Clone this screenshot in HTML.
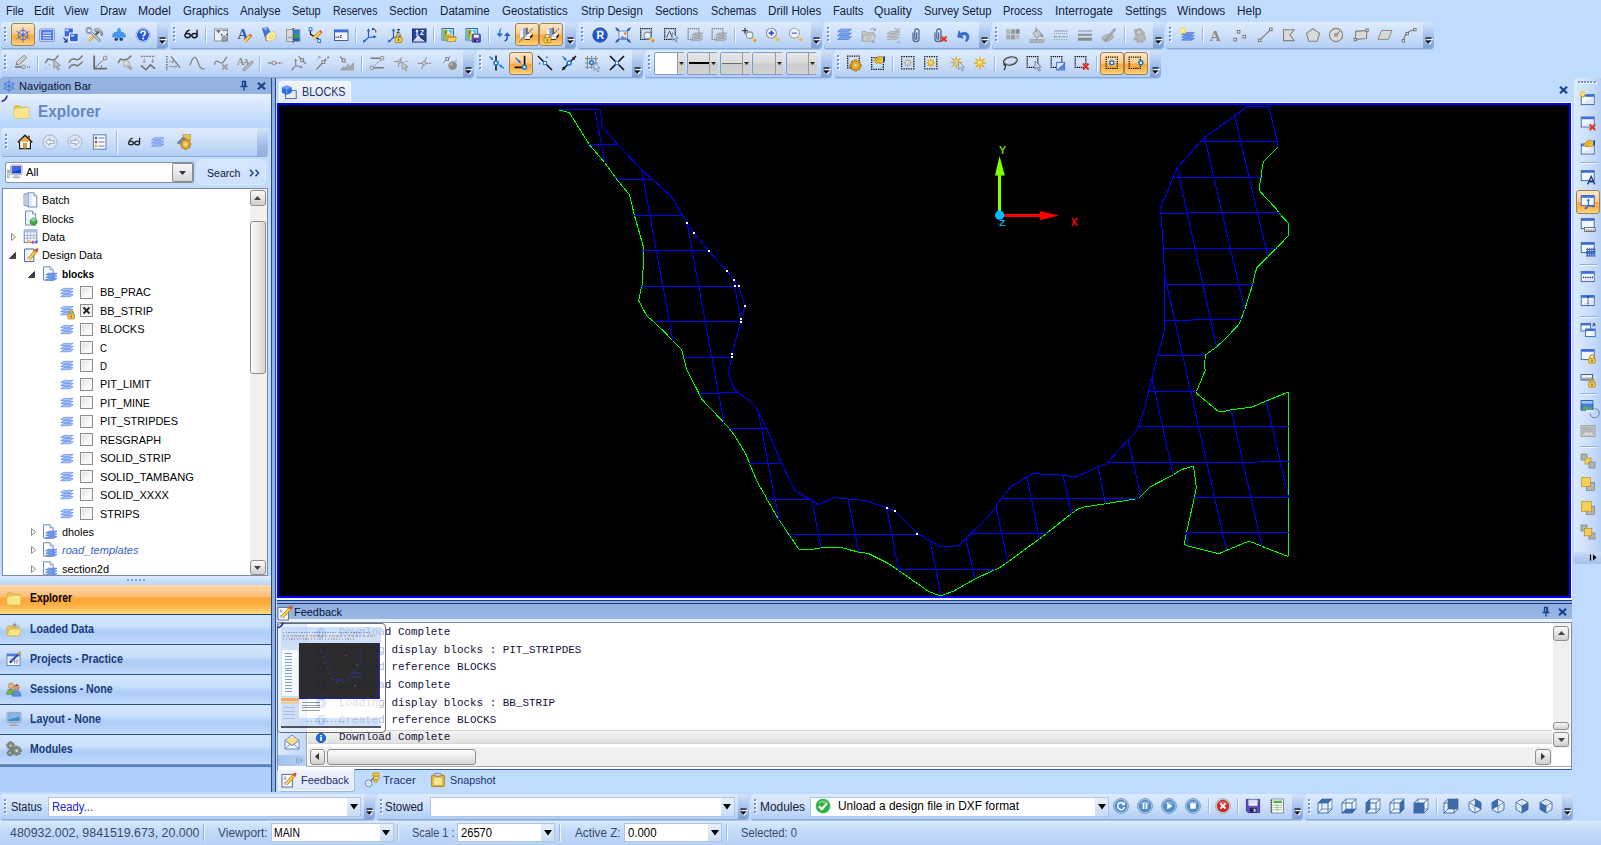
<!DOCTYPE html>
<html><head><meta charset="utf-8"><title>BLOCKS</title>
<style>
html,body{margin:0;padding:0;}
body{width:1601px;height:845px;overflow:hidden;background:#BFDBFF;position:relative;font-family:"Liberation Sans",sans-serif;}
body div,body span,body svg{position:absolute;display:block;}
svg{overflow:visible;}
</style></head><body>
<div style="left:0px;top:0px;width:1601px;height:22px;background:linear-gradient(#C3DDFF,#BFDBFF);"></div>
<span style="left:6.00px;top:2.84px;font:12px/16px 'Liberation Sans',sans-serif;color:#15213A;white-space:pre;transform-origin:0 0;transform:scaleX(0.9102);">File</span>
<span style="left:33.70px;top:2.84px;font:12px/16px 'Liberation Sans',sans-serif;color:#15213A;white-space:pre;transform-origin:0 0;transform:scaleX(0.9817);">Edit</span>
<span style="left:64.00px;top:2.84px;font:12px/16px 'Liberation Sans',sans-serif;color:#15213A;white-space:pre;transform-origin:0 0;transform:scaleX(0.9460);">View</span>
<span style="left:100.00px;top:2.84px;font:12px/16px 'Liberation Sans',sans-serif;color:#15213A;white-space:pre;transform-origin:0 0;transform:scaleX(0.9464);">Draw</span>
<span style="left:138.30px;top:2.84px;font:12px/16px 'Liberation Sans',sans-serif;color:#15213A;white-space:pre;transform-origin:0 0;transform:scaleX(1.0097);">Model</span>
<span style="left:183.00px;top:2.84px;font:12px/16px 'Liberation Sans',sans-serif;color:#15213A;white-space:pre;transform-origin:0 0;transform:scaleX(0.9517);">Graphics</span>
<span style="left:240.00px;top:2.84px;font:12px/16px 'Liberation Sans',sans-serif;color:#15213A;white-space:pre;transform-origin:0 0;transform:scaleX(0.9510);">Analyse</span>
<span style="left:291.70px;top:2.84px;font:12px/16px 'Liberation Sans',sans-serif;color:#15213A;white-space:pre;transform-origin:0 0;transform:scaleX(0.9152);">Setup</span>
<span style="left:333.20px;top:2.84px;font:12px/16px 'Liberation Sans',sans-serif;color:#15213A;white-space:pre;transform-origin:0 0;transform:scaleX(0.8780);">Reserves</span>
<span style="left:388.90px;top:2.84px;font:12px/16px 'Liberation Sans',sans-serif;color:#15213A;white-space:pre;transform-origin:0 0;transform:scaleX(0.9594);">Section</span>
<span style="left:440.00px;top:2.84px;font:12px/16px 'Liberation Sans',sans-serif;color:#15213A;white-space:pre;transform-origin:0 0;transform:scaleX(0.9677);">Datamine</span>
<span style="left:501.90px;top:2.84px;font:12px/16px 'Liberation Sans',sans-serif;color:#15213A;white-space:pre;transform-origin:0 0;transform:scaleX(0.9579);">Geostatistics</span>
<span style="left:580.50px;top:2.84px;font:12px/16px 'Liberation Sans',sans-serif;color:#15213A;white-space:pre;transform-origin:0 0;transform:scaleX(0.9440);">Strip Design</span>
<span style="left:655.30px;top:2.84px;font:12px/16px 'Liberation Sans',sans-serif;color:#15213A;white-space:pre;transform-origin:0 0;transform:scaleX(0.9386);">Sections</span>
<span style="left:711.30px;top:2.84px;font:12px/16px 'Liberation Sans',sans-serif;color:#15213A;white-space:pre;transform-origin:0 0;transform:scaleX(0.9036);">Schemas</span>
<span style="left:768.30px;top:2.84px;font:12px/16px 'Liberation Sans',sans-serif;color:#15213A;white-space:pre;transform-origin:0 0;transform:scaleX(0.9749);">Drill Holes</span>
<span style="left:833.40px;top:2.84px;font:12px/16px 'Liberation Sans',sans-serif;color:#15213A;white-space:pre;transform-origin:0 0;transform:scaleX(0.9303);">Faults</span>
<span style="left:873.90px;top:2.84px;font:12px/16px 'Liberation Sans',sans-serif;color:#15213A;white-space:pre;transform-origin:0 0;transform:scaleX(1.0121);">Quality</span>
<span style="left:923.50px;top:2.84px;font:12px/16px 'Liberation Sans',sans-serif;color:#15213A;white-space:pre;transform-origin:0 0;transform:scaleX(0.9370);">Survey Setup</span>
<span style="left:1003.00px;top:2.84px;font:12px/16px 'Liberation Sans',sans-serif;color:#15213A;white-space:pre;transform-origin:0 0;transform:scaleX(0.9112);">Process</span>
<span style="left:1055.00px;top:2.84px;font:12px/16px 'Liberation Sans',sans-serif;color:#15213A;white-space:pre;transform-origin:0 0;transform:scaleX(0.9994);">Interrogate</span>
<span style="left:1125.20px;top:2.84px;font:12px/16px 'Liberation Sans',sans-serif;color:#15213A;white-space:pre;transform-origin:0 0;transform:scaleX(0.9594);">Settings</span>
<span style="left:1177.30px;top:2.84px;font:12px/16px 'Liberation Sans',sans-serif;color:#15213A;white-space:pre;transform-origin:0 0;transform:scaleX(0.9922);">Windows</span>
<span style="left:1237.40px;top:2.84px;font:12px/16px 'Liberation Sans',sans-serif;color:#15213A;white-space:pre;transform-origin:0 0;transform:scaleX(0.9887);">Help</span>
<div style="left:1px;top:22px;width:167px;height:26px;background:linear-gradient(#DDEBFD 0%,#CFE1FA 45%,#BDD5F7 80%,#B2CCF3 100%);border-radius:3px 4px 4px 3px;box-shadow:0 1px 0 #86A9DC, 0 2px 0 #A9C6EF;"></div>
<div style="left:157px;top:22px;width:11px;height:26px;background:linear-gradient(#D3E3F9 0%,#A9C3EC 50%,#7F9FD6 100%);border-radius:0 4px 4px 0;"></div>
<svg style="left:159px;top:36.7px;" width="8" height="9" viewBox="0 0 8 9"><path d="M1 1.5h6" stroke="#fff" stroke-width="1" transform="translate(1,1)"/><path d="M0.5 1h6" stroke="#000" stroke-width="1.2"/><path d="M1.2 4.5h6l-3 3.2z" fill="#fff"/><path d="M0.3 3.6h6l-3 3.2z" fill="#000"/></svg>
<svg style="left:4px;top:27px;" width="4" height="17" viewBox="0 0 4 17"><rect x="1" y="1" width="2" height="2" fill="#fff"/><rect x="0" y="0" width="2" height="2" fill="#6B93D6"/><rect x="1" y="5" width="2" height="2" fill="#fff"/><rect x="0" y="4" width="2" height="2" fill="#6B93D6"/><rect x="1" y="9" width="2" height="2" fill="#fff"/><rect x="0" y="8" width="2" height="2" fill="#6B93D6"/><rect x="1" y="13" width="2" height="2" fill="#fff"/><rect x="0" y="12" width="2" height="2" fill="#6B93D6"/></svg>
<div style="left:170px;top:22px;width:406px;height:26px;background:linear-gradient(#DDEBFD 0%,#CFE1FA 45%,#BDD5F7 80%,#B2CCF3 100%);border-radius:3px 4px 4px 3px;box-shadow:0 1px 0 #86A9DC, 0 2px 0 #A9C6EF;"></div>
<div style="left:565px;top:22px;width:11px;height:26px;background:linear-gradient(#D3E3F9 0%,#A9C3EC 50%,#7F9FD6 100%);border-radius:0 4px 4px 0;"></div>
<svg style="left:567px;top:36.7px;" width="8" height="9" viewBox="0 0 8 9"><path d="M1 1.5h6" stroke="#fff" stroke-width="1" transform="translate(1,1)"/><path d="M0.5 1h6" stroke="#000" stroke-width="1.2"/><path d="M1.2 4.5h6l-3 3.2z" fill="#fff"/><path d="M0.3 3.6h6l-3 3.2z" fill="#000"/></svg>
<svg style="left:173px;top:27px;" width="4" height="17" viewBox="0 0 4 17"><rect x="1" y="1" width="2" height="2" fill="#fff"/><rect x="0" y="0" width="2" height="2" fill="#6B93D6"/><rect x="1" y="5" width="2" height="2" fill="#fff"/><rect x="0" y="4" width="2" height="2" fill="#6B93D6"/><rect x="1" y="9" width="2" height="2" fill="#fff"/><rect x="0" y="8" width="2" height="2" fill="#6B93D6"/><rect x="1" y="13" width="2" height="2" fill="#fff"/><rect x="0" y="12" width="2" height="2" fill="#6B93D6"/></svg>
<div style="left:578px;top:22px;width:244px;height:26px;background:linear-gradient(#DDEBFD 0%,#CFE1FA 45%,#BDD5F7 80%,#B2CCF3 100%);border-radius:3px 4px 4px 3px;box-shadow:0 1px 0 #86A9DC, 0 2px 0 #A9C6EF;"></div>
<div style="left:811px;top:22px;width:11px;height:26px;background:linear-gradient(#D3E3F9 0%,#A9C3EC 50%,#7F9FD6 100%);border-radius:0 4px 4px 0;"></div>
<svg style="left:813px;top:36.7px;" width="8" height="9" viewBox="0 0 8 9"><path d="M1 1.5h6" stroke="#fff" stroke-width="1" transform="translate(1,1)"/><path d="M0.5 1h6" stroke="#000" stroke-width="1.2"/><path d="M1.2 4.5h6l-3 3.2z" fill="#fff"/><path d="M0.3 3.6h6l-3 3.2z" fill="#000"/></svg>
<svg style="left:581px;top:27px;" width="4" height="17" viewBox="0 0 4 17"><rect x="1" y="1" width="2" height="2" fill="#fff"/><rect x="0" y="0" width="2" height="2" fill="#6B93D6"/><rect x="1" y="5" width="2" height="2" fill="#fff"/><rect x="0" y="4" width="2" height="2" fill="#6B93D6"/><rect x="1" y="9" width="2" height="2" fill="#fff"/><rect x="0" y="8" width="2" height="2" fill="#6B93D6"/><rect x="1" y="13" width="2" height="2" fill="#fff"/><rect x="0" y="12" width="2" height="2" fill="#6B93D6"/></svg>
<div style="left:824px;top:22px;width:166px;height:26px;background:linear-gradient(#DDEBFD 0%,#CFE1FA 45%,#BDD5F7 80%,#B2CCF3 100%);border-radius:3px 4px 4px 3px;box-shadow:0 1px 0 #86A9DC, 0 2px 0 #A9C6EF;"></div>
<div style="left:979px;top:22px;width:11px;height:26px;background:linear-gradient(#D3E3F9 0%,#A9C3EC 50%,#7F9FD6 100%);border-radius:0 4px 4px 0;"></div>
<svg style="left:981px;top:36.7px;" width="8" height="9" viewBox="0 0 8 9"><path d="M1 1.5h6" stroke="#fff" stroke-width="1" transform="translate(1,1)"/><path d="M0.5 1h6" stroke="#000" stroke-width="1.2"/><path d="M1.2 4.5h6l-3 3.2z" fill="#fff"/><path d="M0.3 3.6h6l-3 3.2z" fill="#000"/></svg>
<svg style="left:827px;top:27px;" width="4" height="17" viewBox="0 0 4 17"><rect x="1" y="1" width="2" height="2" fill="#fff"/><rect x="0" y="0" width="2" height="2" fill="#6B93D6"/><rect x="1" y="5" width="2" height="2" fill="#fff"/><rect x="0" y="4" width="2" height="2" fill="#6B93D6"/><rect x="1" y="9" width="2" height="2" fill="#fff"/><rect x="0" y="8" width="2" height="2" fill="#6B93D6"/><rect x="1" y="13" width="2" height="2" fill="#fff"/><rect x="0" y="12" width="2" height="2" fill="#6B93D6"/></svg>
<div style="left:992px;top:22px;width:172px;height:26px;background:linear-gradient(#DDEBFD 0%,#CFE1FA 45%,#BDD5F7 80%,#B2CCF3 100%);border-radius:3px 4px 4px 3px;box-shadow:0 1px 0 #86A9DC, 0 2px 0 #A9C6EF;"></div>
<div style="left:1153px;top:22px;width:11px;height:26px;background:linear-gradient(#D3E3F9 0%,#A9C3EC 50%,#7F9FD6 100%);border-radius:0 4px 4px 0;"></div>
<svg style="left:1155px;top:36.7px;" width="8" height="9" viewBox="0 0 8 9"><path d="M1 1.5h6" stroke="#fff" stroke-width="1" transform="translate(1,1)"/><path d="M0.5 1h6" stroke="#000" stroke-width="1.2"/><path d="M1.2 4.5h6l-3 3.2z" fill="#fff"/><path d="M0.3 3.6h6l-3 3.2z" fill="#000"/></svg>
<svg style="left:995px;top:27px;" width="4" height="17" viewBox="0 0 4 17"><rect x="1" y="1" width="2" height="2" fill="#fff"/><rect x="0" y="0" width="2" height="2" fill="#6B93D6"/><rect x="1" y="5" width="2" height="2" fill="#fff"/><rect x="0" y="4" width="2" height="2" fill="#6B93D6"/><rect x="1" y="9" width="2" height="2" fill="#fff"/><rect x="0" y="8" width="2" height="2" fill="#6B93D6"/><rect x="1" y="13" width="2" height="2" fill="#fff"/><rect x="0" y="12" width="2" height="2" fill="#6B93D6"/></svg>
<div style="left:1166px;top:22px;width:268px;height:26px;background:linear-gradient(#DDEBFD 0%,#CFE1FA 45%,#BDD5F7 80%,#B2CCF3 100%);border-radius:3px 4px 4px 3px;box-shadow:0 1px 0 #86A9DC, 0 2px 0 #A9C6EF;"></div>
<div style="left:1423px;top:22px;width:11px;height:26px;background:linear-gradient(#D3E3F9 0%,#A9C3EC 50%,#7F9FD6 100%);border-radius:0 4px 4px 0;"></div>
<svg style="left:1425px;top:36.7px;" width="8" height="9" viewBox="0 0 8 9"><path d="M1 1.5h6" stroke="#fff" stroke-width="1" transform="translate(1,1)"/><path d="M0.5 1h6" stroke="#000" stroke-width="1.2"/><path d="M1.2 4.5h6l-3 3.2z" fill="#fff"/><path d="M0.3 3.6h6l-3 3.2z" fill="#000"/></svg>
<svg style="left:1169px;top:27px;" width="4" height="17" viewBox="0 0 4 17"><rect x="1" y="1" width="2" height="2" fill="#fff"/><rect x="0" y="0" width="2" height="2" fill="#6B93D6"/><rect x="1" y="5" width="2" height="2" fill="#fff"/><rect x="0" y="4" width="2" height="2" fill="#6B93D6"/><rect x="1" y="9" width="2" height="2" fill="#fff"/><rect x="0" y="8" width="2" height="2" fill="#6B93D6"/><rect x="1" y="13" width="2" height="2" fill="#fff"/><rect x="0" y="12" width="2" height="2" fill="#6B93D6"/></svg>
<div style="left:1px;top:50px;width:473px;height:26.5px;background:linear-gradient(#DDEBFD 0%,#CFE1FA 45%,#BDD5F7 80%,#B2CCF3 100%);border-radius:3px 4px 4px 3px;box-shadow:0 1px 0 #86A9DC, 0 2px 0 #A9C6EF;"></div>
<div style="left:463px;top:50px;width:11px;height:26.5px;background:linear-gradient(#D3E3F9 0%,#A9C3EC 50%,#7F9FD6 100%);border-radius:0 4px 4px 0;"></div>
<svg style="left:465px;top:67.1px;" width="8" height="9" viewBox="0 0 8 9"><path d="M1 1.5h6" stroke="#fff" stroke-width="1" transform="translate(1,1)"/><path d="M0.5 1h6" stroke="#000" stroke-width="1.2"/><path d="M1.2 4.5h6l-3 3.2z" fill="#fff"/><path d="M0.3 3.6h6l-3 3.2z" fill="#000"/></svg>
<svg style="left:4px;top:55px;" width="4" height="17" viewBox="0 0 4 17"><rect x="1" y="1" width="2" height="2" fill="#fff"/><rect x="0" y="0" width="2" height="2" fill="#6B93D6"/><rect x="1" y="5" width="2" height="2" fill="#fff"/><rect x="0" y="4" width="2" height="2" fill="#6B93D6"/><rect x="1" y="9" width="2" height="2" fill="#fff"/><rect x="0" y="8" width="2" height="2" fill="#6B93D6"/><rect x="1" y="13" width="2" height="2" fill="#fff"/><rect x="0" y="12" width="2" height="2" fill="#6B93D6"/></svg>
<div style="left:476px;top:50px;width:167px;height:26.5px;background:linear-gradient(#DDEBFD 0%,#CFE1FA 45%,#BDD5F7 80%,#B2CCF3 100%);border-radius:3px 4px 4px 3px;box-shadow:0 1px 0 #86A9DC, 0 2px 0 #A9C6EF;"></div>
<div style="left:632px;top:50px;width:11px;height:26.5px;background:linear-gradient(#D3E3F9 0%,#A9C3EC 50%,#7F9FD6 100%);border-radius:0 4px 4px 0;"></div>
<svg style="left:634px;top:67.1px;" width="8" height="9" viewBox="0 0 8 9"><path d="M1 1.5h6" stroke="#fff" stroke-width="1" transform="translate(1,1)"/><path d="M0.5 1h6" stroke="#000" stroke-width="1.2"/><path d="M1.2 4.5h6l-3 3.2z" fill="#fff"/><path d="M0.3 3.6h6l-3 3.2z" fill="#000"/></svg>
<svg style="left:479px;top:55px;" width="4" height="17" viewBox="0 0 4 17"><rect x="1" y="1" width="2" height="2" fill="#fff"/><rect x="0" y="0" width="2" height="2" fill="#6B93D6"/><rect x="1" y="5" width="2" height="2" fill="#fff"/><rect x="0" y="4" width="2" height="2" fill="#6B93D6"/><rect x="1" y="9" width="2" height="2" fill="#fff"/><rect x="0" y="8" width="2" height="2" fill="#6B93D6"/><rect x="1" y="13" width="2" height="2" fill="#fff"/><rect x="0" y="12" width="2" height="2" fill="#6B93D6"/></svg>
<div style="left:645px;top:50px;width:187px;height:26.5px;background:linear-gradient(#DDEBFD 0%,#CFE1FA 45%,#BDD5F7 80%,#B2CCF3 100%);border-radius:3px 4px 4px 3px;box-shadow:0 1px 0 #86A9DC, 0 2px 0 #A9C6EF;"></div>
<div style="left:821px;top:50px;width:11px;height:26.5px;background:linear-gradient(#D3E3F9 0%,#A9C3EC 50%,#7F9FD6 100%);border-radius:0 4px 4px 0;"></div>
<svg style="left:823px;top:67.1px;" width="8" height="9" viewBox="0 0 8 9"><path d="M1 1.5h6" stroke="#fff" stroke-width="1" transform="translate(1,1)"/><path d="M0.5 1h6" stroke="#000" stroke-width="1.2"/><path d="M1.2 4.5h6l-3 3.2z" fill="#fff"/><path d="M0.3 3.6h6l-3 3.2z" fill="#000"/></svg>
<svg style="left:648px;top:55px;" width="4" height="17" viewBox="0 0 4 17"><rect x="1" y="1" width="2" height="2" fill="#fff"/><rect x="0" y="0" width="2" height="2" fill="#6B93D6"/><rect x="1" y="5" width="2" height="2" fill="#fff"/><rect x="0" y="4" width="2" height="2" fill="#6B93D6"/><rect x="1" y="9" width="2" height="2" fill="#fff"/><rect x="0" y="8" width="2" height="2" fill="#6B93D6"/><rect x="1" y="13" width="2" height="2" fill="#fff"/><rect x="0" y="12" width="2" height="2" fill="#6B93D6"/></svg>
<div style="left:834px;top:50px;width:327px;height:26.5px;background:linear-gradient(#DDEBFD 0%,#CFE1FA 45%,#BDD5F7 80%,#B2CCF3 100%);border-radius:3px 4px 4px 3px;box-shadow:0 1px 0 #86A9DC, 0 2px 0 #A9C6EF;"></div>
<div style="left:1150px;top:50px;width:11px;height:26.5px;background:linear-gradient(#D3E3F9 0%,#A9C3EC 50%,#7F9FD6 100%);border-radius:0 4px 4px 0;"></div>
<svg style="left:1152px;top:67.1px;" width="8" height="9" viewBox="0 0 8 9"><path d="M1 1.5h6" stroke="#fff" stroke-width="1" transform="translate(1,1)"/><path d="M0.5 1h6" stroke="#000" stroke-width="1.2"/><path d="M1.2 4.5h6l-3 3.2z" fill="#fff"/><path d="M0.3 3.6h6l-3 3.2z" fill="#000"/></svg>
<svg style="left:837px;top:55px;" width="4" height="17" viewBox="0 0 4 17"><rect x="1" y="1" width="2" height="2" fill="#fff"/><rect x="0" y="0" width="2" height="2" fill="#6B93D6"/><rect x="1" y="5" width="2" height="2" fill="#fff"/><rect x="0" y="4" width="2" height="2" fill="#6B93D6"/><rect x="1" y="9" width="2" height="2" fill="#fff"/><rect x="0" y="8" width="2" height="2" fill="#6B93D6"/><rect x="1" y="13" width="2" height="2" fill="#fff"/><rect x="0" y="12" width="2" height="2" fill="#6B93D6"/></svg>
<div style="left:205px;top:27px;width:1px;height:16px;background:#9ABAEE;"></div>
<div style="left:206px;top:27px;width:1px;height:16px;background:#F3F8FF;"></div>
<div style="left:355px;top:27px;width:1px;height:16px;background:#9ABAEE;"></div>
<div style="left:356px;top:27px;width:1px;height:16px;background:#F3F8FF;"></div>
<div style="left:433px;top:27px;width:1px;height:16px;background:#9ABAEE;"></div>
<div style="left:434px;top:27px;width:1px;height:16px;background:#F3F8FF;"></div>
<div style="left:488px;top:27px;width:1px;height:16px;background:#9ABAEE;"></div>
<div style="left:489px;top:27px;width:1px;height:16px;background:#F3F8FF;"></div>
<div style="left:734px;top:27px;width:1px;height:16px;background:#9ABAEE;"></div>
<div style="left:735px;top:27px;width:1px;height:16px;background:#F3F8FF;"></div>
<div style="left:1124px;top:27px;width:1px;height:16px;background:#9ABAEE;"></div>
<div style="left:1125px;top:27px;width:1px;height:16px;background:#F3F8FF;"></div>
<div style="left:1202px;top:27px;width:1px;height:16px;background:#9ABAEE;"></div>
<div style="left:1203px;top:27px;width:1px;height:16px;background:#F3F8FF;"></div>
<div style="left:37px;top:55.5px;width:1px;height:16px;background:#9ABAEE;"></div>
<div style="left:38px;top:55.5px;width:1px;height:16px;background:#F3F8FF;"></div>
<div style="left:259px;top:55.5px;width:1px;height:16px;background:#9ABAEE;"></div>
<div style="left:260px;top:55.5px;width:1px;height:16px;background:#F3F8FF;"></div>
<div style="left:361px;top:55.5px;width:1px;height:16px;background:#9ABAEE;"></div>
<div style="left:362px;top:55.5px;width:1px;height:16px;background:#F3F8FF;"></div>
<div style="left:892px;top:55.5px;width:1px;height:16px;background:#9ABAEE;"></div>
<div style="left:893px;top:55.5px;width:1px;height:16px;background:#F3F8FF;"></div>
<div style="left:994px;top:55.5px;width:1px;height:16px;background:#9ABAEE;"></div>
<div style="left:995px;top:55.5px;width:1px;height:16px;background:#F3F8FF;"></div>
<div style="left:1096px;top:55.5px;width:1px;height:16px;background:#9ABAEE;"></div>
<div style="left:1097px;top:55.5px;width:1px;height:16px;background:#F3F8FF;"></div>
<div style="left:11px;top:23.2px;width:24px;height:23.3px;box-sizing:border-box;border:1px solid #9A8456;border-radius:3px;background:linear-gradient(#FEE7C8 0%,#FDD6A2 28%,#FDC684 49%,#FBA73C 52%,#FCB54C 75%,#FDD580 100%);"></div>
<div style="left:515.3px;top:23.2px;width:23.5px;height:23.3px;box-sizing:border-box;border:1px solid #9A8456;border-radius:3px;background:linear-gradient(#FEE7C8 0%,#FDD6A2 28%,#FDC684 49%,#FBA73C 52%,#FCB54C 75%,#FDD580 100%);"></div>
<div style="left:539.3px;top:23.2px;width:24px;height:23.3px;box-sizing:border-box;border:1px solid #9A8456;border-radius:3px;background:linear-gradient(#FEE7C8 0%,#FDD6A2 28%,#FDC684 49%,#FBA73C 52%,#FCB54C 75%,#FDD580 100%);"></div>
<div style="left:509.3px;top:51.6px;width:24px;height:23.3px;box-sizing:border-box;border:1px solid #9A8456;border-radius:3px;background:linear-gradient(#FEE7C8 0%,#FDD6A2 28%,#FDC684 49%,#FBA73C 52%,#FCB54C 75%,#FDD580 100%);"></div>
<div style="left:1100.2px;top:51.6px;width:23.4px;height:23.3px;box-sizing:border-box;border:1px solid #9A8456;border-radius:3px;background:linear-gradient(#FEE7C8 0%,#FDD6A2 28%,#FDC684 49%,#FBA73C 52%,#FCB54C 75%,#FDD580 100%);"></div>
<div style="left:1123.6px;top:51.6px;width:24px;height:23.3px;box-sizing:border-box;border:1px solid #9A8456;border-radius:3px;background:linear-gradient(#FEE7C8 0%,#FDD6A2 28%,#FDC684 49%,#FBA73C 52%,#FCB54C 75%,#FDD580 100%);"></div>
<div style="left:0px;top:77.5px;width:271px;height:17px;background:#95B3E0;"></div>
<span style="left:19.00px;top:79.19px;font:11px/14px 'Liberation Sans',sans-serif;color:#0A1433;white-space:pre;transform-origin:0 0;transform:scaleX(1.0049);">Navigation Bar</span>
<svg style="left:240px;top:81px;" width="8" height="10" viewBox="0 0 8 10"><path d="M2 0.5h4M2.5 0.5v5M5.5 0.5v5M4.8 0.5v5M0.5 5.5h7M4 5.5v4" stroke="#15428B" stroke-width="1.35" fill="none"/></svg>
<svg style="left:257px;top:82px;" width="9" height="8" viewBox="0 0 9 8"><path d="M1 0.8l7 6.4M8 0.8l-7 6.4" stroke="#15428B" stroke-width="2.2" fill="none"/></svg>
<div style="left:0px;top:94.2px;width:271px;height:33.5px;background:linear-gradient(#E8F1FE,#D3E4FD 45%,#B5D3FC);"></div>
<span style="left:37.50px;top:100.98px;font:bold 16.5px/21px 'Liberation Sans',sans-serif;color:#6487C4;white-space:pre;transform-origin:0 0;transform:scaleX(0.9337);">Explorer</span>
<svg style="left:1px;top:95px;" width="8" height="8" viewBox="0 0 8 8"><path d="M6 0.5Q5.5 5 0.5 6.5" stroke="#1A2F9A" stroke-width="1.6" fill="none"/></svg>
<div style="left:1px;top:127.8px;width:267px;height:27.8px;background:linear-gradient(#DDEBFD 0%,#CFE1FA 45%,#BDD5F7 80%,#B2CCF3 100%);border-radius:3px;box-shadow:0 1px 0 #86A9DC;"></div>
<div style="left:257px;top:127.8px;width:11px;height:27.8px;background:linear-gradient(#D3E3F9 0%,#A9C3EC 50%,#8FAEE0 100%);border-radius:0 4px 4px 0;"></div>
<svg style="left:259px;top:146px;" width="8" height="8" viewBox="0 0 8 8"><path d="M0.5 1h6" stroke="#9AB3DD" stroke-width="1.2"/><path d="M0.3 3.6h6l-3 3.2z" fill="#9AB3DD"/></svg>
<svg style="left:5px;top:133.5px;" width="4" height="17" viewBox="0 0 4 17"><rect x="1" y="1" width="2" height="2" fill="#fff"/><rect x="0" y="0" width="2" height="2" fill="#6B93D6"/><rect x="1" y="5" width="2" height="2" fill="#fff"/><rect x="0" y="4" width="2" height="2" fill="#6B93D6"/><rect x="1" y="9" width="2" height="2" fill="#fff"/><rect x="0" y="8" width="2" height="2" fill="#6B93D6"/><rect x="1" y="13" width="2" height="2" fill="#fff"/><rect x="0" y="12" width="2" height="2" fill="#6B93D6"/></svg>
<div style="left:116px;top:131px;width:1px;height:23px;background:#9ABAEE;"></div>
<div style="left:117px;top:131px;width:1px;height:23px;background:#F3F8FF;"></div>
<div style="left:5px;top:162px;width:188.5px;height:20.5px;box-sizing:border-box;border:1px solid #8A8F99;border-radius:2px;background:#fff;"></div>
<div style="left:171.5px;top:163px;width:21px;height:18.5px;box-sizing:border-box;border:1px solid #8E8E8E;border-radius:1px;background:linear-gradient(#F6F6F6,#E9E9E9 50%,#D4D4D4);"></div>
<svg style="left:178.5px;top:170.5px;" width="7" height="4" viewBox="0 0 7 4"><path d="M0 0h7l-3.5 4z" fill="#333"/></svg>
<span style="left:26.00px;top:165.19px;font:11px/14px 'Liberation Sans',sans-serif;color:#000;white-space:pre;transform-origin:0 0;transform:scaleX(1.0225);">All</span>
<div style="left:197px;top:160px;width:68px;height:24.4px;background:linear-gradient(#D6E6FD,#CCE0FC);border-radius:5px;box-shadow:0 0 0 1px #DCEAFD;"></div>
<span style="left:206.80px;top:165.52px;font:11.5px/15px 'Liberation Sans',sans-serif;color:#111B33;white-space:pre;transform-origin:0 0;transform:scaleX(0.9193);">Search</span>
<svg style="left:248.5px;top:168.5px;" width="12" height="8" viewBox="0 0 12 8"><path d="M1 0.8l3 3.2-3 3.2M6.5 0.8l3 3.2-3 3.2" stroke="#15428B" stroke-width="1.5" fill="none"/></svg>
<div style="left:1.5px;top:188px;width:266.5px;height:388px;box-sizing:border-box;border:1px solid #7D8B9C;background:#fff;"></div>
<div style="left:250px;top:189px;width:17px;height:386px;background:#F0F0F0;"></div>
<div style="left:249.8px;top:190.3px;width:16px;height:15.5px;box-sizing:border-box;border:1px solid #8E8E8E;border-radius:3px;background:linear-gradient(#FAFAFA,#E4E4E4 50%,#CFCFCF);"></div>
<svg style="left:254.3px;top:196px;" width="7" height="4" viewBox="0 0 7 4"><path d="M0 4h7l-3.5-4z" fill="#444"/></svg>
<div style="left:249.8px;top:559.5px;width:16px;height:15.5px;box-sizing:border-box;border:1px solid #8E8E8E;border-radius:3px;background:linear-gradient(#FAFAFA,#E4E4E4 50%,#CFCFCF);"></div>
<svg style="left:254.3px;top:565.5px;" width="7" height="4" viewBox="0 0 7 4"><path d="M0 0h7l-3.5 4z" fill="#444"/></svg>
<div style="left:249.8px;top:221px;width:16px;height:153px;box-sizing:border-box;border:1px solid #8E8E8E;border-radius:3px;background:linear-gradient(90deg,#FBFBFB,#EDEDED 45%,#D6D6D6);"></div>
<span style="left:42.00px;top:193.19px;font:11px/14px 'Liberation Sans',sans-serif;color:#000;white-space:pre;transform-origin:0 0;transform:scaleX(0.9776);">Batch</span>
<span style="left:42.00px;top:211.62px;font:11px/14px 'Liberation Sans',sans-serif;color:#000;white-space:pre;transform-origin:0 0;transform:scaleX(0.9877);">Blocks</span>
<span style="left:42.00px;top:230.05px;font:11px/14px 'Liberation Sans',sans-serif;color:#000;white-space:pre;transform-origin:0 0;transform:scaleX(0.9899);">Data</span>
<span style="left:42.00px;top:248.48px;font:11px/14px 'Liberation Sans',sans-serif;color:#000;white-space:pre;transform-origin:0 0;transform:scaleX(0.9913);">Design Data</span>
<span style="left:61.50px;top:266.91px;font:bold 11px/14px 'Liberation Sans',sans-serif;color:#000;white-space:pre;transform-origin:0 0;transform:scaleX(0.9183);">blocks</span>
<span style="left:100.00px;top:285.34px;font:11px/14px 'Liberation Sans',sans-serif;color:#000;white-space:pre;transform-origin:0 0;transform:scaleX(0.9931);">BB_PRAC</span>
<div style="left:80px;top:285.65px;width:13px;height:13px;box-sizing:border-box;border:1px solid #8E8F8F;background:linear-gradient(135deg,#DCDCD7,#F7F7F5 60%,#fff);box-shadow:inset 0 0 0 1px #F4F4F4;"></div>
<span style="left:100.00px;top:303.77px;font:11px/14px 'Liberation Sans',sans-serif;color:#000;white-space:pre;transform-origin:0 0;transform:scaleX(0.9965);">BB_STRIP</span>
<div style="left:80px;top:304.08px;width:13px;height:13px;box-sizing:border-box;border:1px solid #8E8F8F;background:linear-gradient(135deg,#DCDCD7,#F7F7F5 60%,#fff);box-shadow:inset 0 0 0 1px #F4F4F4;"></div>
<svg style="left:83px;top:307.08px;" width="7" height="7" viewBox="0 0 7 7"><path d="M0.5 0.5l6 6M6.5 0.5l-6 6" stroke="#222" stroke-width="1.8"/></svg>
<span style="left:100.00px;top:322.20px;font:11px/14px 'Liberation Sans',sans-serif;color:#000;white-space:pre;transform-origin:0 0;transform:scaleX(0.9971);">BLOCKS</span>
<div style="left:80px;top:322.51px;width:13px;height:13px;box-sizing:border-box;border:1px solid #8E8F8F;background:linear-gradient(135deg,#DCDCD7,#F7F7F5 60%,#fff);box-shadow:inset 0 0 0 1px #F4F4F4;"></div>
<span style="left:100.00px;top:340.63px;font:11px/14px 'Liberation Sans',sans-serif;color:#000;white-space:pre;transform-origin:0 0;transform:scaleX(0.8812);">C</span>
<div style="left:80px;top:340.94px;width:13px;height:13px;box-sizing:border-box;border:1px solid #8E8F8F;background:linear-gradient(135deg,#DCDCD7,#F7F7F5 60%,#fff);box-shadow:inset 0 0 0 1px #F4F4F4;"></div>
<span style="left:100.00px;top:359.06px;font:11px/14px 'Liberation Sans',sans-serif;color:#000;white-space:pre;transform-origin:0 0;transform:scaleX(0.8812);">D</span>
<div style="left:80px;top:359.37px;width:13px;height:13px;box-sizing:border-box;border:1px solid #8E8F8F;background:linear-gradient(135deg,#DCDCD7,#F7F7F5 60%,#fff);box-shadow:inset 0 0 0 1px #F4F4F4;"></div>
<span style="left:100.00px;top:377.49px;font:11px/14px 'Liberation Sans',sans-serif;color:#000;white-space:pre;transform-origin:0 0;transform:scaleX(0.9933);">PIT_LIMIT</span>
<div style="left:80px;top:377.8px;width:13px;height:13px;box-sizing:border-box;border:1px solid #8E8F8F;background:linear-gradient(135deg,#DCDCD7,#F7F7F5 60%,#fff);box-shadow:inset 0 0 0 1px #F4F4F4;"></div>
<span style="left:100.00px;top:395.92px;font:11px/14px 'Liberation Sans',sans-serif;color:#000;white-space:pre;transform-origin:0 0;transform:scaleX(0.9856);">PIT_MINE</span>
<div style="left:80px;top:396.23px;width:13px;height:13px;box-sizing:border-box;border:1px solid #8E8F8F;background:linear-gradient(135deg,#DCDCD7,#F7F7F5 60%,#fff);box-shadow:inset 0 0 0 1px #F4F4F4;"></div>
<span style="left:100.00px;top:414.35px;font:11px/14px 'Liberation Sans',sans-serif;color:#000;white-space:pre;transform-origin:0 0;transform:scaleX(0.9969);">PIT_STRIPDES</span>
<div style="left:80px;top:414.66px;width:13px;height:13px;box-sizing:border-box;border:1px solid #8E8F8F;background:linear-gradient(135deg,#DCDCD7,#F7F7F5 60%,#fff);box-shadow:inset 0 0 0 1px #F4F4F4;"></div>
<span style="left:100.00px;top:432.78px;font:11px/14px 'Liberation Sans',sans-serif;color:#000;white-space:pre;transform-origin:0 0;transform:scaleX(0.9880);">RESGRAPH</span>
<div style="left:80px;top:433.09px;width:13px;height:13px;box-sizing:border-box;border:1px solid #8E8F8F;background:linear-gradient(135deg,#DCDCD7,#F7F7F5 60%,#fff);box-shadow:inset 0 0 0 1px #F4F4F4;"></div>
<span style="left:100.00px;top:451.21px;font:11px/14px 'Liberation Sans',sans-serif;color:#000;white-space:pre;transform-origin:0 0;transform:scaleX(0.9927);">SOLID_STRIP</span>
<div style="left:80px;top:451.52px;width:13px;height:13px;box-sizing:border-box;border:1px solid #8E8F8F;background:linear-gradient(135deg,#DCDCD7,#F7F7F5 60%,#fff);box-shadow:inset 0 0 0 1px #F4F4F4;"></div>
<span style="left:100.00px;top:469.64px;font:11px/14px 'Liberation Sans',sans-serif;color:#000;white-space:pre;transform-origin:0 0;transform:scaleX(1.0139);">SOLID_TAMBANG</span>
<div style="left:80px;top:469.95px;width:13px;height:13px;box-sizing:border-box;border:1px solid #8E8F8F;background:linear-gradient(135deg,#DCDCD7,#F7F7F5 60%,#fff);box-shadow:inset 0 0 0 1px #F4F4F4;"></div>
<span style="left:100.00px;top:488.07px;font:11px/14px 'Liberation Sans',sans-serif;color:#000;white-space:pre;transform-origin:0 0;transform:scaleX(1.0076);">SOLID_XXXX</span>
<div style="left:80px;top:488.38px;width:13px;height:13px;box-sizing:border-box;border:1px solid #8E8F8F;background:linear-gradient(135deg,#DCDCD7,#F7F7F5 60%,#fff);box-shadow:inset 0 0 0 1px #F4F4F4;"></div>
<span style="left:100.00px;top:506.50px;font:11px/14px 'Liberation Sans',sans-serif;color:#000;white-space:pre;transform-origin:0 0;transform:scaleX(0.9942);">STRIPS</span>
<div style="left:80px;top:506.81px;width:13px;height:13px;box-sizing:border-box;border:1px solid #8E8F8F;background:linear-gradient(135deg,#DCDCD7,#F7F7F5 60%,#fff);box-shadow:inset 0 0 0 1px #F4F4F4;"></div>
<span style="left:61.50px;top:524.93px;font:11px/14px 'Liberation Sans',sans-serif;color:#000;white-space:pre;transform-origin:0 0;transform:scaleX(0.9873);">dholes</span>
<span style="left:61.50px;top:543.36px;font:italic 11px/14px 'Liberation Sans',sans-serif;color:#3A5FCD;white-space:pre;transform-origin:0 0;transform:scaleX(1.0089);">road_templates</span>
<span style="left:61.50px;top:561.79px;font:11px/14px 'Liberation Sans',sans-serif;color:#000;white-space:pre;transform-origin:0 0;transform:scaleX(0.9982);">section2d</span>
<svg style="left:11px;top:232.86px;" width="5" height="8" viewBox="0 0 5 8"><path d="M0.5 0.5v7l4-3.5z" fill="#fff" stroke="#8A8A8A" stroke-width="1"/></svg>
<svg style="left:9px;top:252.29px;" width="7" height="7" viewBox="0 0 7 7"><path d="M6.5 0.5v6h-6z" fill="#404040" stroke="#262626" stroke-width="0.8"/></svg>
<svg style="left:28px;top:270.72px;" width="7" height="7" viewBox="0 0 7 7"><path d="M6.5 0.5v6h-6z" fill="#404040" stroke="#262626" stroke-width="0.8"/></svg>
<svg style="left:31px;top:527.74px;" width="5" height="8" viewBox="0 0 5 8"><path d="M0.5 0.5v7l4-3.5z" fill="#fff" stroke="#8A8A8A" stroke-width="1"/></svg>
<svg style="left:31px;top:546.17px;" width="5" height="8" viewBox="0 0 5 8"><path d="M0.5 0.5v7l4-3.5z" fill="#fff" stroke="#8A8A8A" stroke-width="1"/></svg>
<svg style="left:31px;top:564.6px;" width="5" height="8" viewBox="0 0 5 8"><path d="M0.5 0.5v7l4-3.5z" fill="#fff" stroke="#8A8A8A" stroke-width="1"/></svg>
<div style="left:0px;top:576px;width:271px;height:8.5px;background:linear-gradient(#DDEBFD,#BAD5F8);"></div>
<div style="left:1.5px;top:575px;width:266.5px;height:1px;background:#7D8B9C;"></div>
<svg style="left:127px;top:579px;" width="20" height="3" viewBox="0 0 20 3"><rect x="0" y="0" width="2" height="2" fill="#7DA0D8"/><rect x="4" y="0" width="2" height="2" fill="#7DA0D8"/><rect x="8" y="0" width="2" height="2" fill="#7DA0D8"/><rect x="12" y="0" width="2" height="2" fill="#7DA0D8"/><rect x="16" y="0" width="2" height="2" fill="#7DA0D8"/></svg>
<div style="left:0px;top:584.3px;width:271px;height:30.4px;background:linear-gradient(#FDD8A8 0%,#FDC98C 25%,#FDBD72 40%,#FCA836 46%,#FCAC3C 65%,#FDC460 85%,#FEDD84 100%);border-top:1px solid #1E3C78;border-bottom:1px solid #1E3C78;box-sizing:border-box;"></div>
<span style="left:29.70px;top:590.44px;font:bold 12px/16px 'Liberation Sans',sans-serif;color:#000;white-space:pre;transform-origin:0 0;transform:scaleX(0.8627);">Explorer</span>
<div style="left:0px;top:614.5px;width:271px;height:30px;background:linear-gradient(#D2E6FD 0%,#C9E0FC 40%,#B4D1F8 52%,#AECDF6 62%,#B8D4F9 85%,#C4DCFB 100%);border-bottom:1px solid #2C4E8F;box-sizing:border-box;"></div>
<span style="left:29.70px;top:620.94px;font:bold 12px/16px 'Liberation Sans',sans-serif;color:#1A3B7A;white-space:pre;transform-origin:0 0;transform:scaleX(0.8887);">Loaded Data</span>
<div style="left:0px;top:644.5px;width:271px;height:30px;background:linear-gradient(#D2E6FD 0%,#C9E0FC 40%,#B4D1F8 52%,#AECDF6 62%,#B8D4F9 85%,#C4DCFB 100%);border-bottom:1px solid #2C4E8F;box-sizing:border-box;"></div>
<span style="left:29.70px;top:650.94px;font:bold 12px/16px 'Liberation Sans',sans-serif;color:#1A3B7A;white-space:pre;transform-origin:0 0;transform:scaleX(0.8862);">Projects - Practice</span>
<div style="left:0px;top:674.5px;width:271px;height:30px;background:linear-gradient(#D2E6FD 0%,#C9E0FC 40%,#B4D1F8 52%,#AECDF6 62%,#B8D4F9 85%,#C4DCFB 100%);border-bottom:1px solid #2C4E8F;box-sizing:border-box;"></div>
<span style="left:29.70px;top:680.94px;font:bold 12px/16px 'Liberation Sans',sans-serif;color:#1A3B7A;white-space:pre;transform-origin:0 0;transform:scaleX(0.8858);">Sessions - None</span>
<div style="left:0px;top:704.5px;width:271px;height:30px;background:linear-gradient(#D2E6FD 0%,#C9E0FC 40%,#B4D1F8 52%,#AECDF6 62%,#B8D4F9 85%,#C4DCFB 100%);border-bottom:1px solid #2C4E8F;box-sizing:border-box;"></div>
<span style="left:29.70px;top:710.94px;font:bold 12px/16px 'Liberation Sans',sans-serif;color:#1A3B7A;white-space:pre;transform-origin:0 0;transform:scaleX(0.8850);">Layout - None</span>
<div style="left:0px;top:734.5px;width:271px;height:30px;background:linear-gradient(#D2E6FD 0%,#C9E0FC 40%,#B4D1F8 52%,#AECDF6 62%,#B8D4F9 85%,#C4DCFB 100%);border-bottom:1px solid #2C4E8F;box-sizing:border-box;"></div>
<span style="left:29.70px;top:740.94px;font:bold 12px/16px 'Liberation Sans',sans-serif;color:#1A3B7A;white-space:pre;transform-origin:0 0;transform:scaleX(0.8774);">Modules</span>
<div style="left:0px;top:763.9px;width:271px;height:2.8px;background:linear-gradient(#6B92CC,#4F7ABC);"></div>
<div style="left:0px;top:766.7px;width:271px;height:25px;background:#AFCFFB;"></div>
<div style="left:271px;top:77.5px;width:1.2px;height:714.2px;background:#2A4A86;"></div>
<div style="left:272.2px;top:77.5px;width:3.2px;height:714.2px;background:#90B1E4;"></div>
<div style="left:275.4px;top:77.5px;width:1px;height:714.2px;background:#2A4A86;"></div>
<div style="left:278.7px;top:81px;width:72.5px;height:21px;box-sizing:border-box;background:linear-gradient(#EEF3FB,#E3EBF8);border:1px solid #F8FBFF;border-bottom:none;border-radius:3px 3px 0 0;"></div>
<span style="left:301.60px;top:83.74px;font:12px/16px 'Liberation Sans',sans-serif;color:#1C2F6E;white-space:pre;transform-origin:0 0;transform:scaleX(0.8935);">BLOCKS</span>
<svg style="left:1558.5px;top:86px;" width="9" height="8" viewBox="0 0 9 8"><path d="M1 0.8l7 6.4M8 0.8l-7 6.4" stroke="#15428B" stroke-width="2.2" fill="none"/></svg>
<div style="left:276.9px;top:101.6px;width:1295.5px;height:498px;background:#F2F7FF;"></div>
<div style="left:276.9px;top:102.6px;width:1294.3px;height:495.4px;background:#0000FF;"></div>
<div style="left:279px;top:105px;width:1290px;height:490.9px;background:#000;"></div>
<svg style="left:0;top:0" width="1601" height="845" viewBox="0 0 1601 845"><g fill="none" stroke-width="1" shape-rendering="crispEdges"><polyline stroke="#00FF00" points="559.4,109.8 560,110.3 569.4,112.5 589.5,144.9 604.8,162.7 617.1,179.7 628.4,193.5 629.5,195 634.5,215.7 643.3,246.5 643.3,264 642.4,284.1 641.5,286.4 638.6,300.7 647,316.1 653.9,322 665.2,332.7 672.9,341.1 681.7,349.6 683.7,357.8 686.5,369.1 698.9,393.2 701.4,398.9 724,422.7 729,428.3 735.2,436.5 746.5,455.3 749.5,463.7 757.6,482.6 766.3,497.6 767,499.5 778.9,519.6 788.9,534.7 799,549.3 812.8,549.3 820.9,547.8 828.5,547.2 840.4,547.2 849.2,549.7 859.2,552.2 868.6,553.5 888.2,563.4 898.6,570.5 928.3,591.2 938.8,595.4 942.1,595.4 953.4,591.2 974.8,579.1 995.5,569.3 998,568.7 1007.8,562 1039.4,538.9 1046.9,533.1 1055.9,526 1071.6,513.5 1077.8,509.1 1082.8,507.2 1105.4,503.8 1138.7,498.4 1140.9,495.9 1150.8,486.5 1172.9,475.1 1181.2,469.7 1193.3,466.1 1194.5,473.2 1196.3,487.4 1194.5,497.2 1186.5,532.3 1184.2,543.9 1188.3,546 1216.7,553.1 1220.3,553.1 1226.5,550.4 1248.7,541.2 1250.4,541.6 1262,546.4 1287.7,556.3 1288.6,555.8 1288.7,392.7 1288.2,392.1 1266.2,400.9 1251.8,407.2 1231.1,409.7 1223.5,411.6 1218.5,411.6 1196.6,393.4 1196.6,391.1 1205.4,370.2 1204.4,366.4 1205.4,355.1 1216.6,346.9 1226.1,338 1239.4,323.8 1240.6,320.2 1244.7,309.6 1252.7,284.2 1255.4,272.3 1257.1,267.3 1267.8,256.9 1276.3,248 1281.4,243 1288.2,235.9 1288.2,223 1278.8,212.9 1276.6,209.3 1264.2,196 1259.8,191 1259.2,187.8 1261.1,177.4 1262.3,166.5 1263.6,161.5 1278,147.1"/><polyline stroke="#0000FF" points="599.9,109.8 600.8,112.5 602.1,127 617.8,144.5 641.6,169.6 652.9,179.9 670.5,195.6 682.8,215.7 687,222.9 693.9,232.9 708.9,250.9 727,270.9 733.9,280 738.6,286.5 745.1,306 741.1,318.9 740.8,322 732,354 732,356.8 728.5,373.5 734.6,390.1 738.4,392.6 751.6,402.4 755.3,406.4 759.1,413.3 766.6,428.3 781.8,463.7 794.6,490.7 809,498.9 812.1,500.8 818.4,504.5 835.4,497.6 846.6,498.9 864.2,500.4 886.9,507.8 894.8,510.9 917.3,533.5 930.2,540.7 939,546.1 953.4,546.1 959.7,545.2 966,538.2 971,533.6 987.9,517.2 995.8,506.2 1001.8,498.3 1010.1,487.1 1027,477.1 1032.7,473.6 1039.6,473.6 1040.2,474.6 1055.2,474.6 1062.8,475.2 1071.6,476.5 1077.2,476.5 1097.9,466.7 1106.1,463.9 1107.9,462.2 1128,440.1 1134.9,433.2 1138.7,426.3 1144.5,409 1148.6,391.1 1152,378.3 1157.7,355.7 1164.5,330.9 1164.5,275.9 1163.4,248.5 1160.9,212.9 1161.5,204 1166,196 1172.9,177.4 1177.3,167.8 1185.2,159 1194.6,148.3 1200.6,141.4 1204.6,137.6 1234.7,115.7 1247.5,106.3 1268.6,106.3 1277.4,141.4 1278,147.1"/><path stroke="#0000FF" d="M559.4 109.8L599.9 109.8M594.9 109.3L604.8 162.7M641.6 169.6L672.9 341.1M687 222.9L724 422.7M733.9 280L740.8 322M758.5 412.7L778.9 519.6M812.1 500.8L820.9 547.8M847.9 498.9L858.9 551.8M886.9 507.8L898.6 570.5M930.2 540.7L940.9 595.4M966 538.2L974.8 579.1M995.8 506.2L1007.8 562M1027 477.1L1039.4 538.9M1062.8 475.2L1071.6 513.5M1097.9 466.7L1105.4 503.8M1128 440.1L1140.9 495.9M1152 378.3L1173.2 475M1164.8 275.9L1226.5 550.4M1231.1 409.7L1262 546.4M1266.2 400.9L1288.6 497.2M1234.7 115.7L1267.8 256.9M1204.6 137.6L1244.7 309.6M1177.3 167.8L1216.6 346.9M1186.5 532.3L1188.3 546M589.5 144.8L617.8 144.6M617.1 179.9L652.9 179.8M634.5 215.7L682.8 215.6M642.5 250.9L708.9 250.7M641.5 286.4L735 286M653.9 321.9L740.8 321.5M683.7 357.6L732 357.4M698.9 393.2L738.4 392.8M729 428.4L766.6 428.2M749.5 463.8L781.8 463.6M767 499.5L809 499.2M788.9 534.8L917.3 534.1M971 533.8L1046.9 533.3M898.6 569.7L995.5 569.3M1001.8 498.6L1138.7 498.1M1194.5 497.4L1288.6 497.1M1107.9 462.5L1288.6 461.9M1137.9 426.6L1288.7 426.1M1148.6 391.2L1196.6 391M1157.7 355.8L1205.4 355.6M1163.4 320.2L1240.6 319.7M1164.8 284.4L1252.7 284.1M1163.4 248.7L1276.3 248.3M1160.4 213.1L1278.8 212.7M1172.9 177.5L1261.1 177.3M1200.6 141.5L1277.4 141.3M1186.5 532.4L1288.6 532.2"/></g><rect x="686" y="222" width="2" height="2" fill="#fff"/><rect x="693" y="232" width="2" height="2" fill="#fff"/><rect x="708" y="250" width="2" height="2" fill="#fff"/><rect x="726" y="270" width="2" height="2" fill="#fff"/><rect x="733" y="279" width="2" height="2" fill="#fff"/><rect x="734" y="285" width="2" height="2" fill="#fff"/><rect x="738" y="285" width="2" height="2" fill="#fff"/><rect x="744" y="305" width="2" height="2" fill="#fff"/><rect x="740" y="318" width="2" height="2" fill="#fff"/><rect x="740" y="321" width="2" height="2" fill="#fff"/><rect x="731" y="353" width="2" height="2" fill="#fff"/><rect x="731" y="356" width="2" height="2" fill="#fff"/><rect x="886" y="507" width="2" height="2" fill="#fff"/><rect x="894" y="510" width="2" height="2" fill="#fff"/><rect x="916" y="533" width="2" height="2" fill="#fff"/><rect x="998" y="174" width="3" height="38" fill="#80FF00"/><path d="M999.5 156L995 175.6h9.8z" fill="#80FF00"/><rect x="1004" y="214" width="37" height="3" fill="#FF0000"/><path d="M1059 215.5L1040 211v9.2z" fill="#FF0000"/><circle cx="999.6" cy="215.2" r="4.6" fill="#00BFFF"/></svg>
<span style="left:999.00px;top:144.03px;font:bold 10px/13px 'Liberation Sans',sans-serif;color:#70D800;white-space:pre;transform-origin:0 0;transform:scaleX(1.0495);">Y</span>
<span style="left:1071.30px;top:216.03px;font:bold 10px/13px 'Liberation Sans',sans-serif;color:#FF0000;white-space:pre;transform-origin:0 0;transform:scaleX(1.0045);">X</span>
<span style="left:999.00px;top:217.55px;font:bold 8.5px/11px 'Liberation Sans',sans-serif;color:#19A8E8;white-space:pre;transform-origin:0 0;transform:scaleX(1.2135);">Z</span>
<div style="left:276.9px;top:599.5px;width:1295px;height:1px;background:#1E3C78;"></div>
<div style="left:276.9px;top:600.5px;width:1295px;height:2.3px;background:#8FB0E3;"></div>
<div style="left:276.9px;top:602.7px;width:1295px;height:1.1px;background:#1E3C78;"></div>
<div style="left:276.9px;top:603.8px;width:1295px;height:15.6px;background:linear-gradient(#8FAEDF,#9BB8E5);"></div>
<div style="left:276.9px;top:619.4px;width:1295px;height:2.6px;background:#E9F1FD;"></div>
<span style="left:294.30px;top:605.19px;font:11px/14px 'Liberation Sans',sans-serif;color:#0A1433;white-space:pre;transform-origin:0 0;transform:scaleX(0.9937);">Feedback</span>
<svg style="left:1541.5px;top:607px;" width="8" height="10" viewBox="0 0 8 10"><path d="M2 0.5h4M2.5 0.5v5M5.5 0.5v5M4.8 0.5v5M0.5 5.5h7M4 5.5v4" stroke="#15428B" stroke-width="1.35" fill="none"/></svg>
<svg style="left:1557.5px;top:608px;" width="9" height="8" viewBox="0 0 9 8"><path d="M1 0.8l7 6.4M8 0.8l-7 6.4" stroke="#15428B" stroke-width="2.2" fill="none"/></svg>
<div style="left:276.9px;top:622px;width:1295px;height:147.6px;box-sizing:border-box;background:#fff;border:1px solid #7A8EA8;border-bottom:1.5px solid #2E5AA8;"></div>
<div style="left:277.9px;top:623px;width:28.5px;height:142.5px;background:linear-gradient(90deg,#DCE9FC,#C3D8F7);"></div>
<div style="left:277.9px;top:754.5px;width:28.5px;height:11px;background:linear-gradient(90deg,#A3C0EC,#B9D0F4);"></div>
<svg style="left:296px;top:757px;" width="8" height="7" viewBox="0 0 8 7"><path d="M0.6 0.5v6M2.6 0.5v6" stroke="#8FA4C8" stroke-width="1"/><path d="M4.4 0.8v5.4l3-2.7z" fill="#8FA4C8"/></svg>
<div style="left:306.4px;top:622.6px;width:1264.6px;height:144.2px;box-sizing:border-box;border:1px solid #A3A7AE;border-top:none;border-right:none;"></div>
<div style="left:308px;top:730px;width:1244px;height:13.8px;background:linear-gradient(#F4F4F4,#E2E2E2);border-top:1px solid #D0D0D0;border-bottom:1px solid #D6D6D6;box-sizing:border-box;"></div>
<span style="left:338.50px;top:625.39px;font:11px/14px 'Liberation Mono',monospace;color:#121238;white-space:pre;transform-origin:0 0;transform:scaleX(0.9922);">Download Complete</span>
<svg style="left:316px;top:627.6px;" width="10" height="10" viewBox="0 0 10 10"><circle cx="5" cy="5" r="4.6" fill="#1F6FD8" stroke="#0C3E99" stroke-width="0.8"/><rect x="4.2" y="4" width="1.7" height="3.8" fill="#fff"/><rect x="4.2" y="2" width="1.7" height="1.4" fill="#fff"/></svg>
<span style="left:338.50px;top:643.39px;font:11px/14px 'Liberation Mono',monospace;color:#121238;white-space:pre;transform-origin:0 0;transform:scaleX(0.9922);">Loading display blocks : PIT_STRIPDES</span>
<svg style="left:316px;top:645.6px;" width="10" height="10" viewBox="0 0 10 10"><circle cx="5" cy="5" r="4.6" fill="#1F6FD8" stroke="#0C3E99" stroke-width="0.8"/><rect x="4.2" y="4" width="1.7" height="3.8" fill="#fff"/><rect x="4.2" y="2" width="1.7" height="1.4" fill="#fff"/></svg>
<span style="left:338.50px;top:660.39px;font:11px/14px 'Liberation Mono',monospace;color:#121238;white-space:pre;transform-origin:0 0;transform:scaleX(0.9922);">Created reference BLOCKS</span>
<svg style="left:316px;top:662.6px;" width="10" height="10" viewBox="0 0 10 10"><circle cx="5" cy="5" r="4.6" fill="#1F6FD8" stroke="#0C3E99" stroke-width="0.8"/><rect x="4.2" y="4" width="1.7" height="3.8" fill="#fff"/><rect x="4.2" y="2" width="1.7" height="1.4" fill="#fff"/></svg>
<span style="left:338.50px;top:678.39px;font:11px/14px 'Liberation Mono',monospace;color:#121238;white-space:pre;transform-origin:0 0;transform:scaleX(0.9922);">Download Complete</span>
<svg style="left:316px;top:680.6px;" width="10" height="10" viewBox="0 0 10 10"><circle cx="5" cy="5" r="4.6" fill="#1F6FD8" stroke="#0C3E99" stroke-width="0.8"/><rect x="4.2" y="4" width="1.7" height="3.8" fill="#fff"/><rect x="4.2" y="2" width="1.7" height="1.4" fill="#fff"/></svg>
<span style="left:338.50px;top:695.69px;font:11px/14px 'Liberation Mono',monospace;color:#121238;white-space:pre;transform-origin:0 0;transform:scaleX(0.9922);">Loading display blocks : BB_STRIP</span>
<svg style="left:316px;top:697.9px;" width="10" height="10" viewBox="0 0 10 10"><circle cx="5" cy="5" r="4.6" fill="#1F6FD8" stroke="#0C3E99" stroke-width="0.8"/><rect x="4.2" y="4" width="1.7" height="3.8" fill="#fff"/><rect x="4.2" y="2" width="1.7" height="1.4" fill="#fff"/></svg>
<span style="left:338.50px;top:712.69px;font:11px/14px 'Liberation Mono',monospace;color:#121238;white-space:pre;transform-origin:0 0;transform:scaleX(0.9922);">Created reference BLOCKS</span>
<svg style="left:316px;top:714.9px;" width="10" height="10" viewBox="0 0 10 10"><circle cx="5" cy="5" r="4.6" fill="#1F6FD8" stroke="#0C3E99" stroke-width="0.8"/><rect x="4.2" y="4" width="1.7" height="3.8" fill="#fff"/><rect x="4.2" y="2" width="1.7" height="1.4" fill="#fff"/></svg>
<span style="left:338.50px;top:730.39px;font:11px/14px 'Liberation Mono',monospace;color:#121238;white-space:pre;transform-origin:0 0;transform:scaleX(0.9922);">Download Complete</span>
<svg style="left:316px;top:732.6px;" width="10" height="10" viewBox="0 0 10 10"><circle cx="5" cy="5" r="4.6" fill="#1F6FD8" stroke="#0C3E99" stroke-width="0.8"/><rect x="4.2" y="4" width="1.7" height="3.8" fill="#fff"/><rect x="4.2" y="2" width="1.7" height="1.4" fill="#fff"/></svg>
<div style="left:308px;top:747px;width:1244px;height:19px;background:#F0F0F0;"></div>
<div style="left:309.5px;top:748.5px;width:15px;height:16px;box-sizing:border-box;border:1px solid #8E8E8E;border-radius:3px;background:linear-gradient(#FAFAFA,#E4E4E4 50%,#CFCFCF);"></div>
<svg style="left:314.5px;top:753px;" width="4" height="7" viewBox="0 0 4 7"><path d="M4 0v7l-4-3.5z" fill="#333"/></svg>
<div style="left:326.5px;top:748.5px;width:149px;height:16px;box-sizing:border-box;border:1px solid #8E8E8E;border-radius:3px;background:linear-gradient(#FBFBFB,#EDEDED 45%,#D6D6D6);"></div>
<div style="left:1535px;top:748.5px;width:15.5px;height:16px;box-sizing:border-box;border:1px solid #8E8E8E;border-radius:3px;background:linear-gradient(#FAFAFA,#E4E4E4 50%,#CFCFCF);"></div>
<svg style="left:1541px;top:753px;" width="4" height="7" viewBox="0 0 4 7"><path d="M0 0v7l4-3.5z" fill="#333"/></svg>
<div style="left:1552.5px;top:623px;width:17.5px;height:125px;background:#F0F0F0;"></div>
<div style="left:1553.2px;top:625.5px;width:15.8px;height:15.5px;box-sizing:border-box;border:1px solid #8E8E8E;border-radius:3px;background:linear-gradient(#FAFAFA,#E4E4E4 50%,#CFCFCF);"></div>
<svg style="left:1557.7px;top:631px;" width="7" height="4" viewBox="0 0 7 4"><path d="M0 4h7l-3.5-4z" fill="#444"/></svg>
<div style="left:1553.2px;top:722px;width:15.8px;height:8px;box-sizing:border-box;border:1px solid #8E8E8E;border-radius:3px;background:linear-gradient(#FAFAFA,#E4E4E4 50%,#CFCFCF);"></div>
<div style="left:1553.2px;top:731.7px;width:15.8px;height:15.7px;box-sizing:border-box;border:1px solid #8E8E8E;border-radius:3px;background:linear-gradient(#FAFAFA,#E4E4E4 50%,#CFCFCF);"></div>
<svg style="left:1557.7px;top:737.5px;" width="7" height="4" viewBox="0 0 7 4"><path d="M0 0h7l-3.5 4z" fill="#444"/></svg>
<div style="left:276.8px;top:622.6px;width:110px;height:111px;opacity:0.86;"><div style="left:0;top:0;width:109.6px;height:110.8px;box-sizing:border-box;border:1px solid #55595F;border-radius:4px;background:rgba(255,255,255,0.80);"></div><div style="left:1px;top:1px;width:28.5px;height:108.8px;border-radius:3px 0 0 3px;background:rgba(214,228,250,0.55);"></div><div style="left:4.5px;top:4.5px;width:100px;height:15.5px;background:rgba(196,218,250,0.95);"></div><div style="left:6px;top:9px;width:88px;height:1.6px;background:repeating-linear-gradient(90deg,rgba(90,120,200,.8) 0 1.4px,rgba(255,255,255,0) 1.4px 2.6px);"></div><div style="left:6px;top:12.2px;width:92px;height:1.8px;background:repeating-linear-gradient(90deg,rgba(230,160,60,.85) 0 1.2px,rgba(120,150,220,.7) 1.2px 2.4px,rgba(255,255,255,0) 2.4px 3.8px);"></div><div style="left:6px;top:15.4px;width:72px;height:1.6px;background:repeating-linear-gradient(90deg,rgba(150,150,160,.8) 0 1.3px,rgba(255,255,255,0) 1.3px 2.8px);"></div><div style="left:4.5px;top:20px;width:18px;height:84px;background:rgba(206,222,246,0.95);"></div><div style="left:5.5px;top:27px;width:15.5px;height:46px;background:rgba(255,255,255,0.95);"></div><div style="left:8px;top:30px;width:7px;height:40px;background:repeating-linear-gradient(180deg,rgba(80,110,200,.75) 0 1px,rgba(255,255,255,0) 1px 2.9px);"></div><div style="left:4.5px;top:75.5px;width:18px;height:2.6px;background:#F5A644;"></div><div style="left:4.5px;top:79.4px;width:18px;height:1.8px;background:#F5C98C;"></div><div style="left:6px;top:84px;width:12px;height:14px;background:repeating-linear-gradient(180deg,rgba(130,160,220,.6) 0 1px,rgba(255,255,255,0) 1px 3.6px);"></div><div style="left:22.6px;top:77px;width:81px;height:18px;background:rgba(255,255,255,0.92);"></div><div style="left:25px;top:79px;width:18px;height:10px;background:repeating-linear-gradient(180deg,rgba(60,60,90,.6) 0 0.9px,rgba(255,255,255,0) 0.9px 2.7px);"></div><div style="left:22.6px;top:95px;width:81px;height:8.6px;background:rgba(200,220,250,0.95);"></div><div style="left:30px;top:98.4px;width:40px;height:1.4px;background:repeating-linear-gradient(90deg,rgba(60,90,170,.7) 0 1.4px,rgba(255,255,255,0) 1.4px 4px);"></div><div style="left:4.5px;top:103.4px;width:100px;height:2.4px;background:#3A3D44;"></div></div>
<div style="left:299.4px;top:642.6px;width:81px;height:56px;box-sizing:border-box;background:rgba(24,24,26,0.915);border-bottom:1.6px solid #1A1AE6;border-right:1px solid rgba(40,40,230,.8);"></div>
<svg style="left:299.4px;top:642.6px;" width="81" height="54" viewBox="0 0 81 54"><path d="M23 6l3 6 2 8 5 11 6 6 5 3 5-3 5-8 6-5 2-7-1-8 3-6" stroke="rgba(50,60,230,0.85)" stroke-width="0.8" fill="none" stroke-dasharray="1.2 1.8"/><path d="M22 8l3 9 2 7 6 12 9 7" stroke="rgba(40,200,60,0.8)" stroke-width="0.8" fill="none" stroke-dasharray="0.9 5"/><path d="M33 37h12M52 30h10M54 34h8" stroke="rgba(50,60,230,0.8)" stroke-width="0.7"/><rect x="46.6" y="12" width="1.6" height="1" fill="#E02020"/><circle cx="58" cy="22" r="0.7" fill="#2ED040"/><circle cx="56" cy="43" r="0.7" fill="#2ED040"/></svg>
<svg style="left:276.6px;top:622.4px;" width="8" height="8" viewBox="0 0 8 8"><path d="M6 0.3Q5.4 4.6 0.3 5.8" stroke="#1A2F9A" stroke-width="1.5" fill="none"/></svg>
<div style="left:278.4px;top:768px;width:76px;height:22.8px;box-sizing:border-box;background:linear-gradient(#FFFFFF,#EEF3FC 15%,#DEE9FA);border:1px solid #F4F8FE;border-top:none;border-radius:0 0 3px 3px;box-shadow:1px 1px 0 #9DB9E4;"></div>
<span style="left:301.40px;top:772.52px;font:11.5px/15px 'Liberation Sans',sans-serif;color:#1C2F6E;white-space:pre;transform-origin:0 0;transform:scaleX(0.9503);">Feedback</span>
<span style="left:383.00px;top:772.52px;font:11.5px/15px 'Liberation Sans',sans-serif;color:#1C2F6E;white-space:pre;transform-origin:0 0;transform:scaleX(0.9969);">Tracer</span>
<span style="left:450.40px;top:772.52px;font:11.5px/15px 'Liberation Sans',sans-serif;color:#1C2F6E;white-space:pre;transform-origin:0 0;transform:scaleX(0.9383);">Snapshot</span>
<div style="left:1px;top:793.5px;width:374px;height:25.5px;background:linear-gradient(#DDEBFD 0%,#CFE1FA 45%,#BDD5F7 80%,#B2CCF3 100%);border-radius:3px 4px 4px 3px;box-shadow:0 1px 0 #86A9DC, 0 2px 0 #A9C6EF;"></div>
<div style="left:364px;top:793.5px;width:11px;height:25.5px;background:linear-gradient(#D3E3F9 0%,#A9C3EC 50%,#7F9FD6 100%);border-radius:0 4px 4px 0;"></div>
<svg style="left:366px;top:807.7px;" width="8" height="9" viewBox="0 0 8 9"><path d="M1 1.5h6" stroke="#fff" stroke-width="1" transform="translate(1,1)"/><path d="M0.5 1h6" stroke="#000" stroke-width="1.2"/><path d="M1.2 4.5h6l-3 3.2z" fill="#fff"/><path d="M0.3 3.6h6l-3 3.2z" fill="#000"/></svg>
<svg style="left:4px;top:798.5px;" width="4" height="17" viewBox="0 0 4 17"><rect x="1" y="1" width="2" height="2" fill="#fff"/><rect x="0" y="0" width="2" height="2" fill="#6B93D6"/><rect x="1" y="5" width="2" height="2" fill="#fff"/><rect x="0" y="4" width="2" height="2" fill="#6B93D6"/><rect x="1" y="9" width="2" height="2" fill="#fff"/><rect x="0" y="8" width="2" height="2" fill="#6B93D6"/><rect x="1" y="13" width="2" height="2" fill="#fff"/><rect x="0" y="12" width="2" height="2" fill="#6B93D6"/></svg>
<div style="left:377px;top:793.5px;width:372px;height:25.5px;background:linear-gradient(#DDEBFD 0%,#CFE1FA 45%,#BDD5F7 80%,#B2CCF3 100%);border-radius:3px 4px 4px 3px;box-shadow:0 1px 0 #86A9DC, 0 2px 0 #A9C6EF;"></div>
<div style="left:738px;top:793.5px;width:11px;height:25.5px;background:linear-gradient(#D3E3F9 0%,#A9C3EC 50%,#7F9FD6 100%);border-radius:0 4px 4px 0;"></div>
<svg style="left:740px;top:807.7px;" width="8" height="9" viewBox="0 0 8 9"><path d="M1 1.5h6" stroke="#fff" stroke-width="1" transform="translate(1,1)"/><path d="M0.5 1h6" stroke="#000" stroke-width="1.2"/><path d="M1.2 4.5h6l-3 3.2z" fill="#fff"/><path d="M0.3 3.6h6l-3 3.2z" fill="#000"/></svg>
<svg style="left:380px;top:798.5px;" width="4" height="17" viewBox="0 0 4 17"><rect x="1" y="1" width="2" height="2" fill="#fff"/><rect x="0" y="0" width="2" height="2" fill="#6B93D6"/><rect x="1" y="5" width="2" height="2" fill="#fff"/><rect x="0" y="4" width="2" height="2" fill="#6B93D6"/><rect x="1" y="9" width="2" height="2" fill="#fff"/><rect x="0" y="8" width="2" height="2" fill="#6B93D6"/><rect x="1" y="13" width="2" height="2" fill="#fff"/><rect x="0" y="12" width="2" height="2" fill="#6B93D6"/></svg>
<div style="left:751px;top:793.5px;width:552px;height:25.5px;background:linear-gradient(#DDEBFD 0%,#CFE1FA 45%,#BDD5F7 80%,#B2CCF3 100%);border-radius:3px 4px 4px 3px;box-shadow:0 1px 0 #86A9DC, 0 2px 0 #A9C6EF;"></div>
<div style="left:1292px;top:793.5px;width:11px;height:25.5px;background:linear-gradient(#D3E3F9 0%,#A9C3EC 50%,#7F9FD6 100%);border-radius:0 4px 4px 0;"></div>
<svg style="left:1294px;top:807.7px;" width="8" height="9" viewBox="0 0 8 9"><path d="M1 1.5h6" stroke="#fff" stroke-width="1" transform="translate(1,1)"/><path d="M0.5 1h6" stroke="#000" stroke-width="1.2"/><path d="M1.2 4.5h6l-3 3.2z" fill="#fff"/><path d="M0.3 3.6h6l-3 3.2z" fill="#000"/></svg>
<svg style="left:754px;top:798.5px;" width="4" height="17" viewBox="0 0 4 17"><rect x="1" y="1" width="2" height="2" fill="#fff"/><rect x="0" y="0" width="2" height="2" fill="#6B93D6"/><rect x="1" y="5" width="2" height="2" fill="#fff"/><rect x="0" y="4" width="2" height="2" fill="#6B93D6"/><rect x="1" y="9" width="2" height="2" fill="#fff"/><rect x="0" y="8" width="2" height="2" fill="#6B93D6"/><rect x="1" y="13" width="2" height="2" fill="#fff"/><rect x="0" y="12" width="2" height="2" fill="#6B93D6"/></svg>
<div style="left:1305px;top:793.5px;width:268px;height:25.5px;background:linear-gradient(#DDEBFD 0%,#CFE1FA 45%,#BDD5F7 80%,#B2CCF3 100%);border-radius:3px 4px 4px 3px;box-shadow:0 1px 0 #86A9DC, 0 2px 0 #A9C6EF;"></div>
<div style="left:1562px;top:793.5px;width:11px;height:25.5px;background:linear-gradient(#D3E3F9 0%,#A9C3EC 50%,#7F9FD6 100%);border-radius:0 4px 4px 0;"></div>
<svg style="left:1564px;top:807.7px;" width="8" height="9" viewBox="0 0 8 9"><path d="M1 1.5h6" stroke="#fff" stroke-width="1" transform="translate(1,1)"/><path d="M0.5 1h6" stroke="#000" stroke-width="1.2"/><path d="M1.2 4.5h6l-3 3.2z" fill="#fff"/><path d="M0.3 3.6h6l-3 3.2z" fill="#000"/></svg>
<svg style="left:1308px;top:798.5px;" width="4" height="17" viewBox="0 0 4 17"><rect x="1" y="1" width="2" height="2" fill="#fff"/><rect x="0" y="0" width="2" height="2" fill="#6B93D6"/><rect x="1" y="5" width="2" height="2" fill="#fff"/><rect x="0" y="4" width="2" height="2" fill="#6B93D6"/><rect x="1" y="9" width="2" height="2" fill="#fff"/><rect x="0" y="8" width="2" height="2" fill="#6B93D6"/><rect x="1" y="13" width="2" height="2" fill="#fff"/><rect x="0" y="12" width="2" height="2" fill="#6B93D6"/></svg>
<span style="left:11.40px;top:798.84px;font:12px/16px 'Liberation Sans',sans-serif;color:#15213A;white-space:pre;transform-origin:0 0;transform:scaleX(0.9112);">Status</span>
<div style="left:48px;top:797px;width:313px;height:19.5px;box-sizing:border-box;background:#fff;border:1px solid #AFC5E6;"></div>
<div style="left:347px;top:798px;width:13px;height:17.5px;background:linear-gradient(#E6EFFB,#C9DCF6);"></div>
<svg style="left:349.5px;top:804.25px;" width="8" height="6" viewBox="0 0 8 6"><path d="M0 0h8l-4 5.5z" fill="#000"/></svg>
<span style="left:51.50px;top:798.89px;font:12px/16px 'Liberation Sans',sans-serif;color:#2222CC;white-space:pre;transform-origin:0 0;transform:scaleX(0.9361);">Ready...</span>
<span style="left:385.30px;top:798.84px;font:12px/16px 'Liberation Sans',sans-serif;color:#15213A;white-space:pre;transform-origin:0 0;transform:scaleX(0.9544);">Stowed</span>
<div style="left:429.5px;top:797px;width:305px;height:19.5px;box-sizing:border-box;background:#fff;border:1px solid #AFC5E6;"></div>
<div style="left:720.5px;top:798px;width:13px;height:17.5px;background:linear-gradient(#E6EFFB,#C9DCF6);"></div>
<svg style="left:723px;top:804.25px;" width="8" height="6" viewBox="0 0 8 6"><path d="M0 0h8l-4 5.5z" fill="#000"/></svg>
<span style="left:759.70px;top:798.84px;font:12px/16px 'Liberation Sans',sans-serif;color:#15213A;white-space:pre;transform-origin:0 0;transform:scaleX(0.9921);">Modules</span>
<div style="left:810px;top:797px;width:299px;height:19.5px;box-sizing:border-box;background:#fff;border:1px solid #AFC5E6;"></div>
<div style="left:1095px;top:798px;width:13px;height:17.5px;background:linear-gradient(#E6EFFB,#C9DCF6);"></div>
<svg style="left:1097.5px;top:804.25px;" width="8" height="6" viewBox="0 0 8 6"><path d="M0 0h8l-4 5.5z" fill="#000"/></svg>
<span style="left:838.00px;top:798.34px;font:12px/16px 'Liberation Sans',sans-serif;color:#000;white-space:pre;transform-origin:0 0;transform:scaleX(0.9904);">Unload a design file in DXF format</span>
<div style="left:1208px;top:798px;width:1px;height:16px;background:#9ABAEE;"></div>
<div style="left:1209px;top:798px;width:1px;height:16px;background:#F3F8FF;"></div>
<div style="left:1237px;top:798px;width:1px;height:16px;background:#9ABAEE;"></div>
<div style="left:1238px;top:798px;width:1px;height:16px;background:#F3F8FF;"></div>
<div style="left:1436px;top:798px;width:1px;height:16px;background:#9ABAEE;"></div>
<div style="left:1437px;top:798px;width:1px;height:16px;background:#F3F8FF;"></div>
<div style="left:0px;top:820.5px;width:1601px;height:24.5px;background:linear-gradient(#D8E8FD 0%,#C4DBFA 35%,#B7D1F6 100%);border-top:1px solid #DCEBFF;box-sizing:border-box;"></div>
<span style="left:9.80px;top:824.84px;font:12px/16px 'Liberation Sans',sans-serif;color:#3B4A66;white-space:pre;transform-origin:0 0;transform:scaleX(1.0326);">480932.002, 9841519.673, 20.000</span>
<div style="left:202.5px;top:824px;width:1px;height:17px;background:#8FAEDD;"></div>
<div style="left:203.5px;top:824px;width:1px;height:17px;background:#F3F8FF;"></div>
<span style="left:218.00px;top:824.84px;font:12px/16px 'Liberation Sans',sans-serif;color:#3B4A66;white-space:pre;transform-origin:0 0;transform:scaleX(0.9979);">Viewport:</span>
<div style="left:270.5px;top:823px;width:123px;height:19px;box-sizing:border-box;background:#fff;border:1px solid #AFC5E6;"></div>
<div style="left:379.5px;top:824px;width:13px;height:17px;background:linear-gradient(#E6EFFB,#C9DCF6);"></div>
<svg style="left:382px;top:830px;" width="8" height="6" viewBox="0 0 8 6"><path d="M0 0h8l-4 5.5z" fill="#000"/></svg>
<span style="left:274.00px;top:824.64px;font:12px/16px 'Liberation Sans',sans-serif;color:#000;white-space:pre;transform-origin:0 0;transform:scaleX(0.8667);">MAIN</span>
<span style="left:412.30px;top:824.84px;font:12px/16px 'Liberation Sans',sans-serif;color:#3B4A66;white-space:pre;transform-origin:0 0;transform:scaleX(0.9102);">Scale 1 :</span>
<div style="left:457px;top:823px;width:98px;height:19px;box-sizing:border-box;background:#fff;border:1px solid #AFC5E6;"></div>
<div style="left:541px;top:824px;width:13px;height:17px;background:linear-gradient(#E6EFFB,#C9DCF6);"></div>
<svg style="left:543.5px;top:830px;" width="8" height="6" viewBox="0 0 8 6"><path d="M0 0h8l-4 5.5z" fill="#000"/></svg>
<span style="left:460.50px;top:824.64px;font:12px/16px 'Liberation Sans',sans-serif;color:#000;white-space:pre;transform-origin:0 0;transform:scaleX(0.9290);">26570</span>
<span style="left:575.20px;top:824.84px;font:12px/16px 'Liberation Sans',sans-serif;color:#3B4A66;white-space:pre;transform-origin:0 0;transform:scaleX(0.9770);">Active Z:</span>
<div style="left:624px;top:823px;width:98px;height:19px;box-sizing:border-box;background:#fff;border:1px solid #AFC5E6;"></div>
<div style="left:708px;top:824px;width:13px;height:17px;background:linear-gradient(#E6EFFB,#C9DCF6);"></div>
<svg style="left:710.5px;top:830px;" width="8" height="6" viewBox="0 0 8 6"><path d="M0 0h8l-4 5.5z" fill="#000"/></svg>
<span style="left:627.50px;top:824.64px;font:12px/16px 'Liberation Sans',sans-serif;color:#000;white-space:pre;transform-origin:0 0;transform:scaleX(0.9491);">0.000</span>
<span style="left:741.20px;top:824.84px;font:12px/16px 'Liberation Sans',sans-serif;color:#3B4A66;white-space:pre;transform-origin:0 0;transform:scaleX(0.9327);">Selected: 0</span>
<div style="left:396.5px;top:824px;width:1px;height:17px;background:#9DB8E2;"></div>
<div style="left:397.5px;top:824px;width:1px;height:17px;background:#F3F8FF;"></div>
<div style="left:558.5px;top:824px;width:1px;height:17px;background:#9DB8E2;"></div>
<div style="left:559.5px;top:824px;width:1px;height:17px;background:#F3F8FF;"></div>
<div style="left:725.5px;top:824px;width:1px;height:17px;background:#9DB8E2;"></div>
<div style="left:726.5px;top:824px;width:1px;height:17px;background:#F3F8FF;"></div>
<div style="left:1574px;top:77.5px;width:27px;height:486px;background:linear-gradient(90deg,#DDEBFD 0%,#CFE1FA 45%,#BDD5F7 85%,#B4CDF4 100%);border-radius:4px 0 0 4px;"></div>
<svg style="left:1578px;top:81px;" width="22" height="4" viewBox="0 0 22 4"><rect x="1" y="1" width="2" height="2" fill="#fff"/><rect x="0" y="0" width="2" height="2" fill="#6B93D6"/><rect x="4" y="1" width="2" height="2" fill="#fff"/><rect x="3" y="0" width="2" height="2" fill="#6B93D6"/><rect x="7" y="1" width="2" height="2" fill="#fff"/><rect x="6" y="0" width="2" height="2" fill="#6B93D6"/><rect x="10" y="1" width="2" height="2" fill="#fff"/><rect x="9" y="0" width="2" height="2" fill="#6B93D6"/><rect x="13" y="1" width="2" height="2" fill="#fff"/><rect x="12" y="0" width="2" height="2" fill="#6B93D6"/><rect x="17" y="1" width="2" height="2" fill="#fff"/><rect x="16" y="0" width="2" height="2" fill="#6B93D6"/></svg>
<div style="left:1580px;top:161.5px;width:17px;height:1px;background:#8DAFE3;"></div>
<div style="left:1580px;top:162.5px;width:17px;height:1px;background:#F3F8FF;"></div>
<div style="left:1580px;top:263.5px;width:17px;height:1px;background:#8DAFE3;"></div>
<div style="left:1580px;top:264.5px;width:17px;height:1px;background:#F3F8FF;"></div>
<div style="left:1580px;top:315.5px;width:17px;height:1px;background:#8DAFE3;"></div>
<div style="left:1580px;top:316.5px;width:17px;height:1px;background:#F3F8FF;"></div>
<div style="left:1580px;top:392.8px;width:17px;height:1px;background:#8DAFE3;"></div>
<div style="left:1580px;top:393.8px;width:17px;height:1px;background:#F3F8FF;"></div>
<div style="left:1580px;top:445.8px;width:17px;height:1px;background:#8DAFE3;"></div>
<div style="left:1580px;top:446.8px;width:17px;height:1px;background:#F3F8FF;"></div>
<div style="left:1576.4px;top:190px;width:23.5px;height:23.5px;box-sizing:border-box;border:1px solid #9A8456;border-radius:3px;background:linear-gradient(#FEE7C8 0%,#FDD6A2 28%,#FDC684 49%,#FBA73C 52%,#FCB54C 75%,#FDD580 100%);"></div>
<div style="left:1573px;top:552px;width:28px;height:11.5px;background:linear-gradient(#C9DBF6,#A4BFEA);border-radius:0 0 0 4px;"></div>
<svg style="left:1590px;top:554px;" width="8" height="8" viewBox="0 0 8 8"><path d="M0.5 0.5v6" stroke="#000" stroke-width="1.2"/><path d="M3 0.3v6.4l3.4-3.2z" fill="#000"/></svg>
<svg style="left:15px;top:26.6px;" width="16" height="16" viewBox="0 0 16 16"><g stroke="#2E6BE6" fill="none"><circle cx="8" cy="8" r="4.7" stroke-width="0.95"/><circle cx="8" cy="8" r="1.1" stroke-width="0.7"/><path d="M8 0.4v15.2M1.4 4.2l13.2 7.6M1.4 11.8l13.2-7.6" stroke-width="0.8"/></g></svg>
<svg style="left:38.5px;top:26.6px;" width="16" height="16" viewBox="0 0 16 16"><rect x="0.6" y="2" width="14.8" height="12.4" rx="1.2" fill="#F2F6FD" stroke="#6A7CA4" stroke-width="0.8"/><rect x="1.8" y="3.2" width="12.4" height="10" fill="#3D6BDB"/><rect x="2" y="3.5" width="12" height="9.5" fill="#4F80EA"/><path d="M4 6h8M4 8.5h8M4 11h8" stroke="#E6EEFD" stroke-width="1.2"/></svg>
<svg style="left:62.8px;top:26.6px;" width="16" height="16" viewBox="0 0 16 16"><rect x="1" y="0.8" width="9.4" height="9" rx="0.8" fill="#3B6FE2" stroke="#E6EEFB" stroke-width="1.3"/><rect x="2.4" y="2.4" width="3.4" height="1.7" fill="#cfe0ff"/><path d="M1.6 9.4l8-8v8z" fill="#2A58C8" opacity=".55"/><rect x="6.4" y="6.2" width="9" height="8.8" rx="0.8" fill="#2F62D8" stroke="#E6EEFB" stroke-width="1.3"/><rect x="7.8" y="7.8" width="3.4" height="1.7" fill="#cfe0ff"/><path d="M0.5 10.6l3 3.8M4 11.6v3.2H1" stroke="#22408E" stroke-width="1.2" fill="none"/></svg>
<svg style="left:86.8px;top:26.6px;" width="16" height="16" viewBox="0 0 16 16"><path d="M2.7 13.4L8.7 7.6" stroke="#E9A82A" stroke-width="2.3" stroke-linecap="round"/><path d="M3 13L8.4 7.8" stroke="#FBD77A" stroke-width="0.8"/><path d="M8.7 7.6l2.9-2.8" stroke="#4A4A4A" stroke-width="2"/><path d="M7.2 2.6C9 1 12.4 1.2 14.2 3.6c1 1.4 1.6 3 1.6 4.6l-1.6.2c-.2-2-1.4-3.8-3.2-4.4L9 5.2z" fill="#A4A8B0" stroke="#5C6068" stroke-width="0.6"/><path d="M8.4 2.8c1.6-.8 3.6-.6 5 .8" stroke="#E6E8EC" stroke-width="0.7" fill="none"/><path d="M4.4 5.6l8 7.8" stroke="#5A5E66" stroke-width="2.6" stroke-linecap="round"/><path d="M4.4 5.6l8 7.8" stroke="#EEF0F4" stroke-width="1.3" stroke-linecap="round"/><path d="M4.6 3.2A2.6 2.6 0 1 0 3 5.8" fill="none" stroke="#5A5E66" stroke-width="1.5"/><path d="M4.6 3.2A2.6 2.6 0 1 0 3 5.8" fill="none" stroke="#D8DBE2" stroke-width="0.6"/></svg>
<svg style="left:110.7px;top:26.6px;" width="16" height="16" viewBox="0 0 16 16"><path d="M6.5 3.2h3v2.2h2.8v2.4h1.8v2.2h-3.2v-1.6H9.4v2.4H6.6V8.4H5v1.6H1.9V7.8h1.7V5.4h2.9z" fill="#3C9CF0" stroke="#2C7AD8" stroke-width="0.7"/><circle cx="8" cy="2.6" r="1.5" fill="#3C9CF0"/><circle cx="5.2" cy="12.3" r="1.7" fill="#1C3E86"/><circle cx="10.2" cy="12.3" r="1.7" fill="#1C3E86"/><circle cx="13.6" cy="7.2" r="1.1" fill="#6FA5F2"/><circle cx="2.2" cy="7.2" r="1.1" fill="#6FA5F2"/></svg>
<svg style="left:134.7px;top:26.6px;" width="16" height="16" viewBox="0 0 16 16"><circle cx="8" cy="8" r="7" fill="#fff" stroke="#5C84D8" stroke-width="0.7"/><circle cx="8" cy="8" r="6" fill="#2358D6"/><path d="M3.4 6a5 5 0 0 1 9.2 0a7 3.6 0 0 0-9.2 0z" fill="#6A97EE" opacity=".7"/><path d="M6 6.4c0-2.8 4.2-2.8 4.2 0 0 1.5-2 1.5-2 3.2" fill="none" stroke="#fff" stroke-width="1.6"/><circle cx="8.2" cy="11.6" r="1" fill="#fff"/></svg>
<svg style="left:182.5px;top:26.6px;" width="16" height="16" viewBox="0 0 16 16"><path d="M2.4 7.4C3 5 4.6 3.4 6.6 2.8M14 8V2.8" stroke="#1A1A1A" stroke-width="1.4" fill="none"/><ellipse cx="4.6" cy="8.6" rx="2.7" ry="2.1" fill="#B7D4FA" stroke="#1A1A1A" stroke-width="1.4"/><ellipse cx="11.5" cy="8.6" rx="2.7" ry="2.1" fill="#B7D4FA" stroke="#1A1A1A" stroke-width="1.4"/><path d="M7.2 8h1.6" stroke="#1A1A1A" stroke-width="1.2"/></svg>
<svg style="left:213px;top:26.6px;" width="16" height="16" viewBox="0 0 16 16"><rect x="1.5" y="2" width="13" height="12" fill="#EEF0F8" stroke="#8F949E" stroke-width="1"/><path d="M3 3h5l-2.5 3.6z" fill="#6E7480"/><path d="M9 3.5h5" stroke="#8A8F98" stroke-width="1.2"/><path d="M9 14v-3.2c0-2.6 4.5-2.6 4.5 0V14z" fill="#A0A5AE" stroke="#5E636C" stroke-width="0.6"/><circle cx="8.6" cy="7.6" r="0.9" fill="#333"/><circle cx="14" cy="7.6" r="0.9" fill="#333"/></svg>
<svg style="left:237px;top:26.6px;" width="16" height="16" viewBox="0 0 16 16"><text x="0.5" y="11.5" font-family="Liberation Serif" font-weight="bold" font-size="14.5" fill="#2F57B8">A</text><path d="M7.5 14.5L14 8" stroke="#C57A12" stroke-width="3.6" stroke-linecap="butt"/><path d="M7.5 14.5L14 8" stroke="#FFD84A" stroke-width="2"/><path d="M7.5 14.5L8.67 13.33" stroke="#E9D6B0" stroke-width="2"/><path d="M13.025 8.975L14 8" stroke="#D7503A" stroke-width="2.8"/></svg>
<svg style="left:260.8px;top:26.6px;" width="16" height="16" viewBox="0 0 16 16"><path d="M1.4 1.4l5.4-.8 4.2 9.6-5.6 3.6z" fill="#3F73DD" stroke="#2A4FA6" stroke-width="0.7"/><path d="M1.4 1.4l5.4-.8-1.6 3.2z" fill="#8FB2F2"/><ellipse cx="10" cy="9.4" rx="5.6" ry="4" transform="rotate(-40 10 9.4)" fill="#FBF0B4" stroke="#CDBB84" stroke-width="0.8"/><ellipse cx="10" cy="9.6" rx="3" ry="2" transform="rotate(-40 10 9.6)" fill="#F6D85A"/><ellipse cx="10" cy="9.6" rx="1.4" ry="0.9" transform="rotate(-40 10 9.6)" fill="#FFF9DC"/></svg>
<svg style="left:284.7px;top:26.6px;" width="16" height="16" viewBox="0 0 16 16"><rect x="1.5" y="2.5" width="13.5" height="12" fill="#D9D9D9" stroke="#9A9A9A" stroke-width="1"/><rect x="8.5" y="3" width="6" height="11" fill="#2C7BD8"/><path d="M8.5 9l3-3 3 3.4V11h-6z" fill="#3D9A55"/><path d="M8.5 11h6v3h-6z" fill="#1F62C4"/><path d="M2.5 9.5h5v2h-5z" fill="#AFAFAF"/><path d="M8.2 1v14.5" stroke="#111" stroke-width="1.1" stroke-dasharray="1.2 1"/></svg>
<svg style="left:308px;top:26.6px;" width="16" height="16" viewBox="0 0 16 16"><path d="M2.5 2.5v4.8l8 4.7v2" stroke="#111" stroke-width="1.2" fill="none"/><path d="M5.5 11.5L13.5 4.2" stroke="#C57A12" stroke-width="3.4" stroke-linecap="butt"/><path d="M5.5 11.5L13.5 4.2" stroke="#FFD84A" stroke-width="1.8"/><path d="M5.5 11.5L6.94 10.186" stroke="#E9D6B0" stroke-width="1.8"/><path d="M12.3 5.295L13.5 4.2" stroke="#D7503A" stroke-width="2.6"/><rect x="1.1" y="0.8" width="2.8" height="2.8" fill="#fff" stroke="#1C6FD8" stroke-width="0.9"/><rect x="9.8" y="12.6" width="2.8" height="2.8" fill="#fff" stroke="#1C6FD8" stroke-width="0.9"/></svg>
<svg style="left:332.6px;top:26.6px;" width="16" height="16" viewBox="0 0 16 16"><rect x="1.5" y="3" width="13.5" height="10.5" fill="#F6F8FD" stroke="#3F5FA8" stroke-width="1"/><rect x="1.5" y="3" width="13.5" height="2.4" fill="#3A6EE0"/><path d="M2.5 10.2h5.5V7.2" stroke="#111" stroke-width="1.2" fill="none" stroke-dasharray="1.2 1"/></svg>
<svg style="left:362.3px;top:26.6px;" width="16" height="16" viewBox="0 0 16 16"><g stroke="#2A5FD0" fill="#2A5FD0" stroke-width="1.2"><path d="M6.5 10.5V3M6.5 10.5L13 9.8M6.5 10.5L1.5 15" fill="none"/><path d="M6.5 1.2l1.8 3h-3.6zM14.6 9.6l-2.8 1.8-.3-3.2zM.8 15.6l.8-3.2 2.2 2.3z" stroke="none"/></g><path d="M10.6 2.2c2.4-.6 3.8 1.2 3.2 3.4" fill="none" stroke="#333" stroke-width="1"/><path d="M10 .8l.4 2.8 2.2-1.4z" fill="#333"/></svg>
<svg style="left:386.6px;top:26.6px;" width="16" height="16" viewBox="0 0 16 16"><g stroke="#2A5FD0" fill="#2A5FD0" stroke-width="1.2"><path d="M6.5 10.5V3M6.5 10.5L13 9.8M6.5 10.5L1.5 15" fill="none"/><path d="M6.5 1.2l1.8 3h-3.6zM14.6 9.6l-2.8 1.8-.3-3.2zM.8 15.6l.8-3.2 2.2 2.3z" stroke="none"/></g><text x="9.5" y="5.5" font-family="Liberation Sans" font-weight="bold" font-size="6" fill="#111">Z</text><g transform="translate(7.5,6.5) scale(1)"><path d="M1.8 4V2.6a2.2 2.2 0 0 1 4.4 0V4" fill="none" stroke="#B9962E" stroke-width="1.3"/><rect x="0.5" y="3.8" width="7" height="5.2" rx="0.8" fill="#F5CB46" stroke="#A9821E" stroke-width="0.8"/><rect x="3.4" y="5.4" width="1.2" height="2" fill="#6A4E10"/></g></svg>
<svg style="left:410.9px;top:26.6px;" width="16" height="16" viewBox="0 0 16 16"><rect x="1.5" y="2" width="13.5" height="13" fill="#27449A" stroke="#1B2F78" stroke-width="1"/><path d="M2 14.5l5.5-6 6.8 6z" fill="#C9D6F2"/><path d="M2 14.5l5.5-6 2 1.8z" fill="#EEF3FC"/><path d="M6 9.5V3.6" stroke="#fff" stroke-width="1.2"/><path d="M6 2.2l1.6 2.6H4.4z" fill="#fff"/><text x="9" y="8" font-family="Liberation Sans" font-weight="bold" font-size="6.5" fill="#fff">Z</text><path d="M8.5 9.5l5.5 4" stroke="#111" stroke-width="1"/></svg>
<svg style="left:440.6px;top:26.6px;" width="16" height="16" viewBox="0 0 16 16"><rect x="1" y="1.5" width="11.5" height="11.5" fill="#F4F8FE" stroke="#3A67C8" stroke-width="1"/><path d="M2 2.5h5l-2 10H2z" fill="#79C34A"/><path d="M7 2.5h4.5v6L8 5z" fill="#5FC4EE"/><path d="M4.2 3l1.4 3-1.8 1.4z" fill="#E8402A"/><path d="M5 9.5l3-4 3.5 3.5v3.5H5z" fill="#EBD26A"/><path d="M6 8.5h3l1 1h4.5v5H6z" fill="#E6A92C" stroke="#A97412" stroke-width="0.6"/><path d="M6 14.5l1.6-4h8l-1.6 4z" fill="#FAD465" stroke="#B8871A" stroke-width="0.6"/></svg>
<svg style="left:465.2px;top:26.6px;" width="16" height="16" viewBox="0 0 16 16"><rect x="1" y="1.5" width="11.5" height="11.5" fill="#F4F8FE" stroke="#3A67C8" stroke-width="1"/><path d="M2 2.5h5l-2 10H2z" fill="#79C34A"/><path d="M7 2.5h4.5v6L8 5z" fill="#5FC4EE"/><path d="M4.2 3l1.4 3-1.8 1.4z" fill="#E8402A"/><path d="M5 9.5l3-4 3.5 3.5v3.5H5z" fill="#EBD26A"/><rect x="7.2" y="7.2" width="8.2" height="8" rx="0.6" fill="#5A4FC0" stroke="#2E2A82" stroke-width="0.7"/><rect x="8.8" y="7.8" width="5" height="2.8" fill="#F2F2FA"/><rect x="9.2" y="12.2" width="4.2" height="2.8" fill="#2B2B5E"/><rect x="11.6" y="12.7" width="1.2" height="1.8" fill="#D8D8E8"/></svg>
<svg style="left:494.5px;top:26.6px;" width="16" height="16" viewBox="0 0 16 16"><path d="M7.4 1.2C6 1.6 5.2 3.4 5.2 6.4H8L4.75 10.2 1.5 6.4h2.3C3.8 3 5 1.2 7.4 1.2z" fill="#2A6BC8"/><path d="M7.4 1.2C6.4 1.5 5.8 2.2 5.5 3.4L4.2 3C4.8 1.8 5.8 1.2 7.4 1.2z" fill="#40C0D8"/><path d="M12.25 5.2L15.6 9h-2.4c0 3-1 4.8-3.4 5.4L9.6 13.6c1.4-.8 1.8-2.2 1.8-4.6H8.75z" fill="#2A62C0"/><path d="M9.6 13.6l.2.8c1-.2 1.8-.8 2.4-1.6l-1.2-.4c-.3.5-.8.9-1.4 1.2z" fill="#1A2F78"/></svg>
<svg style="left:518.8px;top:26.6px;" width="16" height="16" viewBox="0 0 16 16"><path d="M0.2 15.2L13.7 1.4" stroke="#1C63E6" stroke-width="1.1" stroke-dasharray="1.6 0.9"/><path d="M1.2 4.4L3.95 1.15h3.5V7.4L3.95 9.15 1.2 11.9z" fill="#fff"/><path d="M3.95 1.15l3.5-.5V7.4L3.95 9.15z" fill="#86A4DC"/><path d="M1.2 4.4L3.95 1.15V9.15L1.2 11.9z" fill="#fff" stroke="#9FB6E2" stroke-width="0.4"/><path d="M7.45.65h1V7.4h-1z" fill="#111"/><path d="M8.45 7.15l5.25-.5-2.5 2.5-5 .25z" fill="#F4F7FD"/><path d="M6.2 9.4l5-.25v2.75h-5z" fill="#fff" stroke="#9FB6E2" stroke-width="0.4"/><path d="M11.2 9.15l2.5-2.5V8.9l-2.5 3z" fill="#111"/><path d="M6.2 11.9h5l-.6.8H5.4z" fill="#111"/></svg>
<svg style="left:543.6px;top:26.6px;" width="16" height="16" viewBox="0 0 16 16"><g transform="translate(1.2,0)"><path d="M0.2 15.2L13.7 1.4" stroke="#1C63E6" stroke-width="1.1" stroke-dasharray="1.6 0.9"/><path d="M1.2 4.4L3.95 1.15h3.5V7.4L3.95 9.15 1.2 11.9z" fill="#fff"/><path d="M3.95 1.15l3.5-.5V7.4L3.95 9.15z" fill="#86A4DC"/><path d="M1.2 4.4L3.95 1.15V9.15L1.2 11.9z" fill="#fff" stroke="#9FB6E2" stroke-width="0.4"/><path d="M7.45.65h1V7.4h-1z" fill="#111"/><path d="M8.45 7.15l5.25-.5-2.5 2.5-5 .25z" fill="#F4F7FD"/><path d="M6.2 9.4l5-.25v2.75h-5z" fill="#fff" stroke="#9FB6E2" stroke-width="0.4"/><path d="M11.2 9.15l2.5-2.5V8.9l-2.5 3z" fill="#111"/><path d="M6.2 11.9h5l-.6.8H5.4z" fill="#111"/></g><g transform="translate(-0.6,6.9) scale(1)"><path d="M1.8 4V2.6a2.2 2.2 0 0 1 4.4 0V4" fill="none" stroke="#B9962E" stroke-width="1.3"/><rect x="0.5" y="3.8" width="7" height="5.2" rx="0.8" fill="#F5CB46" stroke="#A9821E" stroke-width="0.8"/><rect x="3.4" y="5.4" width="1.2" height="2" fill="#6A4E10"/></g></svg>
<svg style="left:591.7px;top:26.6px;" width="16" height="16" viewBox="0 0 16 16"><circle cx="8" cy="8" r="7.2" fill="#1F56C8" stroke="#173F96" stroke-width="0.8"/><path d="M2.6 5.4a6 6 0 0 1 10.8 0a8 4 0 0 0-10.8 0z" fill="#5F8DE6" opacity=".6"/><text x="4.6" y="11.8" font-family="Liberation Sans" font-weight="bold" font-size="10.5" fill="#fff">R</text></svg>
<svg style="left:615.3px;top:26.6px;" width="16" height="16" viewBox="0 0 16 16"><rect x="4" y="4" width="8.4" height="8.4" fill="#E9EEF8" stroke="#5A73B8" stroke-width="0.8"/><path d="M4.4 12l3-3.6 2 2 1.2-1.2 1.4 2.8z" fill="#6E8ED0"/><circle cx="10.2" cy="6.4" r="1.5" fill="#F08A3C"/><path d="M0.6 0.6L4 4" stroke="#214FB8" stroke-width="1.3"/><path d="M4 4L0.888251 3.25366L3.25366 0.888251z" fill="#214FB8"/><path d="M15.6 0.6L12.2 4" stroke="#214FB8" stroke-width="1.3"/><path d="M12.2 4L12.9463 0.888251L15.3117 3.25366z" fill="#214FB8"/><path d="M0.6 15.6L4 12.2" stroke="#214FB8" stroke-width="1.3"/><path d="M4 12.2L3.25366 15.3117L0.888251 12.9463z" fill="#214FB8"/><path d="M15.6 15.6L12.2 12.2" stroke="#214FB8" stroke-width="1.3"/><path d="M12.2 12.2L15.3117 12.9463L12.9463 15.3117z" fill="#214FB8"/></svg>
<svg style="left:639.2px;top:26.6px;" width="16" height="16" viewBox="0 0 16 16"><path fill="#111" d="M1 1h1.35v1.35h-1.35zM1 3.13h1.35v1.35h-1.35zM1 5.26h1.35v1.35h-1.35zM1 7.39h1.35v1.35h-1.35zM1 9.52h1.35v1.35h-1.35zM1 11.65h1.35v1.35h-1.35zM3.13 1h1.35v1.35h-1.35zM3.13 11.65h1.35v1.35h-1.35zM5.26 1h1.35v1.35h-1.35zM5.26 11.65h1.35v1.35h-1.35zM7.39 1h1.35v1.35h-1.35zM7.39 11.65h1.35v1.35h-1.35zM9.52 1h1.35v1.35h-1.35zM9.52 11.65h1.35v1.35h-1.35zM11.65 1h1.35v1.35h-1.35zM11.65 3.13h1.35v1.35h-1.35zM11.65 5.26h1.35v1.35h-1.35zM11.65 7.39h1.35v1.35h-1.35zM11.65 9.52h1.35v1.35h-1.35zM11.65 11.65h1.35v1.35h-1.35z"/><path d="M10.88 10.88l2.9 2.9" stroke="#F0CF6A" stroke-width="3" stroke-linecap="butt"/><path d="M13.18 13.18l1.5 1.5" stroke="#E8901E" stroke-width="3" stroke-linecap="butt"/><circle cx="8.5" cy="8.5" r="3.4" fill="#E8F0FB" stroke="#8A8F98" stroke-width="1.1"/></svg>
<svg style="left:662.9px;top:26.6px;" width="16" height="16" viewBox="0 0 16 16"><path fill="#111" d="M1 1h1.35v1.35h-1.35zM1 3.13h1.35v1.35h-1.35zM1 5.26h1.35v1.35h-1.35zM1 7.39h1.35v1.35h-1.35zM1 9.52h1.35v1.35h-1.35zM1 11.65h1.35v1.35h-1.35zM3.13 1h1.35v1.35h-1.35zM3.13 11.65h1.35v1.35h-1.35zM5.26 1h1.35v1.35h-1.35zM5.26 11.65h1.35v1.35h-1.35zM7.39 1h1.35v1.35h-1.35zM7.39 11.65h1.35v1.35h-1.35zM9.52 1h1.35v1.35h-1.35zM9.52 11.65h1.35v1.35h-1.35zM11.65 1h1.35v1.35h-1.35zM11.65 3.13h1.35v1.35h-1.35zM11.65 5.26h1.35v1.35h-1.35zM11.65 7.39h1.35v1.35h-1.35zM11.65 9.52h1.35v1.35h-1.35zM11.65 11.65h1.35v1.35h-1.35z"/><path d="M3.5 10.5l3-6.5M6.5 4l2.6 6.2" stroke="#555" stroke-width="1" fill="none"/><path transform="translate(9.2,5.4) scale(1)" d="M0 0v8l2-1.8 1.6 3.4 1.4-.7-1.6-3.2h2.6z" fill="#CFDAF0" stroke="#6C7CA4" stroke-width="0.8"/></svg>
<svg style="left:686.5px;top:26.6px;" width="16" height="16" viewBox="0 0 16 16"><path fill="#777" d="M0.5 1h1.35v1.35h-1.35zM0.5 3.13h1.35v1.35h-1.35zM0.5 5.26h1.35v1.35h-1.35zM0.5 7.39h1.35v1.35h-1.35zM0.5 9.52h1.35v1.35h-1.35zM0.5 11.65h1.35v1.35h-1.35zM2.63 1h1.35v1.35h-1.35zM2.63 11.65h1.35v1.35h-1.35zM4.76 1h1.35v1.35h-1.35zM4.76 11.65h1.35v1.35h-1.35zM6.89 1h1.35v1.35h-1.35zM6.89 11.65h1.35v1.35h-1.35zM9.02 1h1.35v1.35h-1.35zM9.02 11.65h1.35v1.35h-1.35zM11.15 1h1.35v1.35h-1.35zM11.15 3.13h1.35v1.35h-1.35zM11.15 5.26h1.35v1.35h-1.35zM11.15 7.39h1.35v1.35h-1.35zM11.15 9.52h1.35v1.35h-1.35zM11.15 11.65h1.35v1.35h-1.35z"/><path d="M7.5 11.6h8.5l-3 1.96h-8.5z" fill="#BDBDBD" stroke="#8E8E8E" stroke-width="0.55"/><path d="M7.5 8.8h8.5l-3 1.96h-8.5z" fill="#BDBDBD" stroke="#8E8E8E" stroke-width="0.55"/><path d="M7.5 6h8.5l-3 1.96h-8.5z" fill="#BDBDBD" stroke="#8E8E8E" stroke-width="0.55"/></svg>
<svg style="left:710.8px;top:26.6px;" width="16" height="16" viewBox="0 0 16 16"><path fill="#777" d="M0.5 1h1.35v1.35h-1.35zM0.5 3.13h1.35v1.35h-1.35zM0.5 5.26h1.35v1.35h-1.35zM0.5 7.39h1.35v1.35h-1.35zM0.5 9.52h1.35v1.35h-1.35zM0.5 11.65h1.35v1.35h-1.35zM2.63 1h1.35v1.35h-1.35zM2.63 11.65h1.35v1.35h-1.35zM4.76 1h1.35v1.35h-1.35zM4.76 11.65h1.35v1.35h-1.35zM6.89 1h1.35v1.35h-1.35zM6.89 11.65h1.35v1.35h-1.35zM9.02 1h1.35v1.35h-1.35zM9.02 11.65h1.35v1.35h-1.35zM11.15 1h1.35v1.35h-1.35zM11.15 3.13h1.35v1.35h-1.35zM11.15 5.26h1.35v1.35h-1.35zM11.15 7.39h1.35v1.35h-1.35zM11.15 9.52h1.35v1.35h-1.35zM11.15 11.65h1.35v1.35h-1.35z"/><path d="M7.5 11.6h8.5l-3 1.96h-8.5z" fill="#BDBDBD" stroke="#8E8E8E" stroke-width="0.55"/><path d="M7.5 8.8h8.5l-3 1.96h-8.5z" fill="#BDBDBD" stroke="#8E8E8E" stroke-width="0.55"/><path d="M7.5 6h8.5l-3 1.96h-8.5z" fill="#BDBDBD" stroke="#8E8E8E" stroke-width="0.55"/></svg>
<svg style="left:741px;top:26.6px;" width="16" height="16" viewBox="0 0 16 16"><path d="M1 3.8h6M4 .8v6" stroke="#222" stroke-width="1.1"/><path d="M10.91 10.51l2.9 2.9" stroke="#F0CF6A" stroke-width="3" stroke-linecap="butt"/><path d="M13.21 12.81l1.5 1.5" stroke="#E8901E" stroke-width="3" stroke-linecap="butt"/><circle cx="8.6" cy="8.2" r="3.3" fill="#E8F0FB" stroke="#8A8F98" stroke-width="1.1"/></svg>
<svg style="left:764.7px;top:26.6px;" width="16" height="16" viewBox="0 0 16 16"><path d="M9.9 9.7l2.9 2.9" stroke="#F0CF6A" stroke-width="3" stroke-linecap="butt"/><path d="M12.2 12l1.5 1.5" stroke="#E7B93A" stroke-width="3" stroke-linecap="butt"/><circle cx="6.4" cy="6.2" r="5" fill="#EEF2FA" stroke="#8A8F98" stroke-width="1.1"/><path d="M3.8 6.2h5.2M6.4 3.6v5.2" stroke="#2F57B8" stroke-width="1.7"/></svg>
<svg style="left:788.3px;top:26.6px;" width="16" height="16" viewBox="0 0 16 16"><path d="M9.9 9.7l2.9 2.9" stroke="#F0CF6A" stroke-width="3" stroke-linecap="butt"/><path d="M12.2 12l1.5 1.5" stroke="#E7B93A" stroke-width="3" stroke-linecap="butt"/><circle cx="6.4" cy="6.2" r="5" fill="#EEF2FA" stroke="#A0A5AE" stroke-width="1.1"/><path d="M3.8 6.2h5.2" stroke="#7F8DB8" stroke-width="1.7"/></svg>
<svg style="left:835.5px;top:26.6px;" width="16" height="16" viewBox="0 0 16 16"><path d="M4.5 9.8h11l-3 2.66h-11z" fill="#7FA6F4" stroke="#2A5FD0" stroke-width="0.55"/><path d="M4.5 6h11l-3 2.66h-11z" fill="#7FA6F4" stroke="#2A5FD0" stroke-width="0.55"/><path d="M4.5 2.2h11l-3 2.66h-11z" fill="#7FA6F4" stroke="#2A5FD0" stroke-width="0.55"/></svg>
<svg style="left:860.8px;top:26.6px;" width="16" height="16" viewBox="0 0 16 16"><path d="M1 4.5h4l1 1.2h6.5V14H1z" fill="#C6C6C6" stroke="#9A9A9A" stroke-width="0.7"/><path d="M1 14l2.2-6h11.5l-2.2 6z" fill="#D4D4D4" stroke="#9A9A9A" stroke-width="0.7"/><path d="M5 10h6M4.6 12h6" stroke="#AAA" stroke-width="0.8"/><path d="M9 3c1.6-2 4-1.6 5 .2" fill="none" stroke="#9A9A9A" stroke-width="1"/><path d="M14.8 1l-.2 3-2.6-.8z" fill="#9A9A9A"/><path d="M11 15.4h4" stroke="#888" stroke-width="1.2" stroke-dasharray="1 1"/></svg>
<svg style="left:885.5px;top:26.6px;" width="16" height="16" viewBox="0 0 16 16"><path d="M4 10.4h9.5l-3 2.1h-9.5z" fill="#C4C4C4" stroke="#9A9A9A" stroke-width="0.55"/><path d="M4 7.4h9.5l-3 2.1h-9.5z" fill="#C4C4C4" stroke="#9A9A9A" stroke-width="0.55"/><path d="M4 4.4h9.5l-3 2.1h-9.5z" fill="#C4C4C4" stroke="#9A9A9A" stroke-width="0.55"/><path d="M9 1.2l5 5M14 1.2l-5 5" stroke="#B0B0B0" stroke-width="1.6"/><path d="M11 15.2h4" stroke="#888" stroke-width="1.2" stroke-dasharray="1 1"/></svg>
<svg style="left:908px;top:26.6px;" width="16" height="16" viewBox="0 0 16 16"><path d="M5 5.5v6.2a3 3 0 0 0 6 0V4a2.1 2.1 0 0 0-4.2 0v7.2a.95.95 0 0 0 1.9 0V5.5" fill="none" stroke="#4A5F8C" stroke-width="1.2"/></svg>
<svg style="left:931.7px;top:26.6px;" width="16" height="16" viewBox="0 0 16 16"><g transform="translate(-2,0)"><path d="M5 5.5v6.2a3 3 0 0 0 6 0V4a2.1 2.1 0 0 0-4.2 0v7.2a.95.95 0 0 0 1.9 0V5.5" fill="none" stroke="#4A5F8C" stroke-width="1.2"/></g><path d="M9.2 9.4l5.4 5M14.6 9.4l-5.4 5" stroke="#E8301E" stroke-width="2"/></svg>
<svg style="left:956.3px;top:26.6px;" width="16" height="16" viewBox="0 0 16 16"><path d="M4.6 6.4c4-2.2 8.2-1 8.4 3.4.1 2.4-1.4 4.2-2.8 5-.4-.4-.6-.6-.9-1 1.2-1 1.6-2.6 1.3-4-.5-2.2-3-2.6-5-1.2l1.8 2.6L1.6 10 3 3.8z" fill="#2F6DE0" stroke="#1F4FB4" stroke-width="0.5"/></svg>
<svg style="left:1005.1px;top:26.6px;" width="16" height="16" viewBox="0 0 16 16"><rect x="1.2" y="2.2" width="4" height="4.6" fill="#B4B4B4"/><rect x="5.9" y="2.2" width="4" height="4.6" fill="#9C9C9C"/><rect x="10.6" y="2.2" width="4" height="4.6" fill="#888"/><rect x="1.2" y="7.8" width="4" height="4.6" fill="#A8A8A8"/><rect x="5.9" y="7.8" width="4" height="4.6" fill="#9A9A9A"/><rect x="10.6" y="7.8" width="4" height="4.6" fill="#B8B8B8"/></svg>
<svg style="left:1029px;top:26.6px;" width="16" height="16" viewBox="0 0 16 16"><path d="M4 6.2l4.6-3.6 4 4.6-5.2 4.2z" fill="#C9C9C9" stroke="#8A8A8A" stroke-width="0.8"/><path d="M7.2 4.6V1.4" stroke="#8A8A8A" stroke-width="1.3"/><circle cx="7.2" cy="1.4" r="1" fill="#AAA"/><path d="M12 6.6c1.8.4 2.4 1.6 2.2 4.6-.8-1-1.6-1.4-2.8-1.6z" fill="#8F8F8F"/><rect x="1" y="12.4" width="14" height="3" fill="#BEBEBE" stroke="#9A9A9A" stroke-width="0.6"/><path d="M2 15.2l3-2.6M5.5 15.2l3-2.6M9 15.2l3-2.6M12.5 15.2l2.3-2" stroke="#8A8A8A" stroke-width="0.8"/></svg>
<svg style="left:1052.6px;top:26.6px;" width="16" height="16" viewBox="0 0 16 16"><path d="M1 4h14" stroke="#999" stroke-width="1"/><path d="M1 6.6h14" stroke="#999" stroke-width="1" stroke-dasharray="1 1"/><path d="M1 9.6h14" stroke="#999" stroke-width="1.1" stroke-dasharray="3 1.2"/><path d="M1 12.4h14" stroke="#999" stroke-width="1" stroke-dasharray="1 1.4"/></svg>
<svg style="left:1076.5px;top:26.6px;" width="16" height="16" viewBox="0 0 16 16"><path d="M1 4h14" stroke="#9A9A9A" stroke-width="1.1"/><path d="M1 7.8h14" stroke="#8F8F8F" stroke-width="2"/><path d="M1 12.2h14" stroke="#8A8A8A" stroke-width="3"/></svg>
<svg style="left:1100.7px;top:26.6px;" width="16" height="16" viewBox="0 0 16 16"><ellipse cx="6.8" cy="10.6" rx="6" ry="3.2" transform="rotate(-14 6.8 10.6)" fill="#B9B9B9" stroke="#9A9A9A" stroke-width="0.6"/><path d="M4.6 13.6L13.6 2.4" stroke="#8C8C8C" stroke-width="2.4" stroke-linecap="round"/><path d="M4.6 13.6L13.6 2.4" stroke="#C9C9C9" stroke-width="0.9"/></svg>
<svg style="left:1131px;top:26.6px;" width="16" height="16" viewBox="0 0 16 16"><path d="M3.4 3.2l5.8-1.8 4.2 4.4-.4 2.2 1.6 2.2-.8 3.2-2 .4-.4 1.6-1.8-.2-.6-1.6-1.4 1.6-1.8-.4.4-2.6-2.4 1-1.2-1.6 2.6-2.4z" fill="#B6B6B6" stroke="#929292" stroke-width="0.7"/><rect x="5.6" y="3.6" width="4.6" height="3.6" fill="#CFCFCF" stroke="#9A9A9A" stroke-width="0.6"/><circle cx="9.4" cy="9.2" r="1.2" fill="#D6D6D6" stroke="#999" stroke-width="0.5"/></svg>
<svg style="left:1178.7px;top:26.6px;" width="16" height="16" viewBox="0 0 16 16"><path d="M5.5 11.2h10l-3 1.96h-10z" fill="#6F9BF0" stroke="#2A5FD0" stroke-width="0.55"/><path d="M5.5 8.4h10l-3 1.96h-10z" fill="#6F9BF0" stroke="#2A5FD0" stroke-width="0.55"/><path d="M5.5 5.6h10l-3 1.96h-10z" fill="#6F9BF0" stroke="#2A5FD0" stroke-width="0.55"/><rect x="1" y="0.6" width="5.8" height="5.8" fill="#F7D24A"/><path d="M3.9.6v5.8M1 3.5h5.8M1.6 1.2l4.6 4.6M6.2 1.2L1.6 5.8" stroke="#FFF7C8" stroke-width="0.8"/></svg>
<svg style="left:1208px;top:26.6px;" width="16" height="16" viewBox="0 0 16 16"><text x="1.8" y="13.6" font-family="Liberation Serif" font-weight="bold" font-size="15" fill="#8C8782">A</text></svg>
<svg style="left:1231.8px;top:26.6px;" width="16" height="16" viewBox="0 0 16 16"><rect x="1.9" y="11.3" width="2.6" height="2.6" fill="#F4F4F4" stroke="#6E6A64" stroke-width="0.9"/><rect x="5.3" y="3.5" width="2.6" height="2.6" fill="#F4F4F4" stroke="#6E6A64" stroke-width="0.9"/><rect x="10.9" y="8.3" width="2.6" height="2.6" fill="#F4F4F4" stroke="#6E6A64" stroke-width="0.9"/></svg>
<svg style="left:1257px;top:26.6px;" width="16" height="16" viewBox="0 0 16 16"><path d="M2.8 13.2L13.6 2.6" stroke="#7A7670" stroke-width="1.1"/><rect x="1.3" y="12.1" width="2.6" height="2.6" fill="#F4F4F4" stroke="#6E6A64" stroke-width="0.9"/><rect x="12.5" y="1.1" width="2.6" height="2.6" fill="#F4F4F4" stroke="#6E6A64" stroke-width="0.9"/></svg>
<svg style="left:1281px;top:26.6px;" width="16" height="16" viewBox="0 0 16 16"><path d="M2.5 2.8h10.6L9 8l4.2 5.6H2.5z" fill="#DADADA" stroke="#85817C" stroke-width="1.1"/></svg>
<svg style="left:1304.8px;top:26.6px;" width="16" height="16" viewBox="0 0 16 16"><path d="M8 1.6l6.6 4.8-2.4 7.8H3.8L1.4 6.4z" fill="#DADADA" stroke="#85817C" stroke-width="1.1"/></svg>
<svg style="left:1328.4px;top:26.6px;" width="16" height="16" viewBox="0 0 16 16"><circle cx="8" cy="8" r="6.6" fill="#DCDCDC" stroke="#85817C" stroke-width="1.1"/><path d="M8 8l3.8-3.8" stroke="#7A7670" stroke-width="1"/><rect x="6.9" y="6.9" width="2.2" height="2.2" fill="#F4F4F4" stroke="#6E6A64" stroke-width="0.9"/></svg>
<svg style="left:1352.8px;top:26.6px;" width="16" height="16" viewBox="0 0 16 16"><path d="M2.6 4.4l11.4-1-.6 8.2-11 .8z" fill="#DADADA" stroke="#85817C" stroke-width="1.1"/><rect x="1.2" y="11.4" width="2.4" height="2.4" fill="#F4F4F4" stroke="#6E6A64" stroke-width="0.9"/><rect x="12.8" y="2" width="2.4" height="2.4" fill="#F4F4F4" stroke="#6E6A64" stroke-width="0.9"/></svg>
<svg style="left:1377px;top:26.6px;" width="16" height="16" viewBox="0 0 16 16"><path d="M4.6 3.4H15l-3.6 9H1z" fill="#D8D8D8" stroke="#8F8B86" stroke-width="1"/></svg>
<svg style="left:1401px;top:26.6px;" width="16" height="16" viewBox="0 0 16 16"><path d="M2.4 14c.6-6.4 5-10.4 11.4-11.4" fill="none" stroke="#7A7670" stroke-width="1.2"/><rect x="1.2" y="12.6" width="2.4" height="2.4" fill="#F4F4F4" stroke="#6E6A64" stroke-width="0.9"/><rect x="5" y="5.4" width="2.4" height="2.4" fill="#F4F4F4" stroke="#6E6A64" stroke-width="0.9"/><rect x="12.6" y="1.4" width="2.4" height="2.4" fill="#F4F4F4" stroke="#6E6A64" stroke-width="0.9"/></svg>
<svg style="left:15px;top:54.7px;" width="16" height="16" viewBox="0 0 16 16"><path d="M1.1 9.6L2 6.4 9.2 0.2l2.6 2.6L4.4 9.2z" fill="#E2E2E2" stroke="#7A7A7A" stroke-width="0.9"/><path d="M3.2 7.4l6.8-6M4.4 8.4l6.6-6" stroke="#A8A8A8" stroke-width="0.6"/><path d="M1.1 9.6l1.5-.3-1-1z" fill="#555"/><path d="M0 11.9h7" stroke="#6E6E6E" stroke-width="1.5"/><circle cx="8.5" cy="11.9" r="1.8" fill="#EDEDED" stroke="#7F7F7F" stroke-width="0.9"/><circle cx="8.5" cy="11.9" r="0.5" fill="#7F7F7F"/><rect x="11.9" y="11.3" width="1.2" height="1.2" fill="#6E6E6E"/><rect x="13.9" y="11.3" width="1.2" height="1.2" fill="#6E6E6E"/></svg>
<svg style="left:44.3px;top:54.7px;" width="16" height="16" viewBox="0 0 16 16"><path d="M1.2 8.2l2.8-4.4 4 1.2 3.2-.8L14.4 0.6" stroke="#7A7A7A" fill="none" stroke-width="1.5"/><path d="M1.6 13.6l1.2-2M4.4 10.2l2.4-.6" stroke="#A8A8A8" stroke-width="1.2" stroke-dasharray="1.2 1"/><path transform="translate(9.8,4.4) scale(1.1)" d="M0 0v8l2-1.8 1.6 3.4 1.4-.7-1.6-3.2h2.6z" fill="#C4C4C4" stroke="#8A8A8A" stroke-width="0.8"/></svg>
<svg style="left:67.9px;top:54.7px;" width="16" height="16" viewBox="0 0 16 16"><path d="M1 7.6l2-3 3.2-.8 3.2 1.2 2.6-1.6L14.6 0.6" stroke="#7A7A7A" fill="none" stroke-width="1.5"/><path d="M1 13.4l2-3 3.2-.8 3.2 1.2 2.6-1.6 2.6-2.8" stroke="#7A7A7A" fill="none" stroke-width="1.5"/></svg>
<svg style="left:92.2px;top:54.7px;" width="16" height="16" viewBox="0 0 16 16"><path d="M2.2 0.6v13h12.8" stroke="#6A6A6A" stroke-width="1.8" fill="none"/><path d="M2.6 13.2l9.4-9" stroke="#7A7A7A" stroke-width="1"/><path d="M9.4 10v3.4" stroke="#7F7F7F" stroke-width="0.9"/><circle cx="13.2" cy="3" r="1.9" fill="#EDEDED" stroke="#7F7F7F" stroke-width="0.9"/><circle cx="13.2" cy="3" r="0.5" fill="#7F7F7F"/></svg>
<svg style="left:116.8px;top:54.7px;" width="16" height="16" viewBox="0 0 16 16"><path d="M1 8.2l2.4-4 3.6.8 3.8-1.2L14.4 0.6" stroke="#7A7A7A" fill="none" stroke-width="1.5"/><path d="M11.6 11.2l3 3" stroke="#A0A0A0" stroke-width="3" stroke-linecap="butt"/><circle cx="9.6" cy="8.8" r="3.2" fill="#CFCFCF" stroke="#A4A4A4" stroke-width="0.9"/><circle cx="8.8" cy="8" r="1.3" fill="#E6E6E6"/></svg>
<svg style="left:140.4px;top:54.7px;" width="16" height="16" viewBox="0 0 16 16"><path d="M1 1.4h14" stroke="#6E6E6E" stroke-width="1.4" stroke-dasharray="1.6 1.1"/><path d="M4.2 3.4v4M2.8 6l1.4 1.6L5.6 6M12.6 3.4v4M11.2 6l1.4 1.6L14 6" stroke="#8F8F8F" stroke-width="0.9" fill="none"/><path d="M1 10.6l5 4.2 4.4-5 4.8 4" stroke="#6E6E6E" stroke-width="1.5" fill="none"/></svg>
<svg style="left:164.7px;top:54.7px;" width="16" height="16" viewBox="0 0 16 16"><path d="M1.8 1v14.4" stroke="#6E6E6E" stroke-width="1.5" stroke-dasharray="1.6 1.1"/><path d="M6 1.4l9.2 11.4" stroke="#7A7A7A" stroke-width="1.3"/><path d="M4 6.8h4.6M7.2 5.4l1.6 1.4-1.6 1.4M4 11.6h7.8M10.4 10.2l1.6 1.4-1.6 1.4" stroke="#8F8F8F" stroke-width="0.9" fill="none"/></svg>
<svg style="left:188.6px;top:54.7px;" width="16" height="16" viewBox="0 0 16 16"><path d="M1 10.4C2.6 5 4.2 2.4 5.8 2.4c3.2 0 3.4 11.4 7.6 11.4h2" stroke="#7F7F7F" fill="none" stroke-width="1.2" stroke="#6E6E6E" stroke-width="1.1"/></svg>
<svg style="left:212.9px;top:54.7px;" width="16" height="16" viewBox="0 0 16 16"><path d="M1.4 9.8c.8-3 1.8-4.2 3-3.6l3.4 1.8c1.6.4 2.4-.6 3-1.6L14 1.8" stroke="#7F7F7F" fill="none" stroke-width="1.2" stroke-width="1.6"/><path d="M9.2 9.4l5.2 5.4M14.4 9.4l-5.2 5.4" stroke="#A4A4A4" stroke-width="2.2"/></svg>
<svg style="left:237.2px;top:54.7px;" width="16" height="16" viewBox="0 0 16 16"><text x="0" y="9.6" font-family="Liberation Serif" font-weight="bold" font-size="10" fill="#8A8A8A">A</text><text x="6" y="10.4" font-family="Liberation Serif" font-weight="bold" font-size="9" fill="#8A8A8A">A</text><path d="M7 14.6L15 7.4" stroke="#8F8F8F" stroke-width="3" stroke-linecap="round"/><path d="M7 14.6L15 7.4" stroke="#CFCFCF" stroke-width="1.2"/></svg>
<svg style="left:266.9px;top:54.7px;" width="16" height="16" viewBox="0 0 16 16"><path d="M0.8 8h4.6" stroke="#7F7F7F" fill="none" stroke-width="1.2" stroke-width="1.4"/><path d="M9 8h6.4" stroke="#7F7F7F" stroke-width="1.4" stroke-dasharray="1.6 1.2"/><circle cx="7" cy="8" r="1.9" fill="#EDEDED" stroke="#7F7F7F" stroke-width="0.9"/><circle cx="7" cy="8" r="0.5" fill="#7F7F7F"/></svg>
<svg style="left:290.5px;top:54.7px;" width="16" height="16" viewBox="0 0 16 16"><path d="M4.6 10.6V5M4.6 10.6l6 1.4M4.6 10.6L1 14.8" stroke="#8A8A8A" stroke-width="1.2" fill="none"/><path d="M4.6 3.4l1.5 2.6h-3zM12.2 12.4l-2.8 1-.2-2.8zM.4 15.6l.8-3 2 2z" fill="#8A8A8A"/><path d="M7.6 1.2l7.4 8" stroke="#7A7A7A" stroke-width="1.1"/><rect x="9.8" y="3.8" width="2.8" height="2.8" fill="#F0F0F0" stroke="#6E6E6E" stroke-width="0.9"/></svg>
<svg style="left:314.8px;top:54.7px;" width="16" height="16" viewBox="0 0 16 16"><path d="M1.4 14.6L7 8.4" stroke="#7A7A7A" stroke-width="1.3"/><path d="M9.8 5.4l5-4.4" stroke="#6E6E6E" stroke-width="1.5" stroke-dasharray="2 1.4"/><path d="M1.6 5L5 1.8M3 1.6h2.2v2.2" stroke="#A8A8A8" stroke-width="0.9" fill="none"/><rect x="7" y="5.6" width="2.8" height="2.8" fill="#F0F0F0" stroke="#6E6E6E" stroke-width="0.9"/></svg>
<svg style="left:338.7px;top:54.7px;" width="16" height="16" viewBox="0 0 16 16"><path d="M1.4 15l3.2-3.6 2.2 1.4 2.2-3.2 2 2 3.6-3.8V15z" fill="#A8A8A8" stroke="#8F8F8F" stroke-width="0.6"/><path d="M1 1.4l2.4 2.8" stroke="#7A7A7A" stroke-width="1.1"/><path d="M6.6 7.4l2.4 2.4" stroke="#8F8F8F" stroke-width="1" stroke-dasharray="1 1"/><rect x="3.2" y="4" width="2.8" height="2.8" fill="#F0F0F0" stroke="#6E6E6E" stroke-width="0.9"/></svg>
<svg style="left:369px;top:54.7px;" width="16" height="16" viewBox="0 0 16 16"><path d="M1.4 3.2h10M4.8 12.8h10" stroke="#7A7A7A" stroke-width="1.5"/><path d="M12.6 4.4L4 12" stroke="#7F7F7F" stroke-width="1" stroke-dasharray="1.6 1"/><circle cx="13" cy="3.2" r="1.9" fill="#EDEDED" stroke="#7F7F7F" stroke-width="0.9"/><circle cx="13" cy="3.2" r="0.5" fill="#7F7F7F"/><circle cx="3" cy="12.8" r="1.9" fill="#EDEDED" stroke="#7F7F7F" stroke-width="0.9"/><circle cx="3" cy="12.8" r="0.5" fill="#7F7F7F"/></svg>
<svg style="left:393.3px;top:54.7px;" width="16" height="16" viewBox="0 0 16 16"><path d="M0.8 6.6h5.4M5 12l3.4-9.6" stroke="#8A8A8A" stroke-width="1"/><circle cx="6.4" cy="6.6" r="1.6" fill="#EDEDED" stroke="#7F7F7F" stroke-width="0.9"/><circle cx="6.4" cy="6.6" r="0.5" fill="#7F7F7F"/><path transform="translate(9,6.4) scale(1)" d="M0 0v8l2-1.8 1.6 3.4 1.4-.7-1.6-3.2h2.6z" fill="#C8C8C8" stroke="#8F8F8F" stroke-width="0.8"/><path d="M12.6 6.4h2.6" stroke="#7F7F7F" stroke-width="1" stroke-dasharray="0.9 0.9"/></svg>
<svg style="left:417px;top:54.7px;" width="16" height="16" viewBox="0 0 16 16"><path d="M0.8 8.4h5.2M4.6 14l5-12" stroke="#8A8A8A" stroke-width="1"/><path d="M9.6 8.4h5.6" stroke="#7F7F7F" stroke-width="1.4" stroke-dasharray="1.5 1.1"/><circle cx="7.2" cy="8.2" r="1.8" fill="#EDEDED" stroke="#7F7F7F" stroke-width="0.9"/><circle cx="7.2" cy="8.2" r="0.5" fill="#7F7F7F"/></svg>
<svg style="left:441.6px;top:54.7px;" width="16" height="16" viewBox="0 0 16 16"><path d="M1 8l7.6-7" stroke="#8A8A8A" stroke-width="1"/><rect x="3.9" y="2.7" width="2.6" height="2.6" fill="#F0F0F0" stroke="#6E6E6E" stroke-width="0.9"/><circle cx="10.6" cy="10.6" r="4.3" fill="#8C8C8C"/><circle cx="9.4" cy="9.2" r="1.6" fill="#B4B4B4"/><path d="M12.8 7.4l1.8-2.6" stroke="#B4B4B4" stroke-width="1.8"/></svg>
<svg style="left:488.8px;top:54.7px;" width="16" height="16" viewBox="0 0 16 16"><path d="M7 0.6v15" stroke="#111" stroke-width="1.5"/><path d="M0.4 1.4L4 4.8" stroke="#1F7AD6" stroke-width="1.3"/><path d="M4 4.8L0.868205 4.14284L3.1651 1.71084z" fill="#1F7AD6"/><path d="M15 13.6L10.4 9.8" stroke="#1F7AD6" stroke-width="1.3"/><path d="M10.4 9.8L13.5685 10.248L11.438 12.827z" fill="#1F7AD6"/><circle cx="7" cy="8" r="2" fill="#fff" stroke="#0B7BD0" stroke-width="1.5"/></svg>
<svg style="left:513px;top:54.7px;" width="16" height="16" viewBox="0 0 16 16"><path d="M11.6 0.8v11.6H1.6" stroke="#111" stroke-width="1.6" fill="none"/><path d="M2.6 2.8L7.6 8" stroke="#1F7AD6" stroke-width="1.3"/><path d="M7.6 8L4.50348 7.1928L6.91481 4.87422z" fill="#1F7AD6"/><circle cx="11.4" cy="12.2" r="2" fill="#fff" stroke="#0B7BD0" stroke-width="1.5"/></svg>
<svg style="left:537px;top:54.7px;" width="16" height="16" viewBox="0 0 16 16"><path d="M1 1l14 14" stroke="#111" stroke-width="1.5"/><path d="M8.6 1.8h2.6l-1.3 1.6zM2 7.2v2.6l1.6-1.3z" fill="#2A5FD0"/><rect x="6.4" y="6.4" width="3.2" height="3.2" fill="#fff" stroke="#0B7BD0" stroke-width="0.9"/></svg>
<svg style="left:560.7px;top:54.7px;" width="16" height="16" viewBox="0 0 16 16"><path d="M1.2 15L15 1" stroke="#111" stroke-width="1.5"/><path d="M11.6 2.2l2.2 2.4M1.8 12l2.2 2.4" stroke="#111" stroke-width="1.2"/><path d="M1.6 1.4L5.4 5.4" stroke="#1F7AD6" stroke-width="1.3"/><path d="M5.4 5.4L2.3084 4.57415L4.73367 2.27014z" fill="#1F7AD6"/><circle cx="8.2" cy="8" r="2" fill="#fff" stroke="#0B7BD0" stroke-width="1.5"/></svg>
<svg style="left:584.3px;top:54.7px;" width="16" height="16" viewBox="0 0 16 16"><path d="M3.4 1v13M7.6 1v13M11.8 1v13M1 3.6h13M1 8h13M1 12.2h13" stroke="#8A8A8A" stroke-width="1.1"/><circle cx="7.6" cy="7.6" r="1.9" fill="#fff" stroke="#0B7BD0" stroke-width="1.5"/><path transform="translate(10,7.4) scale(1)" d="M0 0v8l2-1.8 1.6 3.4 1.4-.7-1.6-3.2h2.6z" fill="#D4DCEC" stroke="#7A86A4" stroke-width="0.8"/></svg>
<svg style="left:608.6px;top:54.7px;" width="16" height="16" viewBox="0 0 16 16"><path d="M1 1l14 14M15 1L1 15" stroke="#111" stroke-width="1.6"/><rect x="6.4" y="6.4" width="3.2" height="3.2" fill="#fff" stroke="#0B7BD0" stroke-width="0.9"/></svg>
<svg style="left:846.3px;top:54.7px;" width="16" height="16" viewBox="0 0 16 16"><path fill="#111" d="M1 0.5h1.35v1.35h-1.35zM1 2.83h1.35v1.35h-1.35zM1 5.16h1.35v1.35h-1.35zM1 7.49h1.35v1.35h-1.35zM1 9.82h1.35v1.35h-1.35zM1 12.15h1.35v1.35h-1.35zM3.33 0.5h1.35v1.35h-1.35zM3.33 12.15h1.35v1.35h-1.35zM5.66 0.5h1.35v1.35h-1.35zM5.66 12.15h1.35v1.35h-1.35zM7.99 0.5h1.35v1.35h-1.35zM7.99 12.15h1.35v1.35h-1.35zM10.32 0.5h1.35v1.35h-1.35zM10.32 12.15h1.35v1.35h-1.35zM12.65 0.5h1.35v1.35h-1.35zM12.65 2.83h1.35v1.35h-1.35zM12.65 5.16h1.35v1.35h-1.35zM12.65 7.49h1.35v1.35h-1.35zM12.65 9.82h1.35v1.35h-1.35zM12.65 12.15h1.35v1.35h-1.35z"/><g transform="translate(9.6,10.4)"><rect x="-1.5" y="-5.8" width="3" height="3.4" rx="0.8" fill="#D89A26" stroke="#96660E" stroke-width="0.5" transform="rotate(0)"/><rect x="-1.5" y="-5.8" width="3" height="3.4" rx="0.8" fill="#D89A26" stroke="#96660E" stroke-width="0.5" transform="rotate(45)"/><rect x="-1.5" y="-5.8" width="3" height="3.4" rx="0.8" fill="#D89A26" stroke="#96660E" stroke-width="0.5" transform="rotate(90)"/><rect x="-1.5" y="-5.8" width="3" height="3.4" rx="0.8" fill="#D89A26" stroke="#96660E" stroke-width="0.5" transform="rotate(135)"/><rect x="-1.5" y="-5.8" width="3" height="3.4" rx="0.8" fill="#D89A26" stroke="#96660E" stroke-width="0.5" transform="rotate(180)"/><rect x="-1.5" y="-5.8" width="3" height="3.4" rx="0.8" fill="#D89A26" stroke="#96660E" stroke-width="0.5" transform="rotate(225)"/><rect x="-1.5" y="-5.8" width="3" height="3.4" rx="0.8" fill="#D89A26" stroke="#96660E" stroke-width="0.5" transform="rotate(270)"/><rect x="-1.5" y="-5.8" width="3" height="3.4" rx="0.8" fill="#D89A26" stroke="#96660E" stroke-width="0.5" transform="rotate(315)"/><circle r="4.3" fill="#E8AE38" stroke="#A8761A" stroke-width="0.6"/><circle r="1.8" fill="#F9DE82" stroke="#B8861E" stroke-width="0.5"/></g></svg>
<svg style="left:870.3px;top:54.7px;" width="16" height="16" viewBox="0 0 16 16"><path fill="#111" d="M1 2h1.35v1.35h-1.35zM1 4.33h1.35v1.35h-1.35zM1 6.66h1.35v1.35h-1.35zM1 8.99h1.35v1.35h-1.35zM1 11.32h1.35v1.35h-1.35zM1 13.65h1.35v1.35h-1.35zM3.33 2h1.35v1.35h-1.35zM3.33 13.65h1.35v1.35h-1.35zM5.66 2h1.35v1.35h-1.35zM5.66 13.65h1.35v1.35h-1.35zM7.99 2h1.35v1.35h-1.35zM7.99 13.65h1.35v1.35h-1.35zM10.32 2h1.35v1.35h-1.35zM10.32 13.65h1.35v1.35h-1.35zM12.65 2h1.35v1.35h-1.35zM12.65 4.33h1.35v1.35h-1.35zM12.65 6.66h1.35v1.35h-1.35zM12.65 8.99h1.35v1.35h-1.35zM12.65 11.32h1.35v1.35h-1.35zM12.65 13.65h1.35v1.35h-1.35z"/><path d="M3.6 5.6l5-4.4 5.2 1-.2 5-3 1.2-2.2-.6-2 .8z" fill="#F2C534" stroke="#A97A12" stroke-width="0.7"/><path d="M5 4.6l3 2.4M6.4 3.4l3 2.4M7.8 2.4l3 2.2" stroke="#A97A12" stroke-width="0.6"/><rect x="13.2" y="1.4" width="1.8" height="5.4" fill="#1C3FB4"/></svg>
<svg style="left:899.6px;top:54.7px;" width="16" height="16" viewBox="0 0 16 16"><path fill="#111" d="M1 1h1.35v1.35h-1.35zM1 3.43h1.35v1.35h-1.35zM1 5.86h1.35v1.35h-1.35zM1 8.29h1.35v1.35h-1.35zM1 10.72h1.35v1.35h-1.35zM1 13.15h1.35v1.35h-1.35zM3.43 1h1.35v1.35h-1.35zM3.43 13.15h1.35v1.35h-1.35zM5.86 1h1.35v1.35h-1.35zM5.86 13.15h1.35v1.35h-1.35zM8.29 1h1.35v1.35h-1.35zM8.29 13.15h1.35v1.35h-1.35zM10.72 1h1.35v1.35h-1.35zM10.72 13.15h1.35v1.35h-1.35zM13.15 1h1.35v1.35h-1.35zM13.15 3.43h1.35v1.35h-1.35zM13.15 5.86h1.35v1.35h-1.35zM13.15 8.29h1.35v1.35h-1.35zM13.15 10.72h1.35v1.35h-1.35zM13.15 13.15h1.35v1.35h-1.35z"/><path d="M12.8 7.8L9.24 9.05L9.24 6.55z" fill="#A8A8A8"/><path d="M11.3355 11.3355L7.93435 9.70212L9.70212 7.93435z" fill="#A8A8A8"/><path d="M7.8 12.8L6.55 9.24L9.05 9.24z" fill="#A8A8A8"/><path d="M4.26447 11.3355L5.89788 7.93435L7.66565 9.70212z" fill="#A8A8A8"/><path d="M2.8 7.8L6.36 6.55L6.36 9.05z" fill="#A8A8A8"/><path d="M4.26447 4.26447L7.66565 5.89788L5.89788 7.66565z" fill="#A8A8A8"/><path d="M7.8 2.8L9.05 6.36L6.55 6.36z" fill="#A8A8A8"/><path d="M11.3355 4.26447L9.70212 7.66565L7.93435 5.89788z" fill="#A8A8A8"/><circle cx="7.8" cy="7.8" r="2.4" fill="#C8C8C8"/><circle cx="7.3" cy="7.3" r="1.08" fill="#FFF6C8"/></svg>
<svg style="left:923.2px;top:54.7px;" width="16" height="16" viewBox="0 0 16 16"><path fill="#111" d="M1 1h1.35v1.35h-1.35zM1 3.43h1.35v1.35h-1.35zM1 5.86h1.35v1.35h-1.35zM1 8.29h1.35v1.35h-1.35zM1 10.72h1.35v1.35h-1.35zM1 13.15h1.35v1.35h-1.35zM3.43 1h1.35v1.35h-1.35zM3.43 13.15h1.35v1.35h-1.35zM5.86 1h1.35v1.35h-1.35zM5.86 13.15h1.35v1.35h-1.35zM8.29 1h1.35v1.35h-1.35zM8.29 13.15h1.35v1.35h-1.35zM10.72 1h1.35v1.35h-1.35zM10.72 13.15h1.35v1.35h-1.35zM13.15 1h1.35v1.35h-1.35zM13.15 3.43h1.35v1.35h-1.35zM13.15 5.86h1.35v1.35h-1.35zM13.15 8.29h1.35v1.35h-1.35zM13.15 10.72h1.35v1.35h-1.35zM13.15 13.15h1.35v1.35h-1.35z"/><path d="M12.8 7.8L9.24 9.05L9.24 6.55z" fill="#E0A400"/><path d="M11.3355 11.3355L7.93435 9.70212L9.70212 7.93435z" fill="#E0A400"/><path d="M7.8 12.8L6.55 9.24L9.05 9.24z" fill="#E0A400"/><path d="M4.26447 11.3355L5.89788 7.93435L7.66565 9.70212z" fill="#E0A400"/><path d="M2.8 7.8L6.36 6.55L6.36 9.05z" fill="#E0A400"/><path d="M4.26447 4.26447L7.66565 5.89788L5.89788 7.66565z" fill="#E0A400"/><path d="M7.8 2.8L9.05 6.36L6.55 6.36z" fill="#E0A400"/><path d="M11.3355 4.26447L9.70212 7.66565L7.93435 5.89788z" fill="#E0A400"/><circle cx="7.8" cy="7.8" r="2.4" fill="#F4C534"/><circle cx="7.3" cy="7.3" r="1.08" fill="#FFF6C8"/></svg>
<svg style="left:948.5px;top:54.7px;" width="16" height="16" viewBox="0 0 16 16"><path d="M14.2 7.4L8.88 8.65L8.88 6.15z" fill="#E0A400"/><path d="M12.1497 12.3497L7.50406 9.47182L9.27182 7.70406z" fill="#E0A400"/><path d="M7.2 14.4L5.95 9.08L8.45 9.08z" fill="#E0A400"/><path d="M2.25025 12.3497L5.12818 7.70406L6.89594 9.47182z" fill="#E0A400"/><path d="M0.2 7.4L5.52 6.15L5.52 8.65z" fill="#E0A400"/><path d="M2.25025 2.45025L6.89594 5.32818L5.12818 7.09594z" fill="#E0A400"/><path d="M7.2 0.4L8.45 5.72L5.95 5.72z" fill="#E0A400"/><path d="M12.1497 2.45025L9.27182 7.09594L7.50406 5.32818z" fill="#E0A400"/><circle cx="7.2" cy="7.4" r="2.8" fill="#F4D04A"/><circle cx="6.7" cy="6.9" r="1.26" fill="#FFF6C8"/><path d="M7.2 0v15" stroke="none"/><path d="M0 0h7.2v15H0z" fill="#CADCF8" opacity="0"/><path d="M7.2 7.4L0.4 7.4" stroke="#B8B8B8" stroke-width="1.3"/><path d="M7.2 7.4L2.2 2.4" stroke="#B8B8B8" stroke-width="1.3"/><path d="M7.2 7.4L2.2 12.4" stroke="#B8B8B8" stroke-width="1.3"/><path transform="translate(9.4,6.4) scale(1)" d="M0 0v8l2-1.8 1.6 3.4 1.4-.7-1.6-3.2h2.6z" fill="#D4DCEC" stroke="#7A86A4" stroke-width="0.8"/></svg>
<svg style="left:971.5px;top:54.7px;" width="16" height="16" viewBox="0 0 16 16"><path d="M15.4 8L9.8 9.25L9.8 6.75z" fill="#E7A600"/><path d="M13.2326 13.2326L8.38891 10.1567L10.1567 8.38891z" fill="#E7A600"/><path d="M8 15.4L6.75 9.8L9.25 9.8z" fill="#E7A600"/><path d="M2.76741 13.2326L5.84332 8.38891L7.61109 10.1567z" fill="#E7A600"/><path d="M0.6 8L6.2 6.75L6.2 9.25z" fill="#E7A600"/><path d="M2.76741 2.76741L7.61109 5.84332L5.84332 7.61109z" fill="#E7A600"/><path d="M8 0.6L9.25 6.2L6.75 6.2z" fill="#E7A600"/><path d="M13.2326 2.76741L10.1567 7.61109L8.38891 5.84332z" fill="#E7A600"/><circle cx="8" cy="8" r="3" fill="#F4C534"/><circle cx="7.5" cy="7.5" r="1.35" fill="#FFF6C8"/></svg>
<svg style="left:1002px;top:54.7px;" width="16" height="16" viewBox="0 0 16 16"><ellipse cx="8.4" cy="6" rx="7" ry="4" transform="rotate(-12 8.4 6)" fill="none" stroke="#333" stroke-width="1.1"/><ellipse cx="8.4" cy="6" rx="6" ry="3.1" transform="rotate(-12 8.4 6)" fill="none" stroke="#999" stroke-width="0.7"/><path d="M2.4 9c.4 1.4 1.6 2 1 3.4-.4 1-1.4 1.8-1.2 3" fill="none" stroke="#333" stroke-width="1.1"/><circle cx="2.8" cy="9.6" r="1.1" fill="none" stroke="#333" stroke-width="0.8"/></svg>
<svg style="left:1026px;top:54.7px;" width="16" height="16" viewBox="0 0 16 16"><path fill="#111" d="M0.5 1h1.35v1.35h-1.35zM0.5 3.13h1.35v1.35h-1.35zM0.5 5.26h1.35v1.35h-1.35zM0.5 7.39h1.35v1.35h-1.35zM0.5 9.52h1.35v1.35h-1.35zM0.5 11.65h1.35v1.35h-1.35zM2.63 1h1.35v1.35h-1.35zM2.63 11.65h1.35v1.35h-1.35zM4.76 1h1.35v1.35h-1.35zM4.76 11.65h1.35v1.35h-1.35zM6.89 1h1.35v1.35h-1.35zM6.89 11.65h1.35v1.35h-1.35zM9.02 1h1.35v1.35h-1.35zM9.02 11.65h1.35v1.35h-1.35zM11.15 1h1.35v1.35h-1.35zM11.15 3.13h1.35v1.35h-1.35zM11.15 5.26h1.35v1.35h-1.35zM11.15 7.39h1.35v1.35h-1.35zM11.15 9.52h1.35v1.35h-1.35zM11.15 11.65h1.35v1.35h-1.35z"/><path transform="translate(9,6) scale(1.05)" d="M0 0v8l2-1.8 1.6 3.4 1.4-.7-1.6-3.2h2.6z" fill="#CCD6EA" stroke="#6C7CA4" stroke-width="0.8"/></svg>
<svg style="left:1050.3px;top:54.7px;" width="16" height="16" viewBox="0 0 16 16"><path fill="#111" d="M0.5 1h1.35v1.35h-1.35zM0.5 3.13h1.35v1.35h-1.35zM0.5 5.26h1.35v1.35h-1.35zM0.5 7.39h1.35v1.35h-1.35zM0.5 9.52h1.35v1.35h-1.35zM0.5 11.65h1.35v1.35h-1.35zM2.63 1h1.35v1.35h-1.35zM2.63 11.65h1.35v1.35h-1.35zM4.76 1h1.35v1.35h-1.35zM4.76 11.65h1.35v1.35h-1.35zM6.89 1h1.35v1.35h-1.35zM6.89 11.65h1.35v1.35h-1.35zM9.02 1h1.35v1.35h-1.35zM9.02 11.65h1.35v1.35h-1.35zM11.15 1h1.35v1.35h-1.35zM11.15 3.13h1.35v1.35h-1.35zM11.15 5.26h1.35v1.35h-1.35zM11.15 7.39h1.35v1.35h-1.35zM11.15 9.52h1.35v1.35h-1.35zM11.15 11.65h1.35v1.35h-1.35z"/><rect x="6.6" y="7.4" width="8" height="7.6" fill="#DCE7FA" stroke="#3A6ACC" stroke-width="0.9"/><path d="M14.2 8v6.6H7.2z" fill="#2F62D8" opacity=".75"/></svg>
<svg style="left:1074.3px;top:54.7px;" width="16" height="16" viewBox="0 0 16 16"><path fill="#111" d="M0.5 1h1.35v1.35h-1.35zM0.5 3.13h1.35v1.35h-1.35zM0.5 5.26h1.35v1.35h-1.35zM0.5 7.39h1.35v1.35h-1.35zM0.5 9.52h1.35v1.35h-1.35zM0.5 11.65h1.35v1.35h-1.35zM2.63 1h1.35v1.35h-1.35zM2.63 11.65h1.35v1.35h-1.35zM4.76 1h1.35v1.35h-1.35zM4.76 11.65h1.35v1.35h-1.35zM6.89 1h1.35v1.35h-1.35zM6.89 11.65h1.35v1.35h-1.35zM9.02 1h1.35v1.35h-1.35zM9.02 11.65h1.35v1.35h-1.35zM11.15 1h1.35v1.35h-1.35zM11.15 3.13h1.35v1.35h-1.35zM11.15 5.26h1.35v1.35h-1.35zM11.15 7.39h1.35v1.35h-1.35zM11.15 9.52h1.35v1.35h-1.35zM11.15 11.65h1.35v1.35h-1.35z"/><path d="M9 8.6l5.6 5.8M14.6 8.6L9 14.4" stroke="#E8301E" stroke-width="2.1"/></svg>
<svg style="left:1103.8px;top:54.7px;" width="16" height="16" viewBox="0 0 16 16"><path fill="#111" d="M1.5 1.5h1.35v1.35h-1.35zM1.5 3.73h1.35v1.35h-1.35zM1.5 5.96h1.35v1.35h-1.35zM1.5 8.19h1.35v1.35h-1.35zM1.5 10.42h1.35v1.35h-1.35zM1.5 12.65h1.35v1.35h-1.35zM3.73 1.5h1.35v1.35h-1.35zM3.73 12.65h1.35v1.35h-1.35zM5.96 1.5h1.35v1.35h-1.35zM5.96 12.65h1.35v1.35h-1.35zM8.19 1.5h1.35v1.35h-1.35zM8.19 12.65h1.35v1.35h-1.35zM10.42 1.5h1.35v1.35h-1.35zM10.42 12.65h1.35v1.35h-1.35zM12.65 1.5h1.35v1.35h-1.35zM12.65 3.73h1.35v1.35h-1.35zM12.65 5.96h1.35v1.35h-1.35zM12.65 8.19h1.35v1.35h-1.35zM12.65 10.42h1.35v1.35h-1.35zM12.65 12.65h1.35v1.35h-1.35z"/><circle cx="7.8" cy="7.8" r="2" fill="#fff" stroke="#0B7BD0" stroke-width="1.5"/></svg>
<svg style="left:1128px;top:54.7px;" width="16" height="16" viewBox="0 0 16 16"><path fill="#111" d="M0.5 1.5h1.35v1.35h-1.35zM0.5 3.73h1.35v1.35h-1.35zM0.5 5.96h1.35v1.35h-1.35zM0.5 8.19h1.35v1.35h-1.35zM0.5 10.42h1.35v1.35h-1.35zM0.5 12.65h1.35v1.35h-1.35zM2.73 1.5h1.35v1.35h-1.35zM2.73 12.65h1.35v1.35h-1.35zM4.96 1.5h1.35v1.35h-1.35zM4.96 12.65h1.35v1.35h-1.35zM7.19 1.5h1.35v1.35h-1.35zM7.19 12.65h1.35v1.35h-1.35zM9.42 1.5h1.35v1.35h-1.35zM9.42 12.65h1.35v1.35h-1.35zM11.65 1.5h1.35v1.35h-1.35zM11.65 3.73h1.35v1.35h-1.35zM11.65 5.96h1.35v1.35h-1.35zM11.65 8.19h1.35v1.35h-1.35zM11.65 10.42h1.35v1.35h-1.35zM11.65 12.65h1.35v1.35h-1.35z"/><circle cx="12.8" cy="7.8" r="2" fill="#fff" stroke="#0B7BD0" stroke-width="1.5"/></svg>
<div style="left:654px;top:51.7px;width:31px;height:23px;box-sizing:border-box;border:1px solid #7F9DCC;border-radius:2px;background:#fff;"></div>
<div style="left:676.5px;top:52.7px;width:7.5px;height:21px;background:linear-gradient(#E6E6E6,#DADADA 48%,#CBCBCB 52%,#D4D4D4);border-left:1px solid #9A9A9A;"></div>
<svg style="left:678.5px;top:62.2px;" width="5" height="3" viewBox="0 0 5 3"><path d="M0 0h5l-2.5 3z" fill="#222"/></svg>
<div style="left:686.6px;top:51.7px;width:31px;height:23px;box-sizing:border-box;border:1px solid #7F9DCC;border-radius:2px;background:linear-gradient(#E6E6E6,#DADADA 48%,#CBCBCB 52%,#D4D4D4);"></div>
<div style="left:709.1px;top:52.7px;width:7.5px;height:21px;background:linear-gradient(#E6E6E6,#DADADA 48%,#CBCBCB 52%,#D4D4D4);border-left:1px solid #9A9A9A;"></div>
<svg style="left:711.1px;top:62.2px;" width="5" height="3" viewBox="0 0 5 3"><path d="M0 0h5l-2.5 3z" fill="#222"/></svg>
<div style="left:688.6px;top:61.7px;width:20px;height:2.2px;background:#000;"></div>
<div style="left:719.5px;top:51.7px;width:31px;height:23px;box-sizing:border-box;border:1px solid #7F9DCC;border-radius:2px;background:linear-gradient(#E6E6E6,#DADADA 48%,#CBCBCB 52%,#D4D4D4);"></div>
<div style="left:742px;top:52.7px;width:7.5px;height:21px;background:linear-gradient(#E6E6E6,#DADADA 48%,#CBCBCB 52%,#D4D4D4);border-left:1px solid #9A9A9A;"></div>
<svg style="left:744px;top:62.2px;" width="5" height="3" viewBox="0 0 5 3"><path d="M0 0h5l-2.5 3z" fill="#222"/></svg>
<div style="left:721.5px;top:62.7px;width:20px;height:1px;background:#6E6E6E;"></div>
<div style="left:752.4px;top:51.7px;width:31px;height:23px;box-sizing:border-box;border:1px solid #7F9DCC;border-radius:2px;background:linear-gradient(#E6E6E6,#DADADA 48%,#CBCBCB 52%,#D4D4D4);"></div>
<div style="left:774.9px;top:52.7px;width:7.5px;height:21px;background:linear-gradient(#E6E6E6,#DADADA 48%,#CBCBCB 52%,#D4D4D4);border-left:1px solid #9A9A9A;"></div>
<svg style="left:776.9px;top:62.2px;" width="5" height="3" viewBox="0 0 5 3"><path d="M0 0h5l-2.5 3z" fill="#222"/></svg>
<div style="left:785.5px;top:51.7px;width:31px;height:23px;box-sizing:border-box;border:1px solid #7F9DCC;border-radius:2px;background:linear-gradient(#E6E6E6,#DADADA 48%,#CBCBCB 52%,#D4D4D4);"></div>
<div style="left:808px;top:52.7px;width:7.5px;height:21px;background:linear-gradient(#E6E6E6,#DADADA 48%,#CBCBCB 52%,#D4D4D4);border-left:1px solid #9A9A9A;"></div>
<svg style="left:810px;top:62.2px;" width="5" height="3" viewBox="0 0 5 3"><path d="M0 0h5l-2.5 3z" fill="#222"/></svg>
<svg style="left:13px;top:103.5px;" width="17" height="15" viewBox="0 0 17 15"><path d="M1 3.2c0-1 .6-1.6 1.6-1.6h4l1.4 1.6h6.6c.8 0 1.4.6 1.4 1.4v8.2c0 .8-.6 1.4-1.4 1.4H2.4c-.8 0-1.4-.6-1.4-1.4z" fill="#E9C64E" stroke="#C9A63A" stroke-width="0.6"/><path d="M1.2 6.2c2.6-1.4 10-2 14.6-1.6v8.2c0 .8-.6 1.4-1.4 1.4H2.6c-.8 0-1.4-.6-1.4-1.4z" fill="#F9E58A"/><path d="M1.2 6.2c2.6-1.4 10-2 14.6-1.6" fill="none" stroke="#FDF3B8" stroke-width="0.8"/></svg>
<svg style="left:17px;top:134.3px;" width="16" height="16" viewBox="0 0 16 16"><path d="M2.6 8v6.6h10.8V8" fill="#fff" stroke="#222" stroke-width="1.2"/><path d="M0.8 8.4L8 1.4l7.2 7" fill="none" stroke="#222" stroke-width="1.5"/><path d="M2.2 7.8L8 2.4l5.8 5.4z" fill="#F0B040"/><rect x="6.6" y="9.6" width="2.8" height="5" fill="#E8A020" stroke="#8A5A10" stroke-width="0.5"/><rect x="11" y="1.6" width="1.8" height="3.6" fill="#B03020"/></svg>
<svg style="left:42px;top:134.3px;" width="16" height="16" viewBox="0 0 16 16"><circle cx="8" cy="8" r="7" fill="#DDE6F4" stroke="#A9B4C6" stroke-width="1"/><path d="M3.6 8l4-3.6v2.2h4.6v2.8H7.6v2.2z" fill="#EEF2F8" stroke="#9AA4B6" stroke-width="0.9"/></svg>
<svg style="left:67px;top:134.3px;" width="16" height="16" viewBox="0 0 16 16"><circle cx="8" cy="8" r="7" fill="#DDE6F4" stroke="#A9B4C6" stroke-width="1"/><path d="M12.4 8l-4-3.6v2.2H3.8v2.8h4.6v2.2z" fill="#EEF2F8" stroke="#9AA4B6" stroke-width="0.9"/></svg>
<svg style="left:92px;top:134.3px;" width="16" height="16" viewBox="0 0 16 16"><rect x="1.4" y="0.8" width="12.6" height="14.4" fill="#F8FAFE" stroke="#5C7CC0" stroke-width="1"/><circle cx="4" cy="4" r="1.3" fill="#3A5FD8"/><circle cx="4" cy="8" r="1.3" fill="#E04030"/><circle cx="4" cy="12" r="1.3" fill="#F0B020"/><path d="M6.6 4h6M6.6 8h6M6.6 12h6" stroke="#6E7C98" stroke-width="1"/></svg>
<svg style="left:125.5px;top:134.3px;" width="16" height="16" viewBox="0 0 16 16"><path d="M3 7.6C3.6 5.6 5 4.4 6.8 4M13.6 8.2V3.8" stroke="#1A1A1A" stroke-width="1.2" fill="none"/><ellipse cx="5" cy="9" rx="2.4" ry="1.9" fill="#B7D4FA" stroke="#1A1A1A" stroke-width="1.2"/><ellipse cx="11.2" cy="9" rx="2.4" ry="1.9" fill="#B7D4FA" stroke="#1A1A1A" stroke-width="1.2"/><path d="M7.2 8.6h1.8" stroke="#1A1A1A" stroke-width="1"/></svg>
<svg style="left:150px;top:134.3px;" width="16" height="16" viewBox="0 0 16 16"><path d="M4.5 10h9.5l-3 2.17h-9.5z" fill="#A9C4F8" stroke="#3F74E4" stroke-width="0.55"/><path d="M4.5 6.9h9.5l-3 2.17h-9.5z" fill="#A9C4F8" stroke="#3F74E4" stroke-width="0.55"/><path d="M4.5 3.8h9.5l-3 2.17h-9.5z" fill="#A9C4F8" stroke="#3F74E4" stroke-width="0.55"/></svg>
<svg style="left:176.4px;top:134.3px;" width="16" height="16" viewBox="0 0 16 16"><rect x="7" y="0.6" width="7.4" height="6" fill="#E8C24A" stroke="#B08A22" stroke-width="0.6"/><path d="M1 9l6-6 2 1.2L3.4 10z" fill="#6E88D8" stroke="#3A55B0" stroke-width="0.5"/><g transform="translate(9.6,10.2)"><rect x="-1.3" y="-5.4" width="2.6" height="3" rx="0.7" fill="#E0A42A" stroke="#96660E" stroke-width="0.5" transform="rotate(0)"/><rect x="-1.3" y="-5.4" width="2.6" height="3" rx="0.7" fill="#E0A42A" stroke="#96660E" stroke-width="0.5" transform="rotate(45)"/><rect x="-1.3" y="-5.4" width="2.6" height="3" rx="0.7" fill="#E0A42A" stroke="#96660E" stroke-width="0.5" transform="rotate(90)"/><rect x="-1.3" y="-5.4" width="2.6" height="3" rx="0.7" fill="#E0A42A" stroke="#96660E" stroke-width="0.5" transform="rotate(135)"/><rect x="-1.3" y="-5.4" width="2.6" height="3" rx="0.7" fill="#E0A42A" stroke="#96660E" stroke-width="0.5" transform="rotate(180)"/><rect x="-1.3" y="-5.4" width="2.6" height="3" rx="0.7" fill="#E0A42A" stroke="#96660E" stroke-width="0.5" transform="rotate(225)"/><rect x="-1.3" y="-5.4" width="2.6" height="3" rx="0.7" fill="#E0A42A" stroke="#96660E" stroke-width="0.5" transform="rotate(270)"/><rect x="-1.3" y="-5.4" width="2.6" height="3" rx="0.7" fill="#E0A42A" stroke="#96660E" stroke-width="0.5" transform="rotate(315)"/><circle r="3.9" fill="#F0BA40" stroke="#A8761A" stroke-width="0.6"/><circle r="1.4" fill="#FBE7A0"/></g></svg>
<svg style="left:7px;top:164px;" width="16" height="16" viewBox="0 0 16 16"><rect x="0.4" y="6" width="2" height="8" fill="#D6D6D6" stroke="#8A8A8A" stroke-width="0.5"/><rect x="0.9" y="7" width="1" height="1.4" fill="#3AC040"/><rect x="3.6" y="1" width="11.6" height="9.6" rx="0.8" fill="#E4E8F0" stroke="#8A92A4" stroke-width="0.7"/><rect x="4.8" y="2.2" width="9.2" height="7.2" fill="#1C3FC8"/><path d="M4.8 2.2h9.2v3l-9.2 3z" fill="#3F66E8"/><path d="M7.6 10.6h3.6l.8 2.2H6.8z" fill="#C8CCD6"/><path d="M5.4 13.4h8" stroke="#A8AEBC" stroke-width="1.4"/></svg>
<svg style="left:22.8px;top:192px;" width="16" height="16" viewBox="0 0 16 16"><path d="M1 2h5.4v11.6H1z" fill="#EEF3FB" stroke="#6F86B4" stroke-width="0.8"/><path d="M3 1.4h5.4V14H3z" fill="#F4F7FD" stroke="#6F86B4" stroke-width="0.8"/><path d="M5.2 0.8h5.6l3 3V15H5.2z" fill="#FDFEFF" stroke="#5C7CB8" stroke-width="0.9"/><path d="M10.8.8v3h3" fill="#DCE6F6" stroke="#5C7CB8" stroke-width="0.7"/><path d="M6.2 14V3l2.6-1.2V14z" fill="#D6E4F8" opacity=".8"/></svg>
<svg style="left:22.8px;top:210.43px;" width="16" height="16" viewBox="0 0 16 16"><path d="M2.5 1h7l3.2 3.2V15H2.5z" fill="#FDFEFF" stroke="#5C7CB8" stroke-width="0.9"/><path d="M9.5 1v3.2h3.2" fill="#DCE6F6" stroke="#5C7CB8" stroke-width="0.7"/><path d="M3.4 14V3l3-1.4v12z" fill="#DCE8FA" opacity=".8"/><path d="M10.6 7.6l3.4 2.2v3.6L10.6 15.6 7.2 13.4V9.8z" fill="#3FA848" stroke="#1F7A2C" stroke-width="0.6"/><path d="M10.6 7.6l3.4 2.2-3.4 2-3.4-2z" fill="#7FD487"/></svg>
<svg style="left:22.8px;top:228.86px;" width="16" height="16" viewBox="0 0 16 16"><rect x="1.2" y="1" width="12.6" height="12.6" fill="#F4F7FD" stroke="#5C7CB8" stroke-width="0.9"/><rect x="1.2" y="1" width="12.6" height="2.4" fill="#A9BEE4"/><path d="M4.4 3.6v10M7.6 3.6v6M10.8 3.6v6M1.4 6.4h12M1.4 9.2h12" stroke="#8FA4CC" stroke-width="0.7"/><path d="M6.2 10.6l1.8 2-1.8 2-1.8-2z" fill="#F0C030"/><path d="M9.8 11.2l1.8 2-1.8 2-1.8-2z" fill="#D040C8"/><path d="M13.2 11l1.8 2-1.8 2-1.8-2z" fill="#3A7BE8"/></svg>
<svg style="left:22.8px;top:247.29px;" width="16" height="16" viewBox="0 0 16 16"><path d="M1.6 2h9.2v12.6H1.6z" fill="#FDFEFF" stroke="#4A5C88" stroke-width="1"/><path d="M2.6 13.6V3.4l3-1V13z" fill="#DCE8FA" opacity=".8"/><path d="M5.6 12.6L13.6 3.2" stroke="#C57A12" stroke-width="3.4" stroke-linecap="butt"/><path d="M5.6 12.6L13.6 3.2" stroke="#FFD84A" stroke-width="1.8"/><path d="M5.6 12.6L7.04 10.908" stroke="#E9D6B0" stroke-width="1.8"/><path d="M12.4 4.61L13.6 3.2" stroke="#D7503A" stroke-width="2.6"/><circle cx="14" cy="2.6" r="1.4" fill="#D0503A"/></svg>
<svg style="left:41.8px;top:265.72px;" width="16" height="16" viewBox="0 0 16 16"><path d="M1.5 0.8h6.6l3 3V14H1.5z" fill="#FDFEFF" stroke="#5C7CB8" stroke-width="0.9"/><path d="M8.1.8v3h3" fill="#DCE6F6" stroke="#5C7CB8" stroke-width="0.7"/><path d="M6.6 12.4h8.4l-3 1.82h-8.4z" fill="#7FA6F4" stroke="#2A5FD0" stroke-width="0.55"/><path d="M6.6 9.8h8.4l-3 1.82h-8.4z" fill="#7FA6F4" stroke="#2A5FD0" stroke-width="0.55"/><path d="M6.6 7.2h8.4l-3 1.82h-8.4z" fill="#7FA6F4" stroke="#2A5FD0" stroke-width="0.55"/></svg>
<svg style="left:59.6px;top:284.75px;" width="16" height="16" viewBox="0 0 16 16"><path d="M3.6 9.6h9.6l-3 2.17h-9.6z" fill="#A9C4F8" stroke="#3F74E4" stroke-width="0.55"/><path d="M3.6 6.5h9.6l-3 2.17h-9.6z" fill="#A9C4F8" stroke="#3F74E4" stroke-width="0.55"/><path d="M3.6 3.4h9.6l-3 2.17h-9.6z" fill="#A9C4F8" stroke="#3F74E4" stroke-width="0.55"/></svg>
<svg style="left:59.6px;top:303.18px;" width="16" height="16" viewBox="0 0 16 16"><path d="M3.6 9.6h9.6l-3 2.17h-9.6z" fill="#A9C4F8" stroke="#3F74E4" stroke-width="0.55"/><path d="M3.6 6.5h9.6l-3 2.17h-9.6z" fill="#A9C4F8" stroke="#3F74E4" stroke-width="0.55"/><path d="M3.6 3.4h9.6l-3 2.17h-9.6z" fill="#A9C4F8" stroke="#3F74E4" stroke-width="0.55"/><g transform="translate(7.4,7.4) scale(0.95)"><path d="M1.8 4V2.6a2.2 2.2 0 0 1 4.4 0V4" fill="none" stroke="#B9962E" stroke-width="1.3"/><rect x="0.5" y="3.8" width="7" height="5.2" rx="0.8" fill="#F5CB46" stroke="#A9821E" stroke-width="0.8"/><rect x="3.4" y="5.4" width="1.2" height="2" fill="#6A4E10"/></g></svg>
<svg style="left:59.6px;top:321.61px;" width="16" height="16" viewBox="0 0 16 16"><path d="M3.6 9.6h9.6l-3 2.17h-9.6z" fill="#A9C4F8" stroke="#3F74E4" stroke-width="0.55"/><path d="M3.6 6.5h9.6l-3 2.17h-9.6z" fill="#A9C4F8" stroke="#3F74E4" stroke-width="0.55"/><path d="M3.6 3.4h9.6l-3 2.17h-9.6z" fill="#A9C4F8" stroke="#3F74E4" stroke-width="0.55"/></svg>
<svg style="left:59.6px;top:340.04px;" width="16" height="16" viewBox="0 0 16 16"><path d="M3.6 9.6h9.6l-3 2.17h-9.6z" fill="#A9C4F8" stroke="#3F74E4" stroke-width="0.55"/><path d="M3.6 6.5h9.6l-3 2.17h-9.6z" fill="#A9C4F8" stroke="#3F74E4" stroke-width="0.55"/><path d="M3.6 3.4h9.6l-3 2.17h-9.6z" fill="#A9C4F8" stroke="#3F74E4" stroke-width="0.55"/></svg>
<svg style="left:59.6px;top:358.47px;" width="16" height="16" viewBox="0 0 16 16"><path d="M3.6 9.6h9.6l-3 2.17h-9.6z" fill="#A9C4F8" stroke="#3F74E4" stroke-width="0.55"/><path d="M3.6 6.5h9.6l-3 2.17h-9.6z" fill="#A9C4F8" stroke="#3F74E4" stroke-width="0.55"/><path d="M3.6 3.4h9.6l-3 2.17h-9.6z" fill="#A9C4F8" stroke="#3F74E4" stroke-width="0.55"/></svg>
<svg style="left:59.6px;top:376.9px;" width="16" height="16" viewBox="0 0 16 16"><path d="M3.6 9.6h9.6l-3 2.17h-9.6z" fill="#A9C4F8" stroke="#3F74E4" stroke-width="0.55"/><path d="M3.6 6.5h9.6l-3 2.17h-9.6z" fill="#A9C4F8" stroke="#3F74E4" stroke-width="0.55"/><path d="M3.6 3.4h9.6l-3 2.17h-9.6z" fill="#A9C4F8" stroke="#3F74E4" stroke-width="0.55"/></svg>
<svg style="left:59.6px;top:395.33px;" width="16" height="16" viewBox="0 0 16 16"><path d="M3.6 9.6h9.6l-3 2.17h-9.6z" fill="#A9C4F8" stroke="#3F74E4" stroke-width="0.55"/><path d="M3.6 6.5h9.6l-3 2.17h-9.6z" fill="#A9C4F8" stroke="#3F74E4" stroke-width="0.55"/><path d="M3.6 3.4h9.6l-3 2.17h-9.6z" fill="#A9C4F8" stroke="#3F74E4" stroke-width="0.55"/></svg>
<svg style="left:59.6px;top:413.76px;" width="16" height="16" viewBox="0 0 16 16"><path d="M3.6 9.6h9.6l-3 2.17h-9.6z" fill="#A9C4F8" stroke="#3F74E4" stroke-width="0.55"/><path d="M3.6 6.5h9.6l-3 2.17h-9.6z" fill="#A9C4F8" stroke="#3F74E4" stroke-width="0.55"/><path d="M3.6 3.4h9.6l-3 2.17h-9.6z" fill="#A9C4F8" stroke="#3F74E4" stroke-width="0.55"/></svg>
<svg style="left:59.6px;top:432.19px;" width="16" height="16" viewBox="0 0 16 16"><path d="M3.6 9.6h9.6l-3 2.17h-9.6z" fill="#A9C4F8" stroke="#3F74E4" stroke-width="0.55"/><path d="M3.6 6.5h9.6l-3 2.17h-9.6z" fill="#A9C4F8" stroke="#3F74E4" stroke-width="0.55"/><path d="M3.6 3.4h9.6l-3 2.17h-9.6z" fill="#A9C4F8" stroke="#3F74E4" stroke-width="0.55"/></svg>
<svg style="left:59.6px;top:450.62px;" width="16" height="16" viewBox="0 0 16 16"><path d="M3.6 9.6h9.6l-3 2.17h-9.6z" fill="#A9C4F8" stroke="#3F74E4" stroke-width="0.55"/><path d="M3.6 6.5h9.6l-3 2.17h-9.6z" fill="#A9C4F8" stroke="#3F74E4" stroke-width="0.55"/><path d="M3.6 3.4h9.6l-3 2.17h-9.6z" fill="#A9C4F8" stroke="#3F74E4" stroke-width="0.55"/></svg>
<svg style="left:59.6px;top:469.05px;" width="16" height="16" viewBox="0 0 16 16"><path d="M3.6 9.6h9.6l-3 2.17h-9.6z" fill="#A9C4F8" stroke="#3F74E4" stroke-width="0.55"/><path d="M3.6 6.5h9.6l-3 2.17h-9.6z" fill="#A9C4F8" stroke="#3F74E4" stroke-width="0.55"/><path d="M3.6 3.4h9.6l-3 2.17h-9.6z" fill="#A9C4F8" stroke="#3F74E4" stroke-width="0.55"/></svg>
<svg style="left:59.6px;top:487.48px;" width="16" height="16" viewBox="0 0 16 16"><path d="M3.6 9.6h9.6l-3 2.17h-9.6z" fill="#A9C4F8" stroke="#3F74E4" stroke-width="0.55"/><path d="M3.6 6.5h9.6l-3 2.17h-9.6z" fill="#A9C4F8" stroke="#3F74E4" stroke-width="0.55"/><path d="M3.6 3.4h9.6l-3 2.17h-9.6z" fill="#A9C4F8" stroke="#3F74E4" stroke-width="0.55"/></svg>
<svg style="left:59.6px;top:505.91px;" width="16" height="16" viewBox="0 0 16 16"><path d="M3.6 9.6h9.6l-3 2.17h-9.6z" fill="#A9C4F8" stroke="#3F74E4" stroke-width="0.55"/><path d="M3.6 6.5h9.6l-3 2.17h-9.6z" fill="#A9C4F8" stroke="#3F74E4" stroke-width="0.55"/><path d="M3.6 3.4h9.6l-3 2.17h-9.6z" fill="#A9C4F8" stroke="#3F74E4" stroke-width="0.55"/></svg>
<svg style="left:41.8px;top:523.74px;" width="16" height="16" viewBox="0 0 16 16"><path d="M1.5 0.8h6.6l3 3V14H1.5z" fill="#FDFEFF" stroke="#5C7CB8" stroke-width="0.9"/><path d="M8.1.8v3h3" fill="#DCE6F6" stroke="#5C7CB8" stroke-width="0.7"/><path d="M6.6 12.4h8.4l-3 1.82h-8.4z" fill="#7FA6F4" stroke="#2A5FD0" stroke-width="0.55"/><path d="M6.6 9.8h8.4l-3 1.82h-8.4z" fill="#7FA6F4" stroke="#2A5FD0" stroke-width="0.55"/><path d="M6.6 7.2h8.4l-3 1.82h-8.4z" fill="#7FA6F4" stroke="#2A5FD0" stroke-width="0.55"/></svg>
<svg style="left:41.8px;top:542.17px;" width="16" height="16" viewBox="0 0 16 16"><path d="M1.5 0.8h6.6l3 3V14H1.5z" fill="#FDFEFF" stroke="#5C7CB8" stroke-width="0.9"/><path d="M8.1.8v3h3" fill="#DCE6F6" stroke="#5C7CB8" stroke-width="0.7"/><path d="M6.6 12.4h8.4l-3 1.82h-8.4z" fill="#7FA6F4" stroke="#2A5FD0" stroke-width="0.55"/><path d="M6.6 9.8h8.4l-3 1.82h-8.4z" fill="#7FA6F4" stroke="#2A5FD0" stroke-width="0.55"/><path d="M6.6 7.2h8.4l-3 1.82h-8.4z" fill="#7FA6F4" stroke="#2A5FD0" stroke-width="0.55"/></svg>
<svg style="left:41.8px;top:560.6px;" width="16" height="16" viewBox="0 0 16 16"><path d="M1.5 0.8h6.6l3 3V14H1.5z" fill="#FDFEFF" stroke="#5C7CB8" stroke-width="0.9"/><path d="M8.1.8v3h3" fill="#DCE6F6" stroke="#5C7CB8" stroke-width="0.7"/><path d="M6.6 12.4h8.4l-3 1.82h-8.4z" fill="#7FA6F4" stroke="#2A5FD0" stroke-width="0.55"/><path d="M6.6 9.8h8.4l-3 1.82h-8.4z" fill="#7FA6F4" stroke="#2A5FD0" stroke-width="0.55"/><path d="M6.6 7.2h8.4l-3 1.82h-8.4z" fill="#7FA6F4" stroke="#2A5FD0" stroke-width="0.55"/></svg>
<svg style="left:5.5px;top:591px;" width="17" height="17" viewBox="0 0 17 17"><path d="M1 3.4c0-.8.6-1.4 1.4-1.4h3.6l1.2 1.4h6c.8 0 1.4.6 1.4 1.4v7.6c0 .8-.6 1.4-1.4 1.4H2.4c-.8 0-1.4-.6-1.4-1.4z" fill="#E9C64E" stroke="#C9A63A" stroke-width="0.6"/><path d="M1.2 6.2c2.4-1.2 9-1.8 13.2-1.4v7.6c0 .8-.6 1.4-1.4 1.4H2.6c-.8 0-1.4-.6-1.4-1.4z" fill="#F9E58A"/></svg>
<svg style="left:5.5px;top:621px;" width="17" height="17" viewBox="0 0 17 17"><path d="M5 5.4L8.6 1.2l3.8 4.2z" fill="#EEF3FB" stroke="#6F86B4" stroke-width="0.6"/><circle cx="8.6" cy="4" r="1.3" fill="#E05A3A"/><circle cx="8.6" cy="4" r="0.6" fill="#4A8BEA"/><path d="M1 6.6c0-.8.6-1.4 1.4-1.4h3l1.2 1.2h5.8c.8 0 1.4.6 1.4 1.4v5.8c0 .8-.6 1.4-1.4 1.4H2.4c-.8 0-1.4-.6-1.4-1.4z" fill="#E9C64E" stroke="#C9A63A" stroke-width="0.6"/><path d="M1.4 14.4L3.6 8.2h11.8l-2.4 6.4z" fill="#F9E58A" stroke="#D6B444" stroke-width="0.5"/></svg>
<svg style="left:5.5px;top:651px;" width="17" height="17" viewBox="0 0 17 17"><rect x="1" y="3" width="13" height="11.6" fill="#F6F8FD" stroke="#5C7CB8" stroke-width="0.9"/><rect x="1" y="3" width="13" height="2.4" fill="#4F7FE0"/><path d="M3 8h4M3 10.4h3M8.6 9v4M11 8v5" stroke="#8FA4CC" stroke-width="1"/><path d="M8.4 11.4l1.4-1 1 .8 1.6-2" stroke="#E06030" stroke-width="0.8" fill="none"/><path d="M4.6 11L14 1.6" stroke="#2A55B8" stroke-width="2.2" stroke-linecap="round"/><path d="M12.2 3.4L14.6 1" stroke="#F0B030" stroke-width="2"/><path d="M3.6 12.2l1-2 1 1z" fill="#222"/></svg>
<svg style="left:5.5px;top:681px;" width="17" height="17" viewBox="0 0 17 17"><circle cx="5" cy="4.8" r="2.7" fill="#E8B088" stroke="#9A6A44" stroke-width="0.5"/><path d="M0.6 13.4c0-3.8 2-5.4 4.4-5.4s4.4 1.6 4.4 5.4z" fill="#7FB048" stroke="#4F7A28" stroke-width="0.5"/><circle cx="10.6" cy="6.6" r="2.7" fill="#D89A70" stroke="#8A5A34" stroke-width="0.5"/><path d="M6.2 15.2c0-3.8 2-5.4 4.4-5.4s4.4 1.6 4.4 5.4z" fill="#5F8FD8" stroke="#3A62A8" stroke-width="0.5"/><path d="M9 4.8c.4-1.6 2.8-1.6 3.4 0z" fill="#5A3A20"/><path d="M3.2 3c.6-1.6 3-1.6 3.6 0z" fill="#C8A030"/></svg>
<svg style="left:5.5px;top:711px;" width="17" height="17" viewBox="0 0 17 17"><rect x="1" y="1.4" width="14" height="10" rx="1" fill="#C9D2E0" stroke="#7F8DA8" stroke-width="0.7"/><rect x="2.2" y="2.6" width="11.6" height="7.6" fill="#3F8AD0"/><path d="M2.2 2.6h11.6v3.2L2.2 8.6z" fill="#7FB8EC"/><path d="M6.4 11.4h3.2l.6 2H5.8z" fill="#AEB8C8"/><path d="M3.8 14.2h8.4" stroke="#9AA4B6" stroke-width="1.5"/></svg>
<svg style="left:5.5px;top:741px;" width="17" height="17" viewBox="0 0 17 17"><g transform="translate(4.6,4.6)"><rect x="-0.812" y="-3.915" width="1.624" height="2.03" fill="#8F948E" stroke="#5C6058" stroke-width="0.4" transform="rotate(0)"/><rect x="-0.812" y="-3.915" width="1.624" height="2.03" fill="#8F948E" stroke="#5C6058" stroke-width="0.4" transform="rotate(45)"/><rect x="-0.812" y="-3.915" width="1.624" height="2.03" fill="#8F948E" stroke="#5C6058" stroke-width="0.4" transform="rotate(90)"/><rect x="-0.812" y="-3.915" width="1.624" height="2.03" fill="#8F948E" stroke="#5C6058" stroke-width="0.4" transform="rotate(135)"/><rect x="-0.812" y="-3.915" width="1.624" height="2.03" fill="#8F948E" stroke="#5C6058" stroke-width="0.4" transform="rotate(180)"/><rect x="-0.812" y="-3.915" width="1.624" height="2.03" fill="#8F948E" stroke="#5C6058" stroke-width="0.4" transform="rotate(225)"/><rect x="-0.812" y="-3.915" width="1.624" height="2.03" fill="#8F948E" stroke="#5C6058" stroke-width="0.4" transform="rotate(270)"/><rect x="-0.812" y="-3.915" width="1.624" height="2.03" fill="#8F948E" stroke="#5C6058" stroke-width="0.4" transform="rotate(315)"/><circle r="2.9" fill="#8F948E" stroke="#5C6058" stroke-width="0.5"/><circle r="1.218" fill="#E8ECE6" stroke="#5C6058" stroke-width="0.4"/></g><g transform="translate(10.6,9.8)"><rect x="-1.008" y="-4.86" width="2.016" height="2.52" fill="#8F948E" stroke="#5C6058" stroke-width="0.4" transform="rotate(0)"/><rect x="-1.008" y="-4.86" width="2.016" height="2.52" fill="#8F948E" stroke="#5C6058" stroke-width="0.4" transform="rotate(45)"/><rect x="-1.008" y="-4.86" width="2.016" height="2.52" fill="#8F948E" stroke="#5C6058" stroke-width="0.4" transform="rotate(90)"/><rect x="-1.008" y="-4.86" width="2.016" height="2.52" fill="#8F948E" stroke="#5C6058" stroke-width="0.4" transform="rotate(135)"/><rect x="-1.008" y="-4.86" width="2.016" height="2.52" fill="#8F948E" stroke="#5C6058" stroke-width="0.4" transform="rotate(180)"/><rect x="-1.008" y="-4.86" width="2.016" height="2.52" fill="#8F948E" stroke="#5C6058" stroke-width="0.4" transform="rotate(225)"/><rect x="-1.008" y="-4.86" width="2.016" height="2.52" fill="#8F948E" stroke="#5C6058" stroke-width="0.4" transform="rotate(270)"/><rect x="-1.008" y="-4.86" width="2.016" height="2.52" fill="#8F948E" stroke="#5C6058" stroke-width="0.4" transform="rotate(315)"/><circle r="3.6" fill="#8F948E" stroke="#5C6058" stroke-width="0.5"/><circle r="1.512" fill="#E8ECE6" stroke="#5C6058" stroke-width="0.4"/></g><g transform="translate(4,12)"><rect x="-0.616" y="-2.97" width="1.232" height="1.54" fill="#8F948E" stroke="#5C6058" stroke-width="0.4" transform="rotate(0)"/><rect x="-0.616" y="-2.97" width="1.232" height="1.54" fill="#8F948E" stroke="#5C6058" stroke-width="0.4" transform="rotate(45)"/><rect x="-0.616" y="-2.97" width="1.232" height="1.54" fill="#8F948E" stroke="#5C6058" stroke-width="0.4" transform="rotate(90)"/><rect x="-0.616" y="-2.97" width="1.232" height="1.54" fill="#8F948E" stroke="#5C6058" stroke-width="0.4" transform="rotate(135)"/><rect x="-0.616" y="-2.97" width="1.232" height="1.54" fill="#8F948E" stroke="#5C6058" stroke-width="0.4" transform="rotate(180)"/><rect x="-0.616" y="-2.97" width="1.232" height="1.54" fill="#8F948E" stroke="#5C6058" stroke-width="0.4" transform="rotate(225)"/><rect x="-0.616" y="-2.97" width="1.232" height="1.54" fill="#8F948E" stroke="#5C6058" stroke-width="0.4" transform="rotate(270)"/><rect x="-0.616" y="-2.97" width="1.232" height="1.54" fill="#8F948E" stroke="#5C6058" stroke-width="0.4" transform="rotate(315)"/><circle r="2.2" fill="#8F948E" stroke="#5C6058" stroke-width="0.5"/><circle r="0.924" fill="#E8ECE6" stroke="#5C6058" stroke-width="0.4"/></g></svg>
<svg style="left:276.8px;top:604.6px;" width="14" height="14" viewBox="0 0 14 14"><rect x="1" y="2.4" width="10.4" height="12.6" fill="#FDFEFF" stroke="#5A6C98" stroke-width="1"/><text x="2.6" y="8" font-family="Liberation Sans" font-size="4.6" fill="#5A6C98">A</text><circle cx="4" cy="11.4" r="1.1" fill="none" stroke="#7F9CD0" stroke-width="0.7"/><path d="M5 12.4L14 2.4" stroke="#C57A12" stroke-width="3.4" stroke-linecap="butt"/><path d="M5 12.4L14 2.4" stroke="#FFD84A" stroke-width="1.8"/><path d="M5 12.4L6.62 10.6" stroke="#E9D6B0" stroke-width="1.8"/><path d="M12.65 3.9L14 2.4" stroke="#D7503A" stroke-width="2.6"/><circle cx="14.2" cy="2" r="1.3" fill="#D0503A"/></svg>
<svg style="left:280.5px;top:771.8px;" width="16" height="16" viewBox="0 0 16 16"><rect x="1" y="2.4" width="10.4" height="12.6" fill="#FDFEFF" stroke="#5A6C98" stroke-width="1"/><text x="2.6" y="8" font-family="Liberation Sans" font-size="4.6" fill="#5A6C98">A</text><circle cx="4" cy="11.4" r="1.1" fill="none" stroke="#7F9CD0" stroke-width="0.7"/><path d="M5 12.4L14 2.4" stroke="#C57A12" stroke-width="3.4" stroke-linecap="butt"/><path d="M5 12.4L14 2.4" stroke="#FFD84A" stroke-width="1.8"/><path d="M5 12.4L6.62 10.6" stroke="#E9D6B0" stroke-width="1.8"/><path d="M12.65 3.9L14 2.4" stroke="#D7503A" stroke-width="2.6"/><circle cx="14.2" cy="2" r="1.3" fill="#D0503A"/></svg>
<svg style="left:364.2px;top:771.8px;" width="16" height="16" viewBox="0 0 16 16"><circle cx="4.6" cy="11.4" r="3.4" fill="#E6ECF6" stroke="#6F7E9C" stroke-width="0.9"/><circle cx="4.6" cy="11.4" r="1.3" fill="#BFD0EC"/><path d="M6.6 9L11 4.4" stroke="#6F7E9C" stroke-width="1.6"/><rect x="8.6" y="0.8" width="6.6" height="3.4" rx="0.6" fill="#F0C040" stroke="#A9821E" stroke-width="0.6"/><rect x="9.8" y="4.4" width="5.4" height="3" rx="0.6" fill="#F6D668" stroke="#A9821E" stroke-width="0.6"/><rect x="9.8" y="7.6" width="3.6" height="2.6" rx="0.6" fill="#F0C040" stroke="#A9821E" stroke-width="0.6"/></svg>
<svg style="left:429.6px;top:771.8px;" width="16" height="16" viewBox="0 0 16 16"><rect x="1.6" y="3" width="12.8" height="11.6" rx="1" fill="#E9B838" stroke="#9A7418" stroke-width="0.8"/><rect x="3.4" y="5.2" width="9.2" height="8" fill="#F9E48C" stroke="#C9A43A" stroke-width="0.5"/><rect x="5" y="1.2" width="6" height="3.2" rx="0.8" fill="#C9CED8" stroke="#6F7686" stroke-width="0.7"/></svg>
<svg style="left:283.5px;top:734px;" width="15" height="15" viewBox="0 0 15 15"><path d="M1 6.4L8 1l7 5.4V15H1z" fill="#F4F7FD" stroke="#5C7CC0" stroke-width="0.9"/><path d="M3 7.4V4.2h10v3.2L8 11z" fill="#FBE08A" stroke="#D6AE3A" stroke-width="0.5"/><path d="M1 6.4l7 5.4 7-5.4M1 15l5.4-5M15 15l-5.4-5" fill="none" stroke="#5C7CC0" stroke-width="0.9"/></svg>
<svg style="left:815px;top:798px;" width="16" height="16" viewBox="0 0 16 16"><circle cx="8" cy="8" r="7.6" fill="#2FB044" stroke="#E6F4E8" stroke-width="0.8"/><path d="M2.6 6a5.8 5.8 0 0 1 10.8 0a9 4.4 0 0 0-10.8 0z" fill="#7FDC8C" opacity=".7"/><path d="M4 8.2l2.8 3 5.2-6" fill="none" stroke="#fff" stroke-width="2.2"/></svg>
<svg style="left:1113px;top:797.8px;" width="16" height="16" viewBox="0 0 16 16"><circle cx="8" cy="8" r="7.4" fill="#C9DCF2" stroke="#5E8FC4" stroke-width="0.9"/><circle cx="8" cy="8" r="5.9" fill="#4F8CCB" stroke="#3A72B0" stroke-width="0.6"/><path d="M3 6.4a5.4 5.4 0 0 1 10 0a8 4 0 0 0-10 0z" fill="#8FBAE4" opacity=".8"/><path d="M10.8 6.2A3.4 3.4 0 1 0 11.4 9" fill="none" stroke="#fff" stroke-width="1.5"/><path d="M11.8 3.8v3.4H8.4z" fill="#fff"/></svg>
<svg style="left:1136.7px;top:797.8px;" width="16" height="16" viewBox="0 0 16 16"><circle cx="8" cy="8" r="7.4" fill="#C9DCF2" stroke="#5E8FC4" stroke-width="0.9"/><circle cx="8" cy="8" r="5.9" fill="#4F8CCB" stroke="#3A72B0" stroke-width="0.6"/><path d="M3 6.4a5.4 5.4 0 0 1 10 0a8 4 0 0 0-10 0z" fill="#8FBAE4" opacity=".8"/><rect x="5.6" y="5" width="1.8" height="6" fill="#fff"/><rect x="8.6" y="5" width="1.8" height="6" fill="#fff"/></svg>
<svg style="left:1161px;top:797.8px;" width="16" height="16" viewBox="0 0 16 16"><circle cx="8" cy="8" r="7.4" fill="#C9DCF2" stroke="#5E8FC4" stroke-width="0.9"/><circle cx="8" cy="8" r="5.9" fill="#4F8CCB" stroke="#3A72B0" stroke-width="0.6"/><path d="M3 6.4a5.4 5.4 0 0 1 10 0a8 4 0 0 0-10 0z" fill="#8FBAE4" opacity=".8"/><path d="M6.2 4.6v6.8L11.6 8z" fill="#fff"/></svg>
<svg style="left:1185px;top:797.8px;" width="16" height="16" viewBox="0 0 16 16"><circle cx="8" cy="8" r="7.4" fill="#C9DCF2" stroke="#5E8FC4" stroke-width="0.9"/><circle cx="8" cy="8" r="5.9" fill="#4F8CCB" stroke="#3A72B0" stroke-width="0.6"/><path d="M3 6.4a5.4 5.4 0 0 1 10 0a8 4 0 0 0-10 0z" fill="#8FBAE4" opacity=".8"/><rect x="5.2" y="5.2" width="5.6" height="5.6" rx="0.6" fill="#fff"/></svg>
<svg style="left:1214.6px;top:797.8px;" width="16" height="16" viewBox="0 0 16 16"><circle cx="8" cy="8" r="7.4" fill="#E4E4E4" stroke="#A4A4A4" stroke-width="0.9"/><circle cx="8" cy="8" r="5.9" fill="#D42626" stroke="#A01818" stroke-width="0.6"/><path d="M3.2 6.2a5.2 5.2 0 0 1 9.6 0a8 4 0 0 0-9.6 0z" fill="#EC7A7A" opacity=".7"/><path d="M5.4 5.4l5.2 5.2M10.6 5.4l-5.2 5.2" stroke="#fff" stroke-width="2"/></svg>
<svg style="left:1244.6px;top:797.8px;" width="16" height="16" viewBox="0 0 16 16"><path d="M1.4 1.4h13.2v13.2H3L1.4 13z" fill="#5A4FC0" stroke="#2E2A82" stroke-width="0.8"/><rect x="3.6" y="1.8" width="8.8" height="6" fill="#F4F4FA"/><path d="M3.6 1.8h8.8v3l-8.8 2z" fill="#D8DCEC"/><rect x="4.6" y="10" width="7" height="4.6" fill="#26265A"/><rect x="8.6" y="10.8" width="2" height="3" fill="#D8D8E8"/></svg>
<svg style="left:1268.6px;top:797.8px;" width="16" height="16" viewBox="0 0 16 16"><rect x="2.4" y="1" width="12" height="14" fill="#FDFEFD" stroke="#6F7686" stroke-width="0.8"/><rect x="4.4" y="2.6" width="8.6" height="2.6" fill="#5FB050"/><path d="M4.4 7.4h8.6M4.4 9.6h8.6M4.4 11.8h8.6M8 6.2v7.2" stroke="#8FC080" stroke-width="0.9"/><path d="M1.4 2.4h2M1.4 4.6h2M1.4 6.8h2M1.4 9h2M1.4 11.2h2M1.4 13.4h2" stroke="#3A3A3A" stroke-width="0.9"/></svg>
<svg style="left:1316.8px;top:797.8px;" width="16" height="16" viewBox="0 0 16 16"><polygon points="1,5 5,1 15,1 15,11 11,15 1,15" fill="#EAF1FB"/><polygon points="1,5 5,1 15,1 11,5" fill="#3F6BAA"/><g fill="none" stroke="#3C68A8" stroke-width="0.9"><rect x="1" y="5" width="10" height="10"/><rect x="5" y="1" width="10" height="10" stroke-width="0.7"/><path d="M1 5l4-4M11 5l4-4M1 15l4-4M11 15l4-4"/></g></svg>
<svg style="left:1341px;top:797.8px;" width="16" height="16" viewBox="0 0 16 16"><polygon points="1,5 5,1 15,1 15,11 11,15 1,15" fill="#EAF1FB"/><polygon points="1,15 5,11 15,11 11,15" fill="#3F6BAA"/><g fill="none" stroke="#3C68A8" stroke-width="0.9"><rect x="1" y="5" width="10" height="10"/><rect x="5" y="1" width="10" height="10" stroke-width="0.7"/><path d="M1 5l4-4M11 5l4-4M1 15l4-4M11 15l4-4"/></g></svg>
<svg style="left:1365px;top:797.8px;" width="16" height="16" viewBox="0 0 16 16"><polygon points="1,5 5,1 15,1 15,11 11,15 1,15" fill="#EAF1FB"/><polygon points="1,5 5,1 5,11 1,15" fill="#3F6BAA"/><g fill="none" stroke="#3C68A8" stroke-width="0.9"><rect x="1" y="5" width="10" height="10"/><rect x="5" y="1" width="10" height="10" stroke-width="0.7"/><path d="M1 5l4-4M11 5l4-4M1 15l4-4M11 15l4-4"/></g></svg>
<svg style="left:1389px;top:797.8px;" width="16" height="16" viewBox="0 0 16 16"><polygon points="1,5 5,1 15,1 15,11 11,15 1,15" fill="#EAF1FB"/><polygon points="11,5 15,1 15,11 11,15" fill="#3F6BAA"/><g fill="none" stroke="#3C68A8" stroke-width="0.9"><rect x="1" y="5" width="10" height="10"/><rect x="5" y="1" width="10" height="10" stroke-width="0.7"/><path d="M1 5l4-4M11 5l4-4M1 15l4-4M11 15l4-4"/></g></svg>
<svg style="left:1413px;top:797.8px;" width="16" height="16" viewBox="0 0 16 16"><polygon points="1,5 5,1 15,1 15,11 11,15 1,15" fill="#EAF1FB"/><polygon points="1,5 11,5 11,15 1,15" fill="#3F6BAA"/><g fill="none" stroke="#3C68A8" stroke-width="0.9"><rect x="1" y="5" width="10" height="10"/><rect x="5" y="1" width="10" height="10" stroke-width="0.7"/><path d="M1 5l4-4M11 5l4-4M1 15l4-4M11 15l4-4"/></g></svg>
<svg style="left:1443.2px;top:797.8px;" width="16" height="16" viewBox="0 0 16 16"><polygon points="1,5 5,1 15,1 15,11 11,15 1,15" fill="#EAF1FB"/><polygon points="5,1 15,1 15,11 5,11" fill="#3F6BAA"/><g fill="none" stroke="#3C68A8" stroke-width="0.9"><rect x="1" y="5" width="10" height="10"/><rect x="5" y="1" width="10" height="10" stroke-width="0.7"/><path d="M1 5l4-4M11 5l4-4M1 15l4-4M11 15l4-4"/></g></svg>
<svg style="left:1466.5px;top:797.8px;" width="16" height="16" viewBox="0 0 16 16"><polygon points="8,1 14,4.5 14,11.5 8,15 2,11.5 2,4.5" fill="#EAF1FB"/><polygon points="8,1 14,4.5 14,11.5 8,8" fill="#3F6BAA"/><g fill="none" stroke="#3C68A8" stroke-width="0.9"><polygon points="8,1 14,4.5 14,11.5 8,15 2,11.5 2,4.5"/><path d="M8 8V15M8 8L2 4.5M8 8l6-3.5" stroke-width="0.8"/><path d="M8 1v7M2 11.5L8 8l6 3.5" stroke-width="0.5" opacity=".6"/></g></svg>
<svg style="left:1490.4px;top:797.8px;" width="16" height="16" viewBox="0 0 16 16"><polygon points="8,1 14,4.5 14,11.5 8,15 2,11.5 2,4.5" fill="#EAF1FB"/><polygon points="8,1 2,4.5 2,11.5 8,8" fill="#3F6BAA"/><g fill="none" stroke="#3C68A8" stroke-width="0.9"><polygon points="8,1 14,4.5 14,11.5 8,15 2,11.5 2,4.5"/><path d="M8 8V15M8 8L2 4.5M8 8l6-3.5" stroke-width="0.8"/><path d="M8 1v7M2 11.5L8 8l6 3.5" stroke-width="0.5" opacity=".6"/></g></svg>
<svg style="left:1514.4px;top:797.8px;" width="16" height="16" viewBox="0 0 16 16"><polygon points="8,1 14,4.5 14,11.5 8,15 2,11.5 2,4.5" fill="#EAF1FB"/><polygon points="14,4.5 14,11.5 8,15 8,8" fill="#3F6BAA"/><g fill="none" stroke="#3C68A8" stroke-width="0.9"><polygon points="8,1 14,4.5 14,11.5 8,15 2,11.5 2,4.5"/><path d="M8 8V15M8 8L2 4.5M8 8l6-3.5" stroke-width="0.8"/><path d="M8 1v7M2 11.5L8 8l6 3.5" stroke-width="0.5" opacity=".6"/></g></svg>
<svg style="left:1538px;top:797.8px;" width="16" height="16" viewBox="0 0 16 16"><polygon points="8,1 14,4.5 14,11.5 8,15 2,11.5 2,4.5" fill="#EAF1FB"/><polygon points="2,4.5 2,11.5 8,15 8,8" fill="#3F6BAA"/><g fill="none" stroke="#3C68A8" stroke-width="0.9"><polygon points="8,1 14,4.5 14,11.5 8,15 2,11.5 2,4.5"/><path d="M8 8V15M8 8L2 4.5M8 8l6-3.5" stroke-width="0.8"/><path d="M8 1v7M2 11.5L8 8l6 3.5" stroke-width="0.5" opacity=".6"/></g></svg>
<div style="left:0px;top:576px;width:271px;height:8.5px;background:linear-gradient(#DDEBFD,#BAD5F8);"></div>
<div style="left:1.5px;top:575px;width:266.5px;height:1px;background:#7D8B9C;"></div>
<svg style="left:127px;top:579px;" width="20" height="3" viewBox="0 0 20 3"><rect x="0" y="0" width="2" height="2" fill="#7DA0D8"/><rect x="4" y="0" width="2" height="2" fill="#7DA0D8"/><rect x="8" y="0" width="2" height="2" fill="#7DA0D8"/><rect x="12" y="0" width="2" height="2" fill="#7DA0D8"/><rect x="16" y="0" width="2" height="2" fill="#7DA0D8"/></svg>
<svg style="left:1.5px;top:78.6px;" width="14" height="14" viewBox="0 0 16 16"><g stroke="#3A6ED8" fill="none"><circle cx="8" cy="8" r="4.7" stroke-width="0.95"/><circle cx="8" cy="8" r="1.1" stroke-width="0.7"/><path d="M8 0.4v15.2M1.4 4.2l13.2 7.6M1.4 11.8l13.2-7.6" stroke-width="0.8"/></g></svg>
<svg style="left:280.6px;top:84.6px;" width="16" height="14" viewBox="0 0 16 14"><rect x="4.6" y="5.6" width="10.6" height="8" fill="#E9EEF8" stroke="#4F5F80" stroke-width="0.9"/><path d="M5.8 0.8l4.6 1.8v5l-4.6 2-4.6-2v-5z" fill="#2F6DE0" stroke="#1C4FB8" stroke-width="0.5"/><path d="M5.8 0.8l4.6 1.8-4.6 1.8-4.6-1.8z" fill="#6FA0F2"/><path d="M5.8 4.4v5.2" stroke="#9CC0F8" stroke-width="0.6"/></svg>
<svg style="left:1580px;top:90.6px;" width="16" height="16" viewBox="0 0 16 16"><rect x="1.2" y="3.6" width="13" height="10" fill="#F2F6FD" stroke="#3A5FB4" stroke-width="0.9"/><rect x="1.2" y="3.6" width="13" height="2.2" fill="#3F6EDC"/><path d="M2 12.8l11.6-6.4v6.4z" fill="#D8E4F8" opacity=".8"/><g transform="translate(2.6,3.4)"><path d="M0 0L3.4 0" stroke="#F2C21A" stroke-width="1.2"/><path d="M0 0L-3.4 0" stroke="#F2C21A" stroke-width="1.2"/><path d="M0 0L0 3.4" stroke="#F2C21A" stroke-width="1.2"/><path d="M0 0L0 -3.4" stroke="#F2C21A" stroke-width="1.2"/><path d="M0 0L2.4 2.4" stroke="#F2C21A" stroke-width="1.2"/><path d="M0 0L-2.4 2.4" stroke="#F2C21A" stroke-width="1.2"/><path d="M0 0L2.4 -2.4" stroke="#F2C21A" stroke-width="1.2"/><path d="M0 0L-2.4 -2.4" stroke="#F2C21A" stroke-width="1.2"/><circle r="1.3" fill="#FFF3B0"/></g></svg>
<svg style="left:1580px;top:115px;" width="16" height="16" viewBox="0 0 16 16"><rect x="1.2" y="2" width="13" height="10" fill="#F2F6FD" stroke="#3A5FB4" stroke-width="0.9"/><rect x="1.2" y="2" width="13" height="2.2" fill="#3F6EDC"/><path d="M2 11.2l11.6-6.4v6.4z" fill="#D8E4F8" opacity=".8"/><path d="M9.6 9.4l5.6 5.6M15.2 9.4l-5.6 5.6" stroke="#E8301E" stroke-width="2"/></svg>
<svg style="left:1580px;top:139.2px;" width="16" height="16" viewBox="0 0 16 16"><rect x="1.2" y="5" width="13" height="10" fill="#F2F6FD" stroke="#3A5FB4" stroke-width="0.9"/><rect x="1.2" y="5" width="13" height="2.2" fill="#3F6EDC"/><path d="M2 14.2l11.6-6.4v6.4z" fill="#D8E4F8" opacity=".8"/><path d="M3.4 5.6l5-4.4 5.2 1-.2 4.4-3 1.2-2.2-.6-2 .8z" fill="#F2C534" stroke="#A97A12" stroke-width="0.7"/><path d="M5 4.6l3 2.4M6.4 3.4l3 2.4M7.8 2.4l3 2.2" stroke="#A97A12" stroke-width="0.6"/><rect x="13.4" y="1.4" width="1.6" height="4.6" fill="#1C3FB4"/></svg>
<svg style="left:1580px;top:169.2px;" width="16" height="16" viewBox="0 0 16 16"><rect x="1.2" y="1.6" width="13" height="10" fill="#F2F6FD" stroke="#3A5FB4" stroke-width="0.9"/><rect x="1.2" y="1.6" width="13" height="2.2" fill="#3F6EDC"/><path d="" fill="#D8E4F8" opacity=".8"/><path d="M7.6 15.4l3.6-8 3.6 8M8.8 12.8h4.8" stroke="#27406E" stroke-width="1.4" fill="none"/></svg>
<svg style="left:1580px;top:193.8px;" width="16" height="16" viewBox="0 0 16 16"><rect x="1.2" y="1.6" width="13" height="10" fill="#F2F6FD" stroke="#3A5FB4" stroke-width="0.9"/><rect x="1.2" y="1.6" width="13" height="2.2" fill="#3F6EDC"/><path d="" fill="#D8E4F8" opacity=".8"/><g stroke="#2A5FD0" fill="#2A5FD0" stroke-width="1.1"><path d="M8.4 11.6V6M8.4 11.6l5 .6M8.4 11.6l-3 3.2" fill="none"/><path d="M8.4 4.4l1.5 2.6H6.9zM15 12.4l-2.6 1.2-.1-2.8zM4.6 15.6l.6-2.8 2 1.8z" stroke="none"/></g></svg>
<svg style="left:1580px;top:217px;" width="16" height="16" viewBox="0 0 16 16"><rect x="1.2" y="1.6" width="13" height="10" fill="#F2F6FD" stroke="#3A5FB4" stroke-width="0.9"/><rect x="1.2" y="1.6" width="13" height="2.2" fill="#3F6EDC"/><path d="" fill="#D8E4F8" opacity=".8"/><rect x="4.6" y="10.4" width="10.6" height="4" fill="#F4F4F4" stroke="#555" stroke-width="0.8"/><path d="M6.4 12.4v2M8.2 12.4v2M10 12.4v2M11.8 12.4v2M13.6 12.4v2" stroke="#555" stroke-width="0.7"/></svg>
<svg style="left:1580px;top:240.7px;" width="16" height="16" viewBox="0 0 16 16"><rect x="1.2" y="1.6" width="13" height="10" fill="#F2F6FD" stroke="#3A5FB4" stroke-width="0.9"/><rect x="1.2" y="1.6" width="13" height="2.2" fill="#3F6EDC"/><path d="" fill="#D8E4F8" opacity=".8"/><path d="M7.4 6.8v8.4M9.6 6.8v8.4M11.8 6.8v8.4M14 6.8v8.4M6 8.4h9.6M6 10.6h9.6M6 12.8h9.6M6 15h9.6" stroke="#2A55B8" stroke-width="0.9"/></svg>
<svg style="left:1580px;top:268.4px;" width="16" height="16" viewBox="0 0 16 16"><rect x="1.2" y="3.6" width="13" height="10" fill="#F2F6FD" stroke="#3A5FB4" stroke-width="0.9"/><rect x="1.2" y="3.6" width="13" height="2.2" fill="#3F6EDC"/><path d="M2 12.8l11.6-6.4v6.4z" fill="#D8E4F8" opacity=".8"/><path d="M3 9.4h10" stroke="#222" stroke-width="1.2" stroke-dasharray="1.2 1"/></svg>
<svg style="left:1580px;top:292.4px;" width="16" height="16" viewBox="0 0 16 16"><rect x="1.2" y="3.6" width="13" height="10" fill="#F2F6FD" stroke="#3A5FB4" stroke-width="0.9"/><rect x="1.2" y="3.6" width="13" height="2.2" fill="#3F6EDC"/><path d="M2 12.8l11.6-6.4v6.4z" fill="#D8E4F8" opacity=".8"/><path d="M8 4v9.6" stroke="#222" stroke-width="1.2" stroke-dasharray="1.2 1"/></svg>
<svg style="left:1580px;top:322px;" width="16" height="16" viewBox="0 0 16 16"><rect x="1" y="1.4" width="9.6" height="7.6" fill="#F2F6FD" stroke="#3A5FB4" stroke-width="0.9"/><rect x="1" y="1.4" width="9.6" height="2" fill="#3F6EDC"/><rect x="5.6" y="7" width="9.6" height="7.6" fill="#F2F6FD" stroke="#3A5FB4" stroke-width="0.9"/><rect x="5.6" y="7" width="9.6" height="2" fill="#3F6EDC"/><path d="M12.2 4.4l2.6-2.6M14.8 4.2V1.8h-2.4" stroke="#333" stroke-width="0.9" fill="none"/></svg>
<svg style="left:1580px;top:347.5px;" width="16" height="16" viewBox="0 0 16 16"><rect x="1.2" y="1.6" width="13" height="10" fill="#F2F6FD" stroke="#3A5FB4" stroke-width="0.9"/><rect x="1.2" y="1.6" width="13" height="2.2" fill="#3F6EDC"/><path d="" fill="#D8E4F8" opacity=".8"/><g transform="translate(8.2,6.6) scale(0.95)"><path d="M1.8 4V2.6a2.2 2.2 0 0 1 4.4 0V4" fill="none" stroke="#B9962E" stroke-width="1.3"/><rect x="0.5" y="3.8" width="7" height="5.2" rx="0.8" fill="#F5CB46" stroke="#A9821E" stroke-width="0.8"/><rect x="3.4" y="5.4" width="1.2" height="2" fill="#6A4E10"/></g></svg>
<svg style="left:1580px;top:371.6px;" width="16" height="16" viewBox="0 0 16 16"><rect x="1" y="2.6" width="11.6" height="5.4" fill="#F4F6FA" stroke="#3A4A6E" stroke-width="0.9"/><path d="M3 5.4v2.4M5 5.4v2.4M7 5.4v2.4M9 5.4v2.4M11 5.4v2.4" stroke="#3A4A6E" stroke-width="0.8"/><g transform="translate(8.2,6.6) scale(0.95)"><path d="M1.8 4V2.6a2.2 2.2 0 0 1 4.4 0V4" fill="none" stroke="#B9962E" stroke-width="1.3"/><rect x="0.5" y="3.8" width="7" height="5.2" rx="0.8" fill="#F5CB46" stroke="#A9821E" stroke-width="0.8"/><rect x="3.4" y="5.4" width="1.2" height="2" fill="#6A4E10"/></g></svg>
<svg style="left:1580px;top:398.8px;" width="16" height="16" viewBox="0 0 16 16"><rect x="1" y="1.6" width="12" height="9.6" fill="#3F7FD8" stroke="#2A4F9C" stroke-width="0.8"/><path d="M1.4 10.8l4-4.6 3 3 2-1.8 2.2 3.4z" fill="#5FA860"/><rect x="1.4" y="2" width="11.2" height="2.6" fill="#9CC4F2"/><path d="M14.6 9.6a4.6 4.6 0 1 1-4.6 4.6" fill="none" stroke="#6F7C98" stroke-width="1"/><path d="M6 12.2h8" stroke="#DDE6F6" stroke-width="2.4"/></svg>
<svg style="left:1580px;top:423px;" width="16" height="16" viewBox="0 0 16 16"><rect x="1" y="2.6" width="14" height="10.8" fill="#C9C9C9" stroke="#9A9A9A" stroke-width="0.9"/><rect x="2.4" y="4" width="11.2" height="8" fill="#B4B4B4"/><path d="M2.4 12l3.8-4 2.6 2.4 2-1.8 2.8 3.4z" fill="#D4D4D4"/></svg>
<svg style="left:1580px;top:452.8px;" width="16" height="16" viewBox="0 0 16 16"><rect x="1" y="1" width="6" height="6" fill="#B4B4B4" stroke="#7C7C7C" stroke-width="0.7"/><rect x="5" y="5" width="6" height="6" fill="#F6CE5A" stroke="#B8902A" stroke-width="0.7"/><rect x="9" y="9" width="6" height="6" fill="#B4B4B4" stroke="#7C7C7C" stroke-width="0.7"/></svg>
<svg style="left:1580px;top:476px;" width="16" height="16" viewBox="0 0 16 16"><rect x="6.6" y="6.6" width="8" height="8" fill="#B4B4B4" stroke="#7C7C7C" stroke-width="0.7"/><rect x="1.4" y="1.4" width="9" height="9" fill="#F6CE5A" stroke="#B8902A" stroke-width="0.7"/></svg>
<svg style="left:1580px;top:499.9px;" width="16" height="16" viewBox="0 0 16 16"><rect x="6.2" y="6.2" width="8.4" height="8.4" fill="#B4B4B4" stroke="#7C7C7C" stroke-width="0.7"/><rect x="1.4" y="1.4" width="10" height="10" fill="#F6CE5A" stroke="#B8902A" stroke-width="0.7"/></svg>
<svg style="left:1580px;top:524px;" width="16" height="16" viewBox="0 0 16 16"><rect x="1" y="1" width="6" height="6" fill="#B4B4B4" stroke="#7C7C7C" stroke-width="0.7"/><rect x="9" y="9" width="6" height="6" fill="#B4B4B4" stroke="#7C7C7C" stroke-width="0.7"/><rect x="4.4" y="4.4" width="7.4" height="7.4" fill="#F6CE5A" stroke="#B8902A" stroke-width="0.7"/></svg>
</body></html>
